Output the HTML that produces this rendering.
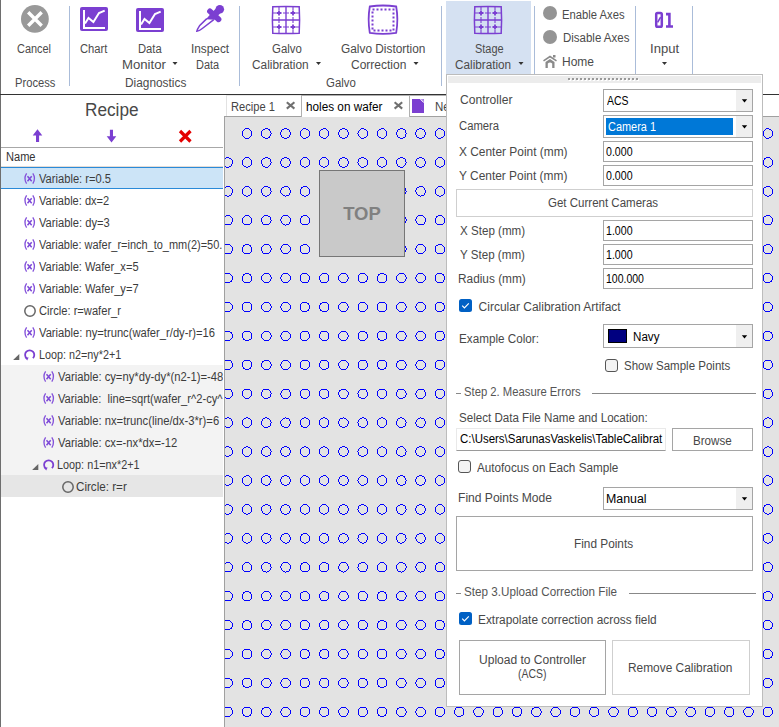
<!DOCTYPE html><html><head><meta charset="utf-8"><style>
html,body{margin:0;padding:0;width:779px;height:727px;overflow:hidden;background:#fff}
body{position:relative;font-family:"Liberation Sans",sans-serif}
.a{position:absolute}
.t{position:absolute;white-space:pre;line-height:1;transform-origin:0 0;font-family:"Liberation Sans",sans-serif}
</style></head><body>
<div class="a" style="left:0;top:95px;width:224px;height:632px;background:#fff"></div><div class="a" style="left:1px;top:147px;width:222px;height:1px;background:#a8a8a8"></div><div class="a" style="left:1px;top:166px;width:222px;height:1px;background:#e4dcd6"></div><div class="a" style="left:1px;top:167px;width:222px;height:20px;border-top:1px solid #2a8ad8;border-bottom:1px solid #2a8ad8;background:#cce4f7"></div><div class="a" style="left:1px;top:365px;width:222px;height:110px;background:#f3f3f3"></div><div class="a" style="left:1px;top:475px;width:222px;height:22px;background:#e6e6e6"></div><svg class="a" style="left:23.9px;top:167px;overflow:visible" width="14" height="22"><path d="M2.6 6.4 Q-0.8 11.5 2.6 16.6 M8.8 6.4 Q12.2 11.5 8.8 16.6" stroke="#8350da" stroke-width="1.3" fill="none"/><path d="M3.5 9.2 L7.7 14.3 M7.7 9.2 L3.5 14.3" stroke="#7d48d8" stroke-width="1.5"/></svg><svg class="a" style="left:23.9px;top:189px;overflow:visible" width="14" height="22"><path d="M2.6 6.4 Q-0.8 11.5 2.6 16.6 M8.8 6.4 Q12.2 11.5 8.8 16.6" stroke="#8350da" stroke-width="1.3" fill="none"/><path d="M3.5 9.2 L7.7 14.3 M7.7 9.2 L3.5 14.3" stroke="#7d48d8" stroke-width="1.5"/></svg><svg class="a" style="left:23.9px;top:211px;overflow:visible" width="14" height="22"><path d="M2.6 6.4 Q-0.8 11.5 2.6 16.6 M8.8 6.4 Q12.2 11.5 8.8 16.6" stroke="#8350da" stroke-width="1.3" fill="none"/><path d="M3.5 9.2 L7.7 14.3 M7.7 9.2 L3.5 14.3" stroke="#7d48d8" stroke-width="1.5"/></svg><svg class="a" style="left:23.9px;top:233px;overflow:visible" width="14" height="22"><path d="M2.6 6.4 Q-0.8 11.5 2.6 16.6 M8.8 6.4 Q12.2 11.5 8.8 16.6" stroke="#8350da" stroke-width="1.3" fill="none"/><path d="M3.5 9.2 L7.7 14.3 M7.7 9.2 L3.5 14.3" stroke="#7d48d8" stroke-width="1.5"/></svg><svg class="a" style="left:23.9px;top:255px;overflow:visible" width="14" height="22"><path d="M2.6 6.4 Q-0.8 11.5 2.6 16.6 M8.8 6.4 Q12.2 11.5 8.8 16.6" stroke="#8350da" stroke-width="1.3" fill="none"/><path d="M3.5 9.2 L7.7 14.3 M7.7 9.2 L3.5 14.3" stroke="#7d48d8" stroke-width="1.5"/></svg><svg class="a" style="left:23.9px;top:277px;overflow:visible" width="14" height="22"><path d="M2.6 6.4 Q-0.8 11.5 2.6 16.6 M8.8 6.4 Q12.2 11.5 8.8 16.6" stroke="#8350da" stroke-width="1.3" fill="none"/><path d="M3.5 9.2 L7.7 14.3 M7.7 9.2 L3.5 14.3" stroke="#7d48d8" stroke-width="1.5"/></svg><svg class="a" style="left:22.9px;top:303.7px" width="14" height="14"><circle cx="7" cy="7" r="5.2" stroke="#666" stroke-width="1.5" fill="none"/></svg><svg class="a" style="left:23.9px;top:321px;overflow:visible" width="14" height="22"><path d="M2.6 6.4 Q-0.8 11.5 2.6 16.6 M8.8 6.4 Q12.2 11.5 8.8 16.6" stroke="#8350da" stroke-width="1.3" fill="none"/><path d="M3.5 9.2 L7.7 14.3 M7.7 9.2 L3.5 14.3" stroke="#7d48d8" stroke-width="1.5"/></svg><svg class="a" style="left:11.9px;top:347px" width="26" height="14"><path d="M1.1 13 L7.3 7 V13 Z" fill="#666"/><path d="M20.9 11.2 A4.6 4.6 0 1 0 14.6 11.3" stroke="#7b3fd1" stroke-width="1.8" fill="none"/><path d="M12.6 10.2 L16.6 10.4 L15.2 13.6 Z" fill="#7b3fd1"/></svg><svg class="a" style="left:42.7px;top:365px;overflow:visible" width="14" height="22"><path d="M2.6 6.4 Q-0.8 11.5 2.6 16.6 M8.8 6.4 Q12.2 11.5 8.8 16.6" stroke="#8350da" stroke-width="1.3" fill="none"/><path d="M3.5 9.2 L7.7 14.3 M7.7 9.2 L3.5 14.3" stroke="#7d48d8" stroke-width="1.5"/></svg><svg class="a" style="left:42.7px;top:387px;overflow:visible" width="14" height="22"><path d="M2.6 6.4 Q-0.8 11.5 2.6 16.6 M8.8 6.4 Q12.2 11.5 8.8 16.6" stroke="#8350da" stroke-width="1.3" fill="none"/><path d="M3.5 9.2 L7.7 14.3 M7.7 9.2 L3.5 14.3" stroke="#7d48d8" stroke-width="1.5"/></svg><svg class="a" style="left:42.7px;top:409px;overflow:visible" width="14" height="22"><path d="M2.6 6.4 Q-0.8 11.5 2.6 16.6 M8.8 6.4 Q12.2 11.5 8.8 16.6" stroke="#8350da" stroke-width="1.3" fill="none"/><path d="M3.5 9.2 L7.7 14.3 M7.7 9.2 L3.5 14.3" stroke="#7d48d8" stroke-width="1.5"/></svg><svg class="a" style="left:42.7px;top:431px;overflow:visible" width="14" height="22"><path d="M2.6 6.4 Q-0.8 11.5 2.6 16.6 M8.8 6.4 Q12.2 11.5 8.8 16.6" stroke="#8350da" stroke-width="1.3" fill="none"/><path d="M3.5 9.2 L7.7 14.3 M7.7 9.2 L3.5 14.3" stroke="#7d48d8" stroke-width="1.5"/></svg><svg class="a" style="left:30.7px;top:457px" width="26" height="14"><path d="M1.1 13 L7.3 7 V13 Z" fill="#666"/><path d="M20.9 11.2 A4.6 4.6 0 1 0 14.6 11.3" stroke="#7b3fd1" stroke-width="1.8" fill="none"/><path d="M12.6 10.2 L16.6 10.4 L15.2 13.6 Z" fill="#7b3fd1"/></svg><svg class="a" style="left:60.5px;top:479.7px" width="14" height="14"><circle cx="7" cy="7" r="5.2" stroke="#666" stroke-width="1.5" fill="none"/></svg><div class="a" style="left:0;top:0;width:223px;height:727px;overflow:hidden"><div class="t" style="left:39.40px;top:172.94px;font-size:12px;color:#3c3c3c;transform:scaleX(0.9299);">Variable: r=0.5</div><div class="t" style="left:39.40px;top:194.94px;font-size:12px;color:#3c3c3c;transform:scaleX(0.9211);">Variable: dx=2</div><div class="t" style="left:39.40px;top:216.94px;font-size:12px;color:#3c3c3c;transform:scaleX(0.9276);">Variable: dy=3</div><div class="t" style="left:39.40px;top:238.94px;font-size:12px;color:#3c3c3c;transform:scaleX(0.9140);">Variable: wafer_r=inch_to_mm(2)=50.</div><div class="t" style="left:39.40px;top:260.94px;font-size:12px;color:#3c3c3c;transform:scaleX(0.9241);">Variable: Wafer_x=5</div><div class="t" style="left:39.40px;top:282.94px;font-size:12px;color:#3c3c3c;transform:scaleX(0.9241);">Variable: Wafer_y=7</div><div class="t" style="left:39.40px;top:304.94px;font-size:12px;color:#3c3c3c;transform:scaleX(0.9281);">Circle: r=wafer_r</div><div class="t" style="left:39.40px;top:326.94px;font-size:12px;color:#3c3c3c;transform:scaleX(0.9330);">Variable: ny=trunc(wafer_r/dy-r)=16</div><div class="t" style="left:38.50px;top:348.94px;font-size:12px;color:#3c3c3c;transform:scaleX(0.8989);">Loop: n2=ny*2+1</div><div class="t" style="left:57.90px;top:370.94px;font-size:12px;color:#3c3c3c;transform:scaleX(0.9364);">Variable: cy=ny*dy-dy*(n2-1)=-48</div><div class="t" style="left:57.90px;top:392.94px;font-size:12px;color:#3c3c3c;transform:scaleX(0.9311);">Variable:  line=sqrt(wafer_r^2-cy^</div><div class="t" style="left:57.90px;top:414.94px;font-size:12px;color:#3c3c3c;transform:scaleX(0.9378);">Variable: nx=trunc(line/dx-3*r)=6</div><div class="t" style="left:57.90px;top:436.94px;font-size:12px;color:#3c3c3c;transform:scaleX(0.9378);">Variable: cx=-nx*dx=-12</div><div class="t" style="left:57.00px;top:458.94px;font-size:12px;color:#3c3c3c;transform:scaleX(0.9033);">Loop: n1=nx*2+1</div><div class="t" style="left:76.40px;top:480.94px;font-size:12px;color:#3c3c3c;transform:scaleX(0.9698);">Circle: r=r</div></div><svg class="a" style="left:0;top:0" width="224" height="160"><path d="M37.5 129.2 L42.3 135.6 H39.1 V142 H36 V135.6 H32.7 Z" fill="#7b3fd1"/><path d="M111.5 142.6 L106.7 136.2 H109.9 V129.8 H113 V136.2 H116.3 Z" fill="#7b3fd1"/><path d="M180 131 L190.5 141.5 M190.5 131 L180 141.5" stroke="#e40000" stroke-width="3.2"/></svg><div class="a" style="left:0;top:0;width:1px;height:727px;background:#6e6e6e"></div><div class="a" style="left:224px;top:116px;width:555px;height:611px;background:#e3e3e3;border-left:1px solid #a0a0a0;border-top:1px solid #a0a0a0;box-sizing:border-box"></div><svg class="a" style="left:225px;top:117px" width="554" height="610" viewBox="225 117 554 610"><path fill="#0000ff" shape-rendering="crispEdges" d="M766 128h3v1h-3zM765 129h1v1h-1zM769 129h2v1h-2zM764 130h1v1h-1zM771 130h1v1h-1zM763 131h1v5h-1zM772 131h1v5h-1zM764 136h1v1h-1zM771 136h1v1h-1zM765 137h1v1h-1zM769 137h2v1h-2zM766 138h3v1h-3zM747 128h3v1h-3zM745 129h2v1h-2zM750 129h2v1h-2zM744 130h1v2h-1zM752 130h1v2h-1zM743 132h1v3h-1zM753 132h1v3h-1zM744 135h1v2h-1zM752 135h1v2h-1zM745 137h2v1h-2zM750 137h2v1h-2zM747 138h3v1h-3zM728 128h3v1h-3zM726 129h2v1h-2zM731 129h1v1h-1zM725 130h1v1h-1zM732 130h1v1h-1zM724 131h1v5h-1zM733 131h1v5h-1zM725 136h1v1h-1zM732 136h1v1h-1zM726 137h2v1h-2zM731 137h1v1h-1zM728 138h3v1h-3zM708 128h3v1h-3zM707 129h1v1h-1zM711 129h2v1h-2zM706 130h1v1h-1zM713 130h1v1h-1zM705 131h1v5h-1zM714 131h1v5h-1zM706 136h1v1h-1zM713 136h1v1h-1zM707 137h1v1h-1zM711 137h2v1h-2zM708 138h3v1h-3zM689 128h3v1h-3zM687 129h2v1h-2zM692 129h2v1h-2zM686 130h1v2h-1zM694 130h1v2h-1zM685 132h1v3h-1zM695 132h1v3h-1zM686 135h1v2h-1zM694 135h1v2h-1zM687 137h2v1h-2zM692 137h2v1h-2zM689 138h3v1h-3zM670 128h3v1h-3zM668 129h2v1h-2zM673 129h2v1h-2zM667 130h1v2h-1zM675 130h1v3h-1zM666 132h1v3h-1zM676 133h1v1h-1zM675 134h1v3h-1zM667 135h1v2h-1zM668 137h2v1h-2zM673 137h2v1h-2zM670 138h3v1h-3zM651 128h3v1h-3zM649 129h2v1h-2zM654 129h1v1h-1zM648 130h1v1h-1zM655 130h1v1h-1zM647 131h1v5h-1zM656 131h1v5h-1zM648 136h1v1h-1zM655 136h1v1h-1zM649 137h2v1h-2zM654 137h1v1h-1zM651 138h3v1h-3zM631 128h3v1h-3zM630 129h1v1h-1zM634 129h2v1h-2zM629 130h1v1h-1zM636 130h1v1h-1zM628 131h1v5h-1zM637 131h1v5h-1zM629 136h1v1h-1zM636 136h1v1h-1zM630 137h1v1h-1zM634 137h2v1h-2zM631 138h3v1h-3zM612 128h3v1h-3zM610 129h2v1h-2zM615 129h2v1h-2zM609 130h1v2h-1zM617 130h1v2h-1zM608 132h1v3h-1zM618 132h1v3h-1zM609 135h1v2h-1zM617 135h1v2h-1zM610 137h2v1h-2zM615 137h2v1h-2zM612 138h3v1h-3zM593 128h3v1h-3zM591 129h2v1h-2zM596 129h1v1h-1zM590 130h1v1h-1zM597 130h1v1h-1zM589 131h1v5h-1zM598 131h1v5h-1zM590 136h1v1h-1zM597 136h1v1h-1zM591 137h2v1h-2zM596 137h1v1h-1zM593 138h3v1h-3zM573 128h3v1h-3zM572 129h1v1h-1zM576 129h2v1h-2zM571 130h1v1h-1zM578 130h1v1h-1zM570 131h1v5h-1zM579 131h1v5h-1zM571 136h1v1h-1zM578 136h1v1h-1zM572 137h1v1h-1zM576 137h2v1h-2zM573 138h3v1h-3zM554 128h3v1h-3zM552 129h2v1h-2zM557 129h2v1h-2zM551 130h1v2h-1zM559 130h1v2h-1zM550 132h1v3h-1zM560 132h1v3h-1zM551 135h1v2h-1zM559 135h1v2h-1zM552 137h2v1h-2zM557 137h2v1h-2zM554 138h3v1h-3zM535 128h3v1h-3zM533 129h2v1h-2zM538 129h2v1h-2zM532 130h1v2h-1zM540 130h1v3h-1zM531 132h1v3h-1zM541 133h1v1h-1zM540 134h1v3h-1zM532 135h1v2h-1zM533 137h2v1h-2zM538 137h2v1h-2zM535 138h3v1h-3zM516 128h3v1h-3zM514 129h2v1h-2zM519 129h1v1h-1zM513 130h1v1h-1zM520 130h1v1h-1zM512 131h1v5h-1zM521 131h1v5h-1zM513 136h1v1h-1zM520 136h1v1h-1zM514 137h2v1h-2zM519 137h1v1h-1zM516 138h3v1h-3zM496 128h3v1h-3zM495 129h1v1h-1zM499 129h2v1h-2zM494 130h1v1h-1zM501 130h1v1h-1zM493 131h1v5h-1zM502 131h1v5h-1zM494 136h1v1h-1zM501 136h1v1h-1zM495 137h1v1h-1zM499 137h2v1h-2zM496 138h3v1h-3zM477 128h3v1h-3zM475 129h2v1h-2zM480 129h2v1h-2zM474 130h1v2h-1zM482 130h1v2h-1zM473 132h1v3h-1zM483 132h1v3h-1zM474 135h1v2h-1zM482 135h1v2h-1zM475 137h2v1h-2zM480 137h2v1h-2zM477 138h3v1h-3zM458 128h3v1h-3zM456 129h2v1h-2zM461 129h1v1h-1zM455 130h1v1h-1zM462 130h1v1h-1zM454 131h1v5h-1zM463 131h1v5h-1zM455 136h1v1h-1zM462 136h1v1h-1zM456 137h2v1h-2zM461 137h1v1h-1zM458 138h3v1h-3zM438 128h3v1h-3zM437 129h1v1h-1zM441 129h2v1h-2zM436 130h1v1h-1zM443 130h1v1h-1zM435 131h1v5h-1zM444 131h1v5h-1zM436 136h1v1h-1zM443 136h1v1h-1zM437 137h1v1h-1zM441 137h2v1h-2zM438 138h3v1h-3zM419 128h3v1h-3zM417 129h2v1h-2zM422 129h2v1h-2zM416 130h1v2h-1zM424 130h1v2h-1zM415 132h1v3h-1zM425 132h1v3h-1zM416 135h1v2h-1zM424 135h1v2h-1zM417 137h2v1h-2zM422 137h2v1h-2zM419 138h3v1h-3zM400 128h3v1h-3zM398 129h2v1h-2zM403 129h2v1h-2zM397 130h1v2h-1zM405 130h1v3h-1zM396 132h1v3h-1zM406 133h1v1h-1zM405 134h1v3h-1zM397 135h1v2h-1zM398 137h2v1h-2zM403 137h2v1h-2zM400 138h3v1h-3zM381 128h3v1h-3zM379 129h2v1h-2zM384 129h1v1h-1zM378 130h1v1h-1zM385 130h1v1h-1zM377 131h1v5h-1zM386 131h1v5h-1zM378 136h1v1h-1zM385 136h1v1h-1zM379 137h2v1h-2zM384 137h1v1h-1zM381 138h3v1h-3zM361 128h3v1h-3zM360 129h1v1h-1zM364 129h2v1h-2zM359 130h1v1h-1zM366 130h1v1h-1zM358 131h1v2h-1zM367 131h1v5h-1zM357 133h1v1h-1zM358 134h1v2h-1zM359 136h1v1h-1zM366 136h1v1h-1zM360 137h1v1h-1zM364 137h2v1h-2zM361 138h3v1h-3zM342 128h3v1h-3zM340 129h2v1h-2zM345 129h2v1h-2zM339 130h1v2h-1zM347 130h1v2h-1zM338 132h1v3h-1zM348 132h1v3h-1zM339 135h1v2h-1zM347 135h1v2h-1zM340 137h2v1h-2zM345 137h2v1h-2zM342 138h3v1h-3zM323 128h3v1h-3zM321 129h2v1h-2zM326 129h1v1h-1zM320 130h1v1h-1zM327 130h1v1h-1zM319 131h1v5h-1zM328 131h1v5h-1zM320 136h1v1h-1zM327 136h1v1h-1zM321 137h2v1h-2zM326 137h1v1h-1zM323 138h3v1h-3zM303 128h3v1h-3zM302 129h1v1h-1zM306 129h2v1h-2zM301 130h1v1h-1zM308 130h1v1h-1zM300 131h1v5h-1zM309 131h1v5h-1zM301 136h1v1h-1zM308 136h1v1h-1zM302 137h1v1h-1zM306 137h2v1h-2zM303 138h3v1h-3zM284 128h3v1h-3zM282 129h2v1h-2zM287 129h2v1h-2zM281 130h1v2h-1zM289 130h1v2h-1zM280 132h1v3h-1zM290 132h1v3h-1zM281 135h1v2h-1zM289 135h1v2h-1zM282 137h2v1h-2zM287 137h2v1h-2zM284 138h3v1h-3zM265 128h3v1h-3zM263 129h2v1h-2zM268 129h2v1h-2zM262 130h1v1h-1zM269 130h1v1h-1zM261 131h1v5h-1zM270 131h1v2h-1zM271 133h1v1h-1zM270 134h1v2h-1zM262 136h1v1h-1zM269 136h1v1h-1zM263 137h2v1h-2zM268 137h2v1h-2zM265 138h3v1h-3zM245 128h4v1h-4zM244 129h1v1h-1zM249 129h1v1h-1zM243 130h1v1h-1zM250 130h1v1h-1zM242 131h1v5h-1zM251 131h1v5h-1zM243 136h1v1h-1zM250 136h1v1h-1zM244 137h1v1h-1zM249 137h1v1h-1zM245 138h4v1h-4zM766 157h4v1h-4zM764 158h2v1h-2zM770 158h1v1h-1zM764 159h1v1h-1zM771 159h1v1h-1zM763 160h1v5h-1zM772 160h1v5h-1zM764 165h1v1h-1zM771 165h1v1h-1zM765 166h2v1h-2zM769 166h2v1h-2zM767 167h2v1h-2zM747 157h3v1h-3zM745 158h2v1h-2zM750 158h2v1h-2zM744 159h1v2h-1zM752 159h1v2h-1zM743 161h1v3h-1zM753 161h1v3h-1zM744 164h1v2h-1zM752 164h1v2h-1zM745 166h2v1h-2zM750 166h2v1h-2zM747 167h3v1h-3zM727 157h4v1h-4zM726 158h1v1h-1zM731 158h2v1h-2zM725 159h1v1h-1zM732 159h1v1h-1zM724 160h1v5h-1zM733 160h1v5h-1zM725 165h1v1h-1zM732 165h1v1h-1zM726 166h2v1h-2zM730 166h2v1h-2zM728 167h2v1h-2zM708 157h4v1h-4zM707 158h1v1h-1zM712 158h1v1h-1zM706 159h1v1h-1zM713 159h1v1h-1zM705 160h1v5h-1zM714 160h1v5h-1zM706 165h1v1h-1zM713 165h1v1h-1zM707 166h2v1h-2zM711 166h2v1h-2zM709 167h2v1h-2zM689 157h3v1h-3zM687 158h2v1h-2zM692 158h2v1h-2zM686 159h1v2h-1zM694 159h1v2h-1zM685 161h1v2h-1zM695 161h1v3h-1zM686 163h1v2h-1zM694 164h1v2h-1zM687 165h1v1h-1zM688 166h1v1h-1zM692 166h2v1h-2zM689 167h3v1h-3zM670 157h3v1h-3zM668 158h2v1h-2zM673 158h2v1h-2zM667 159h1v2h-1zM675 159h1v2h-1zM666 161h1v3h-1zM676 161h1v2h-1zM675 163h1v2h-1zM667 164h1v2h-1zM674 165h1v1h-1zM668 166h2v1h-2zM673 166h1v1h-1zM670 167h3v1h-3zM650 157h4v1h-4zM649 158h1v1h-1zM654 158h1v1h-1zM648 159h1v1h-1zM655 159h1v1h-1zM647 160h1v5h-1zM656 160h1v5h-1zM648 165h1v1h-1zM655 165h1v1h-1zM649 166h2v1h-2zM653 166h2v1h-2zM651 167h2v1h-2zM631 157h4v1h-4zM629 158h2v1h-2zM635 158h1v1h-1zM629 159h1v1h-1zM636 159h1v1h-1zM628 160h1v5h-1zM637 160h1v5h-1zM629 165h1v1h-1zM636 165h1v1h-1zM630 166h2v1h-2zM634 166h2v1h-2zM632 167h2v1h-2zM612 157h3v1h-3zM610 158h2v1h-2zM615 158h2v1h-2zM609 159h1v2h-1zM617 159h1v2h-1zM608 161h1v3h-1zM618 161h1v3h-1zM609 164h1v2h-1zM617 164h1v2h-1zM610 166h2v1h-2zM615 166h2v1h-2zM612 167h3v1h-3zM592 157h4v1h-4zM591 158h1v1h-1zM596 158h1v1h-1zM590 159h1v1h-1zM597 159h1v1h-1zM589 160h1v5h-1zM598 160h1v5h-1zM590 165h1v1h-1zM597 165h1v1h-1zM591 166h2v1h-2zM595 166h2v1h-2zM593 167h2v1h-2zM573 157h4v1h-4zM572 158h1v1h-1zM577 158h1v1h-1zM571 159h1v1h-1zM578 159h1v1h-1zM570 160h1v5h-1zM579 160h1v5h-1zM571 165h1v1h-1zM578 165h1v1h-1zM572 166h2v1h-2zM576 166h2v1h-2zM574 167h2v1h-2zM554 157h3v1h-3zM552 158h2v1h-2zM557 158h2v1h-2zM551 159h1v2h-1zM559 159h1v2h-1zM550 161h1v3h-1zM560 161h1v3h-1zM551 164h1v1h-1zM559 164h1v2h-1zM552 165h1v1h-1zM553 166h1v1h-1zM557 166h2v1h-2zM554 167h3v1h-3zM535 157h3v1h-3zM533 158h2v1h-2zM538 158h2v1h-2zM532 159h1v1h-1zM540 159h1v3h-1zM531 160h1v4h-1zM541 162h1v1h-1zM540 163h1v2h-1zM532 164h1v2h-1zM539 165h1v1h-1zM533 166h2v1h-2zM538 166h1v1h-1zM535 167h3v1h-3zM515 157h4v1h-4zM514 158h1v1h-1zM519 158h1v1h-1zM513 159h1v1h-1zM520 159h1v1h-1zM512 160h1v5h-1zM521 160h1v5h-1zM513 165h1v1h-1zM520 165h1v1h-1zM514 166h2v1h-2zM518 166h2v1h-2zM516 167h2v1h-2zM496 157h4v1h-4zM494 158h2v1h-2zM500 158h1v1h-1zM494 159h1v1h-1zM501 159h1v1h-1zM493 160h1v5h-1zM502 160h1v5h-1zM494 165h1v1h-1zM501 165h1v1h-1zM495 166h2v1h-2zM499 166h2v1h-2zM497 167h2v1h-2zM477 157h3v1h-3zM475 158h2v1h-2zM480 158h2v1h-2zM474 159h1v2h-1zM482 159h1v2h-1zM473 161h1v3h-1zM483 161h1v3h-1zM474 164h1v2h-1zM482 164h1v2h-1zM475 166h2v1h-2zM480 166h2v1h-2zM477 167h3v1h-3zM457 157h4v1h-4zM456 158h1v1h-1zM461 158h1v1h-1zM455 159h1v1h-1zM462 159h1v1h-1zM454 160h1v5h-1zM463 160h1v5h-1zM455 165h1v1h-1zM462 165h1v1h-1zM456 166h2v1h-2zM460 166h2v1h-2zM458 167h2v1h-2zM438 157h4v1h-4zM437 158h1v1h-1zM442 158h1v1h-1zM436 159h1v1h-1zM443 159h1v1h-1zM435 160h1v5h-1zM444 160h1v5h-1zM436 165h1v1h-1zM443 165h1v1h-1zM437 166h2v1h-2zM441 166h2v1h-2zM439 167h2v1h-2zM419 157h3v1h-3zM417 158h2v1h-2zM422 158h2v1h-2zM416 159h1v2h-1zM424 159h1v2h-1zM415 161h1v3h-1zM425 161h1v3h-1zM416 164h1v2h-1zM424 164h1v2h-1zM417 166h2v1h-2zM422 166h2v1h-2zM419 167h3v1h-3zM400 157h3v1h-3zM398 158h2v1h-2zM403 158h2v1h-2zM397 159h1v1h-1zM405 159h1v3h-1zM396 160h1v4h-1zM406 162h1v1h-1zM405 163h1v2h-1zM397 164h1v2h-1zM404 165h1v1h-1zM398 166h2v1h-2zM403 166h1v1h-1zM400 167h3v1h-3zM380 157h4v1h-4zM379 158h1v1h-1zM384 158h1v1h-1zM378 159h1v1h-1zM385 159h1v1h-1zM377 160h1v5h-1zM386 160h1v5h-1zM378 165h1v1h-1zM385 165h1v1h-1zM379 166h2v1h-2zM383 166h2v1h-2zM381 167h2v1h-2zM361 157h3v1h-3zM359 158h2v1h-2zM364 158h2v1h-2zM358 159h1v3h-1zM366 159h1v1h-1zM367 160h1v5h-1zM357 162h1v1h-1zM358 163h1v2h-1zM359 165h1v1h-1zM366 165h1v1h-1zM360 166h1v1h-1zM364 166h2v1h-2zM361 167h3v1h-3zM342 157h3v1h-3zM340 158h2v1h-2zM345 158h2v1h-2zM339 159h1v2h-1zM347 159h1v2h-1zM338 161h1v3h-1zM348 161h1v3h-1zM339 164h1v2h-1zM347 164h1v2h-1zM340 166h2v1h-2zM345 166h2v1h-2zM342 167h3v1h-3zM322 157h4v1h-4zM321 158h1v1h-1zM326 158h1v1h-1zM320 159h1v1h-1zM327 159h1v1h-1zM319 160h1v5h-1zM328 160h1v5h-1zM320 165h1v1h-1zM327 165h1v1h-1zM321 166h2v1h-2zM325 166h2v1h-2zM323 167h2v1h-2zM303 157h4v1h-4zM302 158h1v1h-1zM307 158h1v1h-1zM301 159h1v1h-1zM308 159h1v1h-1zM300 160h1v5h-1zM309 160h1v5h-1zM301 165h1v1h-1zM308 165h1v1h-1zM302 166h2v1h-2zM306 166h2v1h-2zM304 167h2v1h-2zM284 157h3v1h-3zM282 158h2v1h-2zM287 158h2v1h-2zM281 159h1v2h-1zM289 159h1v2h-1zM280 161h1v3h-1zM290 161h1v3h-1zM281 164h1v2h-1zM289 164h1v2h-1zM282 166h2v1h-2zM287 166h2v1h-2zM284 167h3v1h-3zM265 157h3v1h-3zM263 158h2v1h-2zM268 158h2v1h-2zM262 159h1v1h-1zM270 159h1v3h-1zM261 160h1v4h-1zM271 162h1v1h-1zM270 163h1v2h-1zM262 164h1v2h-1zM269 165h1v1h-1zM263 166h2v1h-2zM268 166h1v1h-1zM265 167h3v1h-3zM245 157h4v1h-4zM244 158h1v1h-1zM249 158h1v1h-1zM243 159h1v1h-1zM250 159h1v1h-1zM242 160h1v5h-1zM251 160h1v5h-1zM243 165h1v1h-1zM250 165h1v1h-1zM244 166h2v1h-2zM248 166h2v1h-2zM246 167h2v1h-2zM226 157h3v1h-3zM224 158h2v1h-2zM229 158h2v1h-2zM231 159h1v1h-1zM232 160h1v4h-1zM231 164h1v2h-1zM225 166h1v1h-1zM229 166h2v1h-2zM226 167h3v1h-3zM766 186h4v1h-4zM764 187h2v1h-2zM770 187h1v1h-1zM763 188h1v6h-1zM771 188h1v1h-1zM772 189h1v5h-1zM764 194h1v1h-1zM771 194h1v1h-1zM765 195h2v1h-2zM769 195h2v1h-2zM767 196h2v1h-2zM747 186h3v1h-3zM745 187h2v1h-2zM750 187h2v1h-2zM744 188h1v2h-1zM752 188h1v2h-1zM743 190h1v3h-1zM753 190h1v3h-1zM744 193h1v2h-1zM752 193h1v2h-1zM745 195h3v1h-3zM749 195h3v1h-3zM748 196h1v1h-1zM727 186h4v1h-4zM726 187h1v1h-1zM731 187h2v1h-2zM725 188h1v1h-1zM733 188h1v6h-1zM724 189h1v5h-1zM725 194h1v1h-1zM732 194h1v1h-1zM726 195h2v1h-2zM730 195h2v1h-2zM728 196h2v1h-2zM708 186h4v1h-4zM707 187h1v1h-1zM712 187h1v1h-1zM706 188h1v1h-1zM713 188h1v1h-1zM705 189h1v5h-1zM714 189h1v5h-1zM706 194h1v1h-1zM713 194h1v1h-1zM707 195h2v1h-2zM711 195h2v1h-2zM709 196h2v1h-2zM689 186h4v1h-4zM687 187h2v1h-2zM693 187h1v1h-1zM686 188h1v2h-1zM694 188h1v1h-1zM695 189h1v4h-1zM685 190h1v2h-1zM686 192h1v2h-1zM694 193h1v2h-1zM687 194h1v1h-1zM688 195h2v1h-2zM692 195h2v1h-2zM690 196h2v1h-2zM669 186h4v1h-4zM668 187h1v1h-1zM673 187h2v1h-2zM667 188h1v1h-1zM675 188h1v2h-1zM666 189h1v4h-1zM676 190h1v2h-1zM675 192h1v2h-1zM667 193h1v2h-1zM674 194h1v1h-1zM668 195h2v1h-2zM672 195h2v1h-2zM670 196h2v1h-2zM650 186h4v1h-4zM649 187h1v1h-1zM654 187h1v1h-1zM648 188h1v1h-1zM655 188h1v1h-1zM647 189h1v5h-1zM656 189h1v5h-1zM648 194h1v1h-1zM655 194h1v1h-1zM649 195h2v1h-2zM653 195h2v1h-2zM651 196h2v1h-2zM631 186h4v1h-4zM629 187h2v1h-2zM635 187h1v1h-1zM628 188h1v6h-1zM636 188h1v1h-1zM637 189h1v5h-1zM629 194h1v1h-1zM636 194h1v1h-1zM630 195h2v1h-2zM634 195h2v1h-2zM632 196h2v1h-2zM612 186h3v1h-3zM610 187h2v1h-2zM615 187h2v1h-2zM609 188h1v2h-1zM617 188h1v2h-1zM608 190h1v3h-1zM618 190h1v3h-1zM609 193h1v2h-1zM617 193h1v2h-1zM610 195h3v1h-3zM614 195h3v1h-3zM613 196h1v1h-1zM592 186h4v1h-4zM591 187h1v1h-1zM596 187h2v1h-2zM590 188h1v1h-1zM598 188h1v6h-1zM589 189h1v5h-1zM590 194h1v1h-1zM597 194h1v1h-1zM591 195h2v1h-2zM595 195h2v1h-2zM593 196h2v1h-2zM573 186h4v1h-4zM572 187h1v1h-1zM577 187h1v1h-1zM571 188h1v1h-1zM578 188h1v1h-1zM570 189h1v5h-1zM579 189h1v5h-1zM571 194h1v1h-1zM578 194h1v1h-1zM572 195h2v1h-2zM576 195h2v1h-2zM574 196h2v1h-2zM554 186h4v1h-4zM552 187h2v1h-2zM558 187h1v1h-1zM551 188h1v2h-1zM559 188h1v1h-1zM560 189h1v4h-1zM550 190h1v2h-1zM551 192h1v2h-1zM559 193h1v2h-1zM552 194h1v1h-1zM553 195h2v1h-2zM557 195h2v1h-2zM555 196h2v1h-2zM534 186h4v1h-4zM533 187h1v1h-1zM538 187h2v1h-2zM532 188h1v1h-1zM540 188h1v2h-1zM531 189h1v4h-1zM541 190h1v2h-1zM540 192h1v2h-1zM532 193h1v2h-1zM539 194h1v1h-1zM533 195h2v1h-2zM537 195h2v1h-2zM535 196h2v1h-2zM515 186h4v1h-4zM514 187h1v1h-1zM519 187h1v1h-1zM513 188h1v1h-1zM520 188h1v1h-1zM512 189h1v5h-1zM521 189h1v5h-1zM513 194h1v1h-1zM520 194h1v1h-1zM514 195h2v1h-2zM518 195h2v1h-2zM516 196h2v1h-2zM496 186h4v1h-4zM494 187h2v1h-2zM500 187h1v1h-1zM493 188h1v6h-1zM501 188h1v1h-1zM502 189h1v4h-1zM501 193h1v2h-1zM494 194h1v1h-1zM495 195h2v1h-2zM499 195h2v1h-2zM497 196h2v1h-2zM477 186h3v1h-3zM475 187h2v1h-2zM480 187h2v1h-2zM474 188h1v2h-1zM482 188h1v2h-1zM473 190h1v3h-1zM483 190h1v3h-1zM474 193h1v2h-1zM482 193h1v1h-1zM481 194h2v1h-2zM475 195h3v1h-3zM479 195h2v1h-2zM478 196h1v1h-1zM457 186h4v1h-4zM456 187h1v1h-1zM461 187h2v1h-2zM455 188h1v1h-1zM462 188h1v1h-1zM454 189h1v5h-1zM463 189h1v5h-1zM455 194h1v1h-1zM462 194h1v1h-1zM456 195h2v1h-2zM460 195h2v1h-2zM458 196h2v1h-2zM438 186h4v1h-4zM437 187h1v1h-1zM442 187h1v1h-1zM436 188h1v1h-1zM443 188h1v1h-1zM435 189h1v5h-1zM444 189h1v5h-1zM436 194h1v1h-1zM443 194h1v1h-1zM437 195h2v1h-2zM441 195h2v1h-2zM439 196h2v1h-2zM419 186h4v1h-4zM417 187h2v1h-2zM423 187h1v1h-1zM416 188h1v2h-1zM424 188h1v2h-1zM415 190h1v2h-1zM425 190h1v3h-1zM416 192h1v2h-1zM424 193h1v2h-1zM417 194h1v1h-1zM418 195h2v1h-2zM421 195h3v1h-3zM420 196h1v1h-1zM399 186h4v1h-4zM398 187h1v1h-1zM403 187h2v1h-2zM397 188h1v1h-1zM405 188h1v3h-1zM396 189h1v4h-1zM406 191h1v1h-1zM405 192h1v2h-1zM397 193h1v2h-1zM404 194h1v1h-1zM398 195h2v1h-2zM402 195h2v1h-2zM400 196h2v1h-2zM380 186h4v1h-4zM379 187h1v1h-1zM384 187h1v1h-1zM378 188h1v1h-1zM385 188h1v1h-1zM377 189h1v5h-1zM386 189h1v5h-1zM378 194h1v1h-1zM385 194h1v1h-1zM379 195h2v1h-2zM383 195h2v1h-2zM381 196h2v1h-2zM361 186h4v1h-4zM359 187h2v1h-2zM365 187h1v1h-1zM358 188h1v3h-1zM366 188h1v1h-1zM367 189h1v4h-1zM357 191h1v1h-1zM358 192h1v2h-1zM366 193h1v2h-1zM359 194h1v1h-1zM360 195h2v1h-2zM364 195h2v1h-2zM362 196h2v1h-2zM342 186h3v1h-3zM340 187h2v1h-2zM345 187h2v1h-2zM339 188h1v2h-1zM347 188h1v2h-1zM338 190h1v3h-1zM348 190h1v3h-1zM339 193h1v2h-1zM347 193h1v1h-1zM346 194h1v1h-1zM340 195h3v1h-3zM344 195h2v1h-2zM343 196h1v1h-1zM322 186h4v1h-4zM321 187h1v1h-1zM326 187h2v1h-2zM320 188h1v1h-1zM327 188h1v1h-1zM319 189h1v5h-1zM328 189h1v5h-1zM320 194h1v1h-1zM327 194h1v1h-1zM321 195h2v1h-2zM325 195h2v1h-2zM323 196h2v1h-2zM303 186h4v1h-4zM301 187h2v1h-2zM307 187h1v1h-1zM301 188h1v1h-1zM308 188h1v1h-1zM300 189h1v5h-1zM309 189h1v5h-1zM301 194h1v1h-1zM308 194h1v1h-1zM302 195h2v1h-2zM306 195h2v1h-2zM304 196h2v1h-2zM284 186h4v1h-4zM282 187h2v1h-2zM288 187h1v1h-1zM281 188h1v2h-1zM289 188h1v2h-1zM280 190h1v3h-1zM290 190h1v3h-1zM281 193h1v1h-1zM289 193h1v2h-1zM282 194h1v1h-1zM283 195h2v1h-2zM286 195h3v1h-3zM285 196h1v1h-1zM264 186h4v1h-4zM263 187h1v1h-1zM268 187h2v1h-2zM262 188h1v1h-1zM270 188h1v3h-1zM261 189h1v4h-1zM271 191h1v1h-1zM270 192h1v2h-1zM262 193h1v2h-1zM269 194h1v1h-1zM263 195h2v1h-2zM267 195h2v1h-2zM265 196h2v1h-2zM245 186h4v1h-4zM244 187h1v1h-1zM249 187h1v1h-1zM243 188h1v1h-1zM250 188h1v1h-1zM242 189h1v5h-1zM251 189h1v5h-1zM243 194h1v1h-1zM250 194h1v1h-1zM244 195h2v1h-2zM248 195h2v1h-2zM246 196h2v1h-2zM226 186h4v1h-4zM224 187h2v1h-2zM230 187h1v1h-1zM231 188h1v1h-1zM232 189h1v4h-1zM231 193h1v2h-1zM225 195h2v1h-2zM229 195h2v1h-2zM227 196h2v1h-2zM766 215h4v1h-4zM764 216h2v1h-2zM770 216h1v1h-1zM763 217h1v6h-1zM771 217h1v1h-1zM772 218h1v4h-1zM771 222h1v2h-1zM764 223h1v1h-1zM765 224h6v1h-6zM746 215h5v1h-5zM745 216h1v1h-1zM751 216h1v1h-1zM744 217h1v2h-1zM752 217h1v2h-1zM743 219h1v3h-1zM753 219h1v3h-1zM744 222h1v1h-1zM752 222h1v1h-1zM745 223h1v1h-1zM751 223h1v1h-1zM746 224h2v1h-2zM749 224h2v1h-2zM748 225h1v1h-1zM727 215h4v1h-4zM726 216h1v1h-1zM731 216h2v1h-2zM725 217h1v1h-1zM733 217h1v6h-1zM724 218h1v4h-1zM725 222h1v2h-1zM732 223h1v1h-1zM726 224h6v1h-6zM708 215h4v1h-4zM706 216h2v1h-2zM712 216h1v1h-1zM706 217h1v1h-1zM713 217h1v1h-1zM705 218h1v5h-1zM714 218h1v5h-1zM706 223h1v1h-1zM713 223h1v1h-1zM707 224h6v1h-6zM689 215h4v1h-4zM687 216h2v1h-2zM693 216h1v1h-1zM686 217h1v2h-1zM694 217h1v1h-1zM695 218h1v4h-1zM685 219h1v2h-1zM686 221h1v2h-1zM694 222h1v2h-1zM687 223h1v1h-1zM688 224h6v1h-6zM669 215h4v1h-4zM668 216h1v1h-1zM673 216h2v1h-2zM667 217h1v1h-1zM675 217h1v2h-1zM666 218h1v4h-1zM676 219h1v2h-1zM675 221h1v2h-1zM667 222h1v2h-1zM674 223h1v1h-1zM668 224h6v1h-6zM650 215h4v1h-4zM649 216h1v1h-1zM654 216h2v1h-2zM648 217h1v1h-1zM655 217h1v1h-1zM647 218h1v5h-1zM656 218h1v5h-1zM648 223h1v1h-1zM655 223h1v1h-1zM649 224h6v1h-6zM631 215h4v1h-4zM629 216h2v1h-2zM635 216h1v1h-1zM628 217h1v6h-1zM636 217h1v1h-1zM637 218h1v4h-1zM636 222h1v2h-1zM629 223h1v1h-1zM630 224h6v1h-6zM611 215h5v1h-5zM610 216h1v1h-1zM616 216h1v1h-1zM609 217h1v2h-1zM617 217h1v2h-1zM608 219h1v3h-1zM618 219h1v3h-1zM609 222h1v1h-1zM617 222h1v1h-1zM610 223h1v1h-1zM616 223h1v1h-1zM611 224h2v1h-2zM614 224h2v1h-2zM613 225h1v1h-1zM592 215h4v1h-4zM591 216h1v1h-1zM596 216h2v1h-2zM590 217h1v1h-1zM598 217h1v6h-1zM589 218h1v4h-1zM590 222h1v2h-1zM597 223h1v1h-1zM591 224h6v1h-6zM573 215h4v1h-4zM571 216h2v1h-2zM577 216h1v1h-1zM571 217h1v1h-1zM578 217h1v1h-1zM570 218h1v5h-1zM579 218h1v5h-1zM571 223h1v1h-1zM578 223h1v1h-1zM572 224h6v1h-6zM554 215h4v1h-4zM552 216h2v1h-2zM558 216h1v1h-1zM551 217h1v2h-1zM559 217h1v1h-1zM560 218h1v4h-1zM550 219h1v2h-1zM551 221h1v2h-1zM559 222h1v2h-1zM552 223h1v1h-1zM553 224h6v1h-6zM534 215h4v1h-4zM533 216h1v1h-1zM538 216h2v1h-2zM532 217h1v1h-1zM540 217h1v2h-1zM531 218h1v4h-1zM541 219h1v2h-1zM540 221h1v2h-1zM532 222h1v2h-1zM539 223h1v1h-1zM533 224h6v1h-6zM515 215h4v1h-4zM514 216h1v1h-1zM519 216h2v1h-2zM513 217h1v1h-1zM520 217h1v1h-1zM512 218h1v5h-1zM521 218h1v5h-1zM513 223h1v1h-1zM520 223h1v1h-1zM514 224h6v1h-6zM496 215h4v1h-4zM494 216h2v1h-2zM500 216h1v1h-1zM493 217h1v6h-1zM501 217h1v1h-1zM502 218h1v4h-1zM501 222h1v2h-1zM494 223h1v1h-1zM495 224h6v1h-6zM476 215h5v1h-5zM475 216h1v1h-1zM481 216h1v1h-1zM474 217h1v2h-1zM482 217h1v2h-1zM473 219h1v3h-1zM483 219h1v3h-1zM474 222h1v1h-1zM482 222h1v1h-1zM475 223h1v1h-1zM481 223h1v1h-1zM476 224h2v1h-2zM479 224h2v1h-2zM478 225h1v1h-1zM457 215h4v1h-4zM456 216h1v1h-1zM461 216h2v1h-2zM455 217h1v1h-1zM463 217h1v6h-1zM454 218h1v5h-1zM455 223h1v1h-1zM462 223h1v1h-1zM456 224h6v1h-6zM438 215h4v1h-4zM436 216h2v1h-2zM442 216h1v1h-1zM436 217h1v1h-1zM443 217h1v1h-1zM435 218h1v5h-1zM444 218h1v5h-1zM436 223h1v1h-1zM443 223h1v1h-1zM437 224h6v1h-6zM418 215h5v1h-5zM417 216h1v1h-1zM423 216h1v1h-1zM416 217h1v2h-1zM424 217h1v1h-1zM425 218h1v4h-1zM415 219h1v2h-1zM416 221h1v2h-1zM424 222h1v2h-1zM417 223h1v1h-1zM418 224h6v1h-6zM399 215h4v1h-4zM398 216h1v1h-1zM403 216h2v1h-2zM397 217h1v1h-1zM405 217h1v2h-1zM396 218h1v4h-1zM406 219h1v2h-1zM405 221h1v2h-1zM397 222h1v2h-1zM404 223h1v1h-1zM398 224h6v1h-6zM380 215h4v1h-4zM379 216h1v1h-1zM384 216h1v1h-1zM378 217h1v1h-1zM385 217h1v1h-1zM377 218h1v5h-1zM386 218h1v5h-1zM378 223h1v1h-1zM385 223h1v1h-1zM379 224h6v1h-6zM361 215h4v1h-4zM359 216h2v1h-2zM365 216h1v1h-1zM358 217h1v3h-1zM366 217h1v1h-1zM367 218h1v4h-1zM357 220h1v1h-1zM358 221h1v2h-1zM366 222h1v2h-1zM359 223h1v1h-1zM360 224h6v1h-6zM341 215h5v1h-5zM340 216h1v1h-1zM346 216h1v1h-1zM339 217h1v2h-1zM347 217h1v2h-1zM338 219h1v3h-1zM348 219h1v3h-1zM339 222h1v1h-1zM347 222h1v1h-1zM339 223h2v1h-2zM346 223h1v1h-1zM341 224h2v1h-2zM344 224h2v1h-2zM343 225h1v1h-1zM322 215h4v1h-4zM321 216h1v1h-1zM326 216h2v1h-2zM320 217h1v1h-1zM328 217h1v6h-1zM319 218h1v5h-1zM320 223h1v1h-1zM327 223h1v1h-1zM321 224h6v1h-6zM303 215h4v1h-4zM301 216h2v1h-2zM307 216h1v1h-1zM301 217h1v1h-1zM308 217h1v1h-1zM300 218h1v5h-1zM309 218h1v5h-1zM301 223h1v1h-1zM308 223h1v1h-1zM302 224h6v1h-6zM283 215h5v1h-5zM282 216h1v1h-1zM288 216h1v1h-1zM281 217h1v2h-1zM289 217h1v1h-1zM290 218h1v4h-1zM280 219h1v2h-1zM281 221h1v2h-1zM289 222h1v2h-1zM282 223h1v1h-1zM283 224h2v1h-2zM286 224h3v1h-3zM285 225h1v1h-1zM264 215h4v1h-4zM263 216h1v1h-1zM268 216h2v1h-2zM262 217h1v1h-1zM270 217h1v3h-1zM261 218h1v4h-1zM271 220h1v1h-1zM270 221h1v2h-1zM262 222h1v2h-1zM269 223h1v1h-1zM263 224h6v1h-6zM245 215h4v1h-4zM244 216h1v1h-1zM249 216h1v1h-1zM243 217h1v1h-1zM250 217h1v1h-1zM242 218h1v5h-1zM251 218h1v5h-1zM243 223h1v1h-1zM250 223h1v1h-1zM244 224h6v1h-6zM226 215h4v1h-4zM224 216h2v1h-2zM230 216h1v1h-1zM231 217h1v1h-1zM232 218h1v4h-1zM231 222h1v2h-1zM225 224h6v1h-6zM766 244h4v1h-4zM764 245h2v1h-2zM770 245h1v1h-1zM763 246h1v6h-1zM771 246h1v1h-1zM772 247h1v4h-1zM771 251h1v2h-1zM764 252h1v1h-1zM765 253h6v1h-6zM746 244h5v1h-5zM745 245h1v1h-1zM751 245h1v1h-1zM744 246h1v2h-1zM752 246h1v2h-1zM743 248h1v3h-1zM753 248h1v3h-1zM744 251h1v1h-1zM752 251h1v1h-1zM745 252h1v1h-1zM751 252h1v1h-1zM746 253h5v1h-5zM727 244h4v1h-4zM726 245h1v1h-1zM731 245h2v1h-2zM725 246h1v1h-1zM733 246h1v6h-1zM724 247h1v4h-1zM725 251h1v2h-1zM732 252h1v1h-1zM726 253h6v1h-6zM708 244h4v1h-4zM706 245h2v1h-2zM712 245h1v1h-1zM705 246h1v6h-1zM713 246h1v1h-1zM714 247h1v5h-1zM706 252h1v1h-1zM713 252h1v1h-1zM707 253h6v1h-6zM688 244h5v1h-5zM687 245h1v1h-1zM693 245h1v1h-1zM686 246h1v2h-1zM694 246h1v1h-1zM695 247h1v4h-1zM685 248h1v2h-1zM686 250h1v2h-1zM694 251h1v1h-1zM687 252h1v1h-1zM693 252h2v1h-2zM688 253h5v1h-5zM669 244h5v1h-5zM668 245h1v1h-1zM674 245h1v1h-1zM667 246h1v1h-1zM675 246h1v2h-1zM666 247h1v4h-1zM676 248h1v2h-1zM675 250h1v2h-1zM667 251h1v1h-1zM667 252h2v1h-2zM674 252h1v1h-1zM669 253h5v1h-5zM650 244h4v1h-4zM649 245h1v1h-1zM654 245h2v1h-2zM648 246h1v1h-1zM655 246h1v1h-1zM647 247h1v5h-1zM656 247h1v5h-1zM648 252h1v1h-1zM655 252h1v1h-1zM649 253h6v1h-6zM630 244h5v1h-5zM629 245h1v1h-1zM635 245h1v1h-1zM628 246h1v6h-1zM636 246h1v1h-1zM637 247h1v4h-1zM636 251h1v2h-1zM629 252h1v1h-1zM630 253h6v1h-6zM611 244h5v1h-5zM610 245h1v1h-1zM616 245h1v1h-1zM609 246h1v2h-1zM617 246h1v2h-1zM608 248h1v3h-1zM618 248h1v3h-1zM609 251h1v1h-1zM617 251h1v1h-1zM610 252h1v1h-1zM616 252h1v1h-1zM611 253h5v1h-5zM592 244h4v1h-4zM591 245h1v1h-1zM596 245h2v1h-2zM590 246h1v1h-1zM598 246h1v6h-1zM589 247h1v4h-1zM590 251h1v2h-1zM597 252h1v1h-1zM591 253h6v1h-6zM573 244h4v1h-4zM571 245h2v1h-2zM577 245h1v1h-1zM570 246h1v6h-1zM578 246h1v1h-1zM579 247h1v5h-1zM571 252h1v1h-1zM578 252h1v1h-1zM572 253h6v1h-6zM553 244h5v1h-5zM552 245h1v1h-1zM558 245h1v1h-1zM551 246h1v2h-1zM559 246h1v1h-1zM560 247h1v4h-1zM550 248h1v2h-1zM551 250h1v2h-1zM559 251h1v1h-1zM552 252h1v1h-1zM558 252h2v1h-2zM553 253h5v1h-5zM534 244h5v1h-5zM533 245h1v1h-1zM539 245h1v1h-1zM532 246h1v1h-1zM540 246h1v2h-1zM531 247h1v4h-1zM541 248h1v2h-1zM540 250h1v2h-1zM532 251h1v1h-1zM532 252h2v1h-2zM539 252h1v1h-1zM534 253h5v1h-5zM515 244h4v1h-4zM514 245h1v1h-1zM519 245h2v1h-2zM513 246h1v1h-1zM520 246h1v1h-1zM512 247h1v5h-1zM521 247h1v5h-1zM513 252h1v1h-1zM520 252h1v1h-1zM514 253h6v1h-6zM495 244h5v1h-5zM494 245h1v1h-1zM500 245h1v1h-1zM493 246h1v6h-1zM501 246h1v1h-1zM502 247h1v4h-1zM501 251h1v2h-1zM494 252h1v1h-1zM495 253h6v1h-6zM476 244h5v1h-5zM475 245h1v1h-1zM481 245h1v1h-1zM474 246h1v2h-1zM482 246h1v2h-1zM473 248h1v3h-1zM483 248h1v3h-1zM474 251h1v1h-1zM482 251h1v1h-1zM475 252h1v1h-1zM481 252h1v1h-1zM476 253h5v1h-5zM457 244h4v1h-4zM456 245h1v1h-1zM461 245h2v1h-2zM455 246h1v1h-1zM463 246h1v6h-1zM454 247h1v4h-1zM455 251h1v2h-1zM462 252h1v1h-1zM456 253h6v1h-6zM438 244h4v1h-4zM436 245h2v1h-2zM442 245h1v1h-1zM435 246h1v6h-1zM443 246h1v1h-1zM444 247h1v5h-1zM436 252h1v1h-1zM443 252h1v1h-1zM437 253h6v1h-6zM418 244h5v1h-5zM417 245h1v1h-1zM423 245h1v1h-1zM416 246h1v2h-1zM424 246h1v1h-1zM425 247h1v4h-1zM415 248h1v2h-1zM416 250h1v2h-1zM424 251h1v1h-1zM417 252h1v1h-1zM423 252h1v1h-1zM418 253h5v1h-5zM399 244h5v1h-5zM398 245h1v1h-1zM404 245h1v1h-1zM397 246h1v1h-1zM405 246h1v2h-1zM396 247h1v4h-1zM406 248h1v2h-1zM405 250h1v2h-1zM397 251h1v1h-1zM397 252h2v1h-2zM404 252h1v1h-1zM399 253h5v1h-5zM380 244h4v1h-4zM378 245h2v1h-2zM384 245h2v1h-2zM378 246h1v1h-1zM385 246h1v1h-1zM377 247h1v5h-1zM386 247h1v5h-1zM378 252h1v1h-1zM385 252h1v1h-1zM379 253h6v1h-6zM360 244h5v1h-5zM359 245h1v1h-1zM365 245h1v1h-1zM358 246h1v6h-1zM366 246h1v1h-1zM367 247h1v4h-1zM366 251h1v2h-1zM359 252h1v1h-1zM360 253h6v1h-6zM341 244h5v1h-5zM340 245h1v1h-1zM346 245h1v1h-1zM339 246h1v2h-1zM347 246h1v2h-1zM338 248h1v3h-1zM348 248h1v3h-1zM339 251h1v1h-1zM347 251h1v1h-1zM340 252h1v1h-1zM346 252h1v1h-1zM341 253h5v1h-5zM322 244h4v1h-4zM321 245h1v1h-1zM326 245h2v1h-2zM320 246h1v1h-1zM328 246h1v6h-1zM319 247h1v4h-1zM320 251h1v2h-1zM327 252h1v1h-1zM321 253h6v1h-6zM303 244h4v1h-4zM301 245h2v1h-2zM307 245h1v1h-1zM300 246h1v6h-1zM308 246h1v1h-1zM309 247h1v5h-1zM301 252h1v1h-1zM308 252h1v1h-1zM302 253h6v1h-6zM283 244h5v1h-5zM282 245h1v1h-1zM288 245h1v1h-1zM281 246h1v2h-1zM289 246h1v1h-1zM290 247h1v4h-1zM280 248h1v2h-1zM281 250h1v2h-1zM289 251h1v1h-1zM282 252h1v1h-1zM288 252h1v1h-1zM283 253h5v1h-5zM264 244h5v1h-5zM263 245h1v1h-1zM269 245h1v1h-1zM262 246h1v1h-1zM270 246h1v2h-1zM261 247h1v4h-1zM271 248h1v2h-1zM270 250h1v2h-1zM262 251h1v2h-1zM269 252h1v1h-1zM263 253h6v1h-6zM245 244h4v1h-4zM243 245h2v1h-2zM249 245h2v1h-2zM243 246h1v1h-1zM250 246h1v1h-1zM242 247h1v5h-1zM251 247h1v5h-1zM243 252h1v1h-1zM250 252h1v1h-1zM244 253h6v1h-6zM225 244h5v1h-5zM230 245h1v1h-1zM231 246h1v1h-1zM232 247h1v4h-1zM231 251h1v2h-1zM225 253h6v1h-6zM765 273h5v1h-5zM764 274h1v1h-1zM770 274h1v1h-1zM763 275h1v6h-1zM771 275h1v1h-1zM772 276h1v4h-1zM771 280h1v1h-1zM764 281h1v1h-1zM770 281h2v1h-2zM765 282h5v1h-5zM746 273h5v1h-5zM745 274h1v1h-1zM751 274h1v1h-1zM744 275h1v2h-1zM752 275h1v2h-1zM743 277h1v3h-1zM753 277h1v3h-1zM744 280h1v1h-1zM752 280h1v1h-1zM745 281h1v1h-1zM751 281h1v1h-1zM746 282h5v1h-5zM727 273h5v1h-5zM726 274h1v1h-1zM732 274h1v1h-1zM725 275h1v1h-1zM733 275h1v6h-1zM724 276h1v4h-1zM725 280h1v1h-1zM725 281h2v1h-2zM732 281h1v1h-1zM727 282h5v1h-5zM708 273h4v1h-4zM706 274h2v1h-2zM712 274h2v1h-2zM705 275h1v6h-1zM713 275h1v1h-1zM714 276h1v5h-1zM706 281h1v1h-1zM713 281h1v1h-1zM707 282h6v1h-6zM688 273h5v1h-5zM687 274h1v1h-1zM693 274h1v1h-1zM686 275h1v2h-1zM694 275h1v1h-1zM695 276h1v4h-1zM685 277h1v2h-1zM686 279h1v2h-1zM694 280h1v1h-1zM687 281h1v1h-1zM693 281h1v1h-1zM688 282h5v1h-5zM669 273h5v1h-5zM668 274h1v1h-1zM674 274h1v1h-1zM667 275h1v1h-1zM675 275h1v2h-1zM666 276h1v4h-1zM676 277h1v2h-1zM675 279h1v2h-1zM667 280h1v1h-1zM668 281h1v1h-1zM674 281h1v1h-1zM669 282h5v1h-5zM650 273h4v1h-4zM648 274h2v1h-2zM654 274h2v1h-2zM648 275h1v1h-1zM656 275h1v6h-1zM647 276h1v5h-1zM648 281h1v1h-1zM655 281h1v1h-1zM649 282h6v1h-6zM630 273h5v1h-5zM629 274h1v1h-1zM635 274h1v1h-1zM628 275h1v6h-1zM636 275h1v1h-1zM637 276h1v4h-1zM636 280h1v1h-1zM629 281h1v1h-1zM635 281h2v1h-2zM630 282h5v1h-5zM611 273h5v1h-5zM610 274h1v1h-1zM616 274h1v1h-1zM609 275h1v2h-1zM617 275h1v2h-1zM608 277h1v3h-1zM618 277h1v3h-1zM609 280h1v1h-1zM617 280h1v1h-1zM610 281h1v1h-1zM616 281h1v1h-1zM611 282h5v1h-5zM592 273h5v1h-5zM591 274h1v1h-1zM597 274h1v1h-1zM590 275h1v1h-1zM598 275h1v6h-1zM589 276h1v4h-1zM590 280h1v1h-1zM590 281h2v1h-2zM597 281h1v1h-1zM592 282h5v1h-5zM572 273h5v1h-5zM571 274h1v1h-1zM577 274h2v1h-2zM570 275h1v6h-1zM578 275h1v1h-1zM579 276h1v5h-1zM571 281h1v1h-1zM578 281h1v1h-1zM572 282h6v1h-6zM553 273h5v1h-5zM552 274h1v1h-1zM558 274h1v1h-1zM551 275h1v2h-1zM559 275h1v1h-1zM560 276h1v4h-1zM550 277h1v2h-1zM551 279h1v2h-1zM559 280h1v1h-1zM552 281h1v1h-1zM558 281h1v1h-1zM553 282h5v1h-5zM534 273h5v1h-5zM533 274h1v1h-1zM539 274h1v1h-1zM532 275h1v1h-1zM540 275h1v2h-1zM531 276h1v4h-1zM541 277h1v2h-1zM540 279h1v2h-1zM532 280h1v1h-1zM533 281h1v1h-1zM539 281h1v1h-1zM534 282h5v1h-5zM515 273h4v1h-4zM513 274h2v1h-2zM519 274h2v1h-2zM513 275h1v1h-1zM521 275h1v6h-1zM512 276h1v5h-1zM513 281h1v1h-1zM520 281h1v1h-1zM514 282h6v1h-6zM495 273h5v1h-5zM494 274h1v1h-1zM500 274h1v1h-1zM493 275h1v6h-1zM501 275h1v1h-1zM502 276h1v4h-1zM501 280h1v1h-1zM494 281h1v1h-1zM500 281h2v1h-2zM495 282h5v1h-5zM476 273h5v1h-5zM475 274h1v1h-1zM481 274h1v1h-1zM474 275h1v1h-1zM482 275h1v2h-1zM473 276h1v4h-1zM483 277h1v3h-1zM474 280h1v1h-1zM482 280h1v1h-1zM475 281h1v1h-1zM481 281h1v1h-1zM476 282h5v1h-5zM457 273h5v1h-5zM456 274h1v1h-1zM462 274h1v1h-1zM455 275h1v1h-1zM463 275h1v6h-1zM454 276h1v4h-1zM455 280h1v2h-1zM462 281h1v1h-1zM456 282h6v1h-6zM437 273h5v1h-5zM436 274h1v1h-1zM442 274h2v1h-2zM435 275h1v6h-1zM443 275h1v1h-1zM444 276h1v4h-1zM443 280h1v2h-1zM436 281h1v1h-1zM437 282h6v1h-6zM418 273h5v1h-5zM417 274h1v1h-1zM423 274h1v1h-1zM416 275h1v2h-1zM424 275h1v1h-1zM425 276h1v4h-1zM415 277h1v2h-1zM416 279h1v2h-1zM424 280h1v1h-1zM417 281h1v1h-1zM423 281h1v1h-1zM418 282h5v1h-5zM399 273h5v1h-5zM398 274h1v1h-1zM404 274h1v1h-1zM397 275h1v1h-1zM405 275h1v2h-1zM396 276h1v4h-1zM406 277h1v2h-1zM405 279h1v2h-1zM397 280h1v1h-1zM398 281h1v1h-1zM404 281h1v1h-1zM399 282h5v1h-5zM380 273h4v1h-4zM378 274h2v1h-2zM384 274h2v1h-2zM378 275h1v1h-1zM386 275h1v6h-1zM377 276h1v5h-1zM378 281h1v1h-1zM385 281h1v1h-1zM379 282h6v1h-6zM360 273h5v1h-5zM359 274h1v1h-1zM365 274h1v1h-1zM358 275h1v6h-1zM366 275h1v1h-1zM367 276h1v4h-1zM366 280h1v1h-1zM359 281h1v1h-1zM365 281h2v1h-2zM360 282h5v1h-5zM341 273h5v1h-5zM340 274h1v1h-1zM346 274h1v1h-1zM339 275h1v1h-1zM347 275h1v2h-1zM338 276h1v4h-1zM348 277h1v2h-1zM347 279h1v2h-1zM339 280h1v1h-1zM340 281h1v1h-1zM346 281h1v1h-1zM341 282h5v1h-5zM322 273h5v1h-5zM321 274h1v1h-1zM327 274h1v1h-1zM320 275h1v1h-1zM328 275h1v6h-1zM319 276h1v4h-1zM320 280h1v2h-1zM327 281h1v1h-1zM321 282h6v1h-6zM302 273h5v1h-5zM301 274h1v1h-1zM307 274h1v1h-1zM300 275h1v6h-1zM308 275h1v1h-1zM309 276h1v4h-1zM308 280h1v2h-1zM301 281h1v1h-1zM302 282h6v1h-6zM283 273h5v1h-5zM282 274h1v1h-1zM288 274h1v1h-1zM281 275h1v2h-1zM289 275h1v1h-1zM290 276h1v4h-1zM280 277h1v2h-1zM281 279h1v2h-1zM289 280h1v1h-1zM282 281h1v1h-1zM288 281h1v1h-1zM283 282h5v1h-5zM264 273h5v1h-5zM263 274h1v1h-1zM269 274h1v1h-1zM262 275h1v1h-1zM270 275h1v2h-1zM261 276h1v4h-1zM271 277h1v2h-1zM270 279h1v2h-1zM262 280h1v1h-1zM263 281h1v1h-1zM269 281h1v1h-1zM264 282h5v1h-5zM245 273h4v1h-4zM243 274h2v1h-2zM249 274h2v1h-2zM243 275h1v1h-1zM250 275h1v1h-1zM242 276h1v5h-1zM251 276h1v5h-1zM243 281h1v1h-1zM250 281h1v1h-1zM244 282h6v1h-6zM225 273h5v1h-5zM230 274h1v1h-1zM231 275h1v1h-1zM232 276h1v4h-1zM231 280h1v1h-1zM230 281h2v1h-2zM225 282h5v1h-5zM765 302h5v1h-5zM764 303h1v1h-1zM770 303h1v1h-1zM763 304h1v6h-1zM771 304h1v1h-1zM772 305h1v4h-1zM771 309h1v1h-1zM764 310h1v1h-1zM770 310h2v1h-2zM765 311h5v1h-5zM746 302h5v1h-5zM745 303h1v1h-1zM751 303h1v1h-1zM744 304h1v1h-1zM752 304h1v1h-1zM743 305h1v4h-1zM753 305h1v4h-1zM744 309h1v1h-1zM752 309h1v1h-1zM745 310h1v1h-1zM751 310h1v1h-1zM746 311h5v1h-5zM727 302h5v1h-5zM726 303h1v1h-1zM732 303h1v1h-1zM725 304h1v1h-1zM733 304h1v6h-1zM724 305h1v4h-1zM725 309h1v1h-1zM726 310h1v1h-1zM732 310h1v1h-1zM727 311h5v1h-5zM707 302h5v1h-5zM706 303h1v1h-1zM712 303h2v1h-2zM705 304h1v6h-1zM713 304h1v1h-1zM714 305h1v4h-1zM713 309h1v1h-1zM706 310h1v1h-1zM712 310h2v1h-2zM707 311h5v1h-5zM688 302h5v1h-5zM687 303h1v1h-1zM693 303h1v1h-1zM686 304h1v2h-1zM694 304h1v1h-1zM695 305h1v4h-1zM685 306h1v2h-1zM686 308h1v2h-1zM694 309h1v1h-1zM687 310h1v1h-1zM693 310h1v1h-1zM688 311h5v1h-5zM669 302h5v1h-5zM668 303h1v1h-1zM674 303h1v1h-1zM667 304h1v1h-1zM675 304h1v2h-1zM666 305h1v4h-1zM676 306h1v2h-1zM675 308h1v2h-1zM667 309h1v1h-1zM668 310h1v1h-1zM674 310h1v1h-1zM669 311h5v1h-5zM650 302h5v1h-5zM648 303h2v1h-2zM655 303h1v1h-1zM648 304h1v1h-1zM656 304h1v6h-1zM647 305h1v4h-1zM648 309h1v2h-1zM655 310h1v1h-1zM649 311h6v1h-6zM630 302h5v1h-5zM629 303h1v1h-1zM635 303h1v1h-1zM628 304h1v6h-1zM636 304h1v1h-1zM637 305h1v4h-1zM636 309h1v1h-1zM629 310h1v1h-1zM635 310h1v1h-1zM630 311h5v1h-5zM611 302h5v1h-5zM610 303h1v1h-1zM616 303h1v1h-1zM609 304h1v1h-1zM617 304h1v2h-1zM608 305h1v4h-1zM618 306h1v2h-1zM617 308h1v2h-1zM609 309h1v1h-1zM610 310h1v1h-1zM616 310h1v1h-1zM611 311h5v1h-5zM592 302h5v1h-5zM590 303h2v1h-2zM597 303h1v1h-1zM590 304h1v1h-1zM598 304h1v6h-1zM589 305h1v4h-1zM590 309h1v1h-1zM590 310h2v1h-2zM597 310h1v1h-1zM592 311h5v1h-5zM572 302h5v1h-5zM571 303h1v1h-1zM577 303h2v1h-2zM570 304h1v6h-1zM578 304h1v1h-1zM579 305h1v4h-1zM578 309h1v1h-1zM571 310h1v1h-1zM577 310h2v1h-2zM572 311h5v1h-5zM553 302h5v1h-5zM552 303h1v1h-1zM558 303h1v1h-1zM551 304h1v2h-1zM559 304h1v1h-1zM560 305h1v4h-1zM550 306h1v2h-1zM551 308h1v2h-1zM559 309h1v1h-1zM552 310h1v1h-1zM558 310h1v1h-1zM553 311h5v1h-5zM534 302h5v1h-5zM533 303h1v1h-1zM539 303h1v1h-1zM532 304h1v1h-1zM540 304h1v2h-1zM531 305h1v4h-1zM541 306h1v2h-1zM540 308h1v2h-1zM532 309h1v1h-1zM533 310h1v1h-1zM539 310h1v1h-1zM534 311h5v1h-5zM514 302h6v1h-6zM513 303h1v2h-1zM520 303h1v1h-1zM521 304h1v6h-1zM512 305h1v4h-1zM513 309h1v2h-1zM520 310h1v1h-1zM514 311h6v1h-6zM495 302h5v1h-5zM494 303h1v1h-1zM500 303h1v1h-1zM493 304h1v6h-1zM501 304h1v1h-1zM502 305h1v4h-1zM501 309h1v1h-1zM494 310h1v1h-1zM500 310h1v1h-1zM495 311h5v1h-5zM476 302h5v1h-5zM475 303h1v1h-1zM481 303h1v1h-1zM474 304h1v1h-1zM482 304h1v2h-1zM473 305h1v4h-1zM483 306h1v2h-1zM482 308h1v2h-1zM474 309h1v1h-1zM475 310h1v1h-1zM481 310h1v1h-1zM476 311h5v1h-5zM457 302h5v1h-5zM455 303h2v1h-2zM462 303h1v1h-1zM455 304h1v1h-1zM463 304h1v6h-1zM454 305h1v4h-1zM455 309h1v1h-1zM455 310h2v1h-2zM462 310h1v1h-1zM457 311h5v1h-5zM437 302h5v1h-5zM436 303h1v1h-1zM442 303h2v1h-2zM435 304h1v6h-1zM443 304h1v1h-1zM444 305h1v4h-1zM443 309h1v1h-1zM436 310h1v1h-1zM442 310h2v1h-2zM437 311h5v1h-5zM418 302h5v1h-5zM417 303h1v1h-1zM423 303h1v1h-1zM416 304h1v2h-1zM424 304h1v1h-1zM425 305h1v4h-1zM415 306h1v2h-1zM416 308h1v2h-1zM424 309h1v1h-1zM417 310h1v1h-1zM423 310h1v1h-1zM418 311h5v1h-5zM399 302h5v1h-5zM398 303h1v1h-1zM404 303h1v1h-1zM397 304h1v1h-1zM405 304h1v2h-1zM396 305h1v4h-1zM406 306h1v2h-1zM405 308h1v2h-1zM397 309h1v1h-1zM398 310h1v1h-1zM404 310h1v1h-1zM399 311h5v1h-5zM379 302h6v1h-6zM378 303h1v1h-1zM385 303h1v1h-1zM377 304h1v6h-1zM386 304h1v6h-1zM378 310h1v1h-1zM385 310h1v1h-1zM379 311h6v1h-6zM360 302h5v1h-5zM359 303h1v1h-1zM365 303h1v1h-1zM358 304h1v6h-1zM366 304h1v1h-1zM367 305h1v4h-1zM366 309h1v1h-1zM359 310h1v1h-1zM365 310h1v1h-1zM360 311h5v1h-5zM341 302h5v1h-5zM340 303h1v1h-1zM346 303h1v1h-1zM339 304h1v1h-1zM347 304h1v2h-1zM338 305h1v4h-1zM348 306h1v2h-1zM347 308h1v2h-1zM339 309h1v1h-1zM340 310h1v1h-1zM346 310h1v1h-1zM341 311h5v1h-5zM322 302h5v1h-5zM320 303h2v1h-2zM327 303h1v1h-1zM320 304h1v1h-1zM328 304h1v6h-1zM319 305h1v4h-1zM320 309h1v1h-1zM320 310h2v1h-2zM327 310h1v1h-1zM322 311h5v1h-5zM302 302h5v1h-5zM301 303h1v1h-1zM307 303h2v1h-2zM300 304h1v6h-1zM308 304h1v1h-1zM309 305h1v4h-1zM308 309h1v1h-1zM301 310h1v1h-1zM307 310h2v1h-2zM302 311h5v1h-5zM283 302h5v1h-5zM282 303h1v1h-1zM288 303h1v1h-1zM281 304h1v2h-1zM289 304h1v1h-1zM290 305h1v4h-1zM280 306h1v2h-1zM281 308h1v2h-1zM289 309h1v1h-1zM282 310h1v1h-1zM288 310h1v1h-1zM283 311h5v1h-5zM264 302h5v1h-5zM263 303h1v1h-1zM269 303h1v1h-1zM262 304h1v1h-1zM270 304h1v2h-1zM261 305h1v4h-1zM271 306h1v2h-1zM270 308h1v2h-1zM262 309h1v1h-1zM263 310h1v1h-1zM269 310h1v1h-1zM264 311h5v1h-5zM244 302h6v1h-6zM243 303h1v1h-1zM250 303h1v1h-1zM242 304h1v6h-1zM251 304h1v6h-1zM243 310h1v1h-1zM250 310h1v1h-1zM244 311h6v1h-6zM225 302h5v1h-5zM230 303h1v1h-1zM231 304h1v1h-1zM232 305h1v4h-1zM231 309h1v1h-1zM230 310h1v1h-1zM225 311h5v1h-5zM765 331h5v1h-5zM764 332h1v1h-1zM770 332h2v1h-2zM763 333h1v6h-1zM771 333h1v1h-1zM772 334h1v4h-1zM771 338h1v1h-1zM764 339h1v1h-1zM770 339h1v1h-1zM765 340h5v1h-5zM746 331h5v1h-5zM745 332h1v1h-1zM751 332h1v1h-1zM744 333h1v1h-1zM752 333h1v1h-1zM743 334h1v3h-1zM753 334h1v3h-1zM744 337h1v2h-1zM752 337h1v2h-1zM745 339h1v1h-1zM751 339h1v1h-1zM746 340h5v1h-5zM727 331h5v1h-5zM725 332h2v1h-2zM732 332h1v1h-1zM725 333h1v1h-1zM733 333h1v6h-1zM724 334h1v4h-1zM725 338h1v1h-1zM726 339h1v1h-1zM732 339h1v1h-1zM727 340h5v1h-5zM707 331h6v1h-6zM706 332h1v1h-1zM713 332h1v1h-1zM705 333h1v6h-1zM714 333h1v5h-1zM713 338h1v1h-1zM706 339h1v1h-1zM712 339h2v1h-2zM707 340h5v1h-5zM688 331h5v1h-5zM687 332h1v1h-1zM693 332h1v1h-1zM686 333h1v2h-1zM694 333h1v1h-1zM695 334h1v4h-1zM685 335h1v2h-1zM686 337h1v2h-1zM694 338h1v1h-1zM687 339h1v1h-1zM693 339h1v1h-1zM688 340h5v1h-5zM669 331h5v1h-5zM668 332h1v1h-1zM674 332h1v1h-1zM667 333h1v1h-1zM675 333h1v2h-1zM666 334h1v4h-1zM676 335h1v2h-1zM675 337h1v2h-1zM667 338h1v1h-1zM668 339h1v1h-1zM674 339h1v1h-1zM669 340h5v1h-5zM649 331h6v1h-6zM648 332h1v1h-1zM655 332h1v1h-1zM647 333h1v5h-1zM656 333h1v6h-1zM648 338h1v1h-1zM648 339h2v1h-2zM654 339h2v1h-2zM650 340h4v1h-4zM630 331h5v1h-5zM629 332h1v1h-1zM635 332h2v1h-2zM628 333h1v6h-1zM636 333h1v1h-1zM637 334h1v4h-1zM636 338h1v1h-1zM629 339h1v1h-1zM635 339h1v1h-1zM630 340h5v1h-5zM611 331h5v1h-5zM610 332h1v1h-1zM616 332h1v1h-1zM609 333h1v1h-1zM617 333h1v1h-1zM608 334h1v3h-1zM618 334h1v3h-1zM609 337h1v2h-1zM617 337h1v2h-1zM610 339h1v1h-1zM616 339h1v1h-1zM611 340h5v1h-5zM592 331h5v1h-5zM590 332h2v1h-2zM597 332h1v1h-1zM590 333h1v1h-1zM598 333h1v6h-1zM589 334h1v4h-1zM590 338h1v1h-1zM591 339h1v1h-1zM597 339h1v1h-1zM592 340h5v1h-5zM572 331h6v1h-6zM571 332h1v1h-1zM578 332h1v2h-1zM570 333h1v6h-1zM579 334h1v4h-1zM578 338h1v1h-1zM571 339h1v1h-1zM577 339h2v1h-2zM572 340h5v1h-5zM553 331h5v1h-5zM552 332h1v1h-1zM558 332h1v1h-1zM551 333h1v2h-1zM559 333h1v1h-1zM560 334h1v4h-1zM550 335h1v2h-1zM551 337h1v2h-1zM559 338h1v1h-1zM552 339h1v1h-1zM558 339h1v1h-1zM553 340h5v1h-5zM534 331h5v1h-5zM533 332h1v1h-1zM539 332h1v1h-1zM532 333h1v1h-1zM540 333h1v2h-1zM531 334h1v4h-1zM541 335h1v2h-1zM540 337h1v2h-1zM532 338h1v1h-1zM533 339h1v1h-1zM539 339h1v1h-1zM534 340h5v1h-5zM514 331h6v1h-6zM513 332h1v1h-1zM520 332h1v1h-1zM512 333h1v5h-1zM521 333h1v6h-1zM513 338h1v1h-1zM513 339h2v1h-2zM519 339h2v1h-2zM515 340h4v1h-4zM495 331h5v1h-5zM494 332h1v1h-1zM500 332h2v1h-2zM493 333h1v6h-1zM501 333h1v1h-1zM502 334h1v4h-1zM501 338h1v1h-1zM494 339h1v1h-1zM500 339h1v1h-1zM495 340h5v1h-5zM476 331h5v1h-5zM475 332h1v1h-1zM481 332h1v1h-1zM474 333h1v1h-1zM482 333h1v1h-1zM473 334h1v4h-1zM483 334h1v3h-1zM482 337h1v2h-1zM474 338h1v1h-1zM475 339h1v1h-1zM481 339h1v1h-1zM476 340h5v1h-5zM456 331h6v1h-6zM455 332h1v2h-1zM462 332h1v1h-1zM463 333h1v6h-1zM454 334h1v4h-1zM455 338h1v1h-1zM456 339h1v1h-1zM462 339h1v1h-1zM457 340h5v1h-5zM437 331h6v1h-6zM436 332h1v1h-1zM443 332h1v2h-1zM435 333h1v6h-1zM444 334h1v4h-1zM443 338h1v1h-1zM436 339h1v1h-1zM442 339h2v1h-2zM437 340h5v1h-5zM418 331h5v1h-5zM417 332h1v1h-1zM423 332h1v1h-1zM416 333h1v2h-1zM424 333h1v1h-1zM425 334h1v4h-1zM415 335h1v2h-1zM416 337h1v2h-1zM424 338h1v1h-1zM417 339h1v1h-1zM423 339h1v1h-1zM418 340h5v1h-5zM399 331h5v1h-5zM398 332h1v1h-1zM404 332h1v1h-1zM397 333h1v1h-1zM405 333h1v2h-1zM396 334h1v4h-1zM406 335h1v2h-1zM405 337h1v2h-1zM397 338h1v1h-1zM398 339h1v1h-1zM404 339h1v1h-1zM399 340h5v1h-5zM379 331h6v1h-6zM378 332h1v1h-1zM385 332h1v1h-1zM377 333h1v5h-1zM386 333h1v6h-1zM378 338h1v1h-1zM378 339h2v1h-2zM384 339h2v1h-2zM380 340h4v1h-4zM360 331h5v1h-5zM359 332h1v1h-1zM365 332h2v1h-2zM358 333h1v6h-1zM366 333h1v1h-1zM367 334h1v4h-1zM366 338h1v1h-1zM359 339h1v1h-1zM365 339h1v1h-1zM360 340h5v1h-5zM341 331h5v1h-5zM340 332h1v1h-1zM346 332h1v1h-1zM339 333h1v1h-1zM347 333h1v2h-1zM338 334h1v4h-1zM348 335h1v2h-1zM347 337h1v2h-1zM339 338h1v1h-1zM340 339h1v1h-1zM346 339h1v1h-1zM341 340h5v1h-5zM321 331h6v1h-6zM320 332h1v2h-1zM327 332h1v1h-1zM328 333h1v6h-1zM319 334h1v4h-1zM320 338h1v1h-1zM321 339h1v1h-1zM327 339h1v1h-1zM322 340h5v1h-5zM302 331h6v1h-6zM301 332h1v1h-1zM308 332h1v2h-1zM300 333h1v6h-1zM309 334h1v4h-1zM308 338h1v1h-1zM301 339h1v1h-1zM307 339h1v1h-1zM302 340h5v1h-5zM283 331h5v1h-5zM282 332h1v1h-1zM288 332h1v1h-1zM281 333h1v2h-1zM289 333h1v1h-1zM290 334h1v4h-1zM280 335h1v2h-1zM281 337h1v2h-1zM289 338h1v1h-1zM282 339h1v1h-1zM288 339h1v1h-1zM283 340h5v1h-5zM264 331h5v1h-5zM263 332h1v1h-1zM269 332h1v1h-1zM262 333h1v1h-1zM270 333h1v2h-1zM261 334h1v4h-1zM271 335h1v2h-1zM270 337h1v2h-1zM262 338h1v1h-1zM263 339h1v1h-1zM269 339h1v1h-1zM264 340h5v1h-5zM244 331h6v1h-6zM243 332h1v1h-1zM250 332h1v1h-1zM242 333h1v5h-1zM251 333h1v6h-1zM243 338h1v1h-1zM243 339h2v1h-2zM249 339h2v1h-2zM245 340h4v1h-4zM225 331h5v1h-5zM230 332h2v1h-2zM231 333h1v1h-1zM232 334h1v4h-1zM231 338h1v1h-1zM230 339h1v1h-1zM225 340h5v1h-5zM765 360h6v1h-6zM764 361h1v1h-1zM771 361h1v2h-1zM763 362h1v6h-1zM772 363h1v4h-1zM771 367h1v1h-1zM764 368h2v1h-2zM770 368h1v1h-1zM766 369h4v1h-4zM746 360h5v1h-5zM745 361h1v1h-1zM751 361h1v1h-1zM744 362h1v1h-1zM752 362h1v1h-1zM743 363h1v3h-1zM753 363h1v3h-1zM744 366h1v2h-1zM752 366h1v2h-1zM745 368h1v1h-1zM751 368h1v1h-1zM746 369h5v1h-5zM726 360h6v1h-6zM725 361h1v2h-1zM732 361h1v1h-1zM733 362h1v6h-1zM724 363h1v4h-1zM725 367h1v1h-1zM726 368h1v1h-1zM731 368h2v1h-2zM727 369h4v1h-4zM707 360h6v1h-6zM706 361h1v1h-1zM713 361h1v1h-1zM705 362h1v6h-1zM714 362h1v5h-1zM713 367h1v1h-1zM706 368h2v1h-2zM712 368h1v1h-1zM708 369h4v1h-4zM688 360h5v1h-5zM687 361h1v1h-1zM693 361h2v1h-2zM686 362h1v2h-1zM694 362h1v1h-1zM695 363h1v4h-1zM685 364h1v2h-1zM686 366h1v2h-1zM694 367h1v1h-1zM687 368h1v1h-1zM693 368h1v1h-1zM688 369h5v1h-5zM669 360h5v1h-5zM667 361h2v1h-2zM674 361h1v1h-1zM667 362h1v1h-1zM675 362h1v2h-1zM666 363h1v4h-1zM676 364h1v2h-1zM675 366h1v2h-1zM667 367h1v1h-1zM668 368h1v1h-1zM674 368h1v1h-1zM669 369h5v1h-5zM649 360h6v1h-6zM648 361h1v1h-1zM655 361h1v1h-1zM647 362h1v5h-1zM656 362h1v5h-1zM648 367h1v1h-1zM655 367h1v1h-1zM649 368h1v1h-1zM654 368h2v1h-2zM650 369h4v1h-4zM630 360h6v1h-6zM629 361h1v1h-1zM636 361h1v2h-1zM628 362h1v6h-1zM637 363h1v4h-1zM636 367h1v1h-1zM629 368h1v1h-1zM635 368h1v1h-1zM630 369h5v1h-5zM611 360h5v1h-5zM610 361h1v1h-1zM616 361h1v1h-1zM609 362h1v1h-1zM617 362h1v1h-1zM608 363h1v3h-1zM618 363h1v3h-1zM609 366h1v2h-1zM617 366h1v2h-1zM610 368h1v1h-1zM616 368h1v1h-1zM611 369h5v1h-5zM591 360h6v1h-6zM590 361h1v2h-1zM597 361h1v1h-1zM598 362h1v6h-1zM589 363h1v4h-1zM590 367h1v1h-1zM591 368h1v1h-1zM596 368h2v1h-2zM592 369h4v1h-4zM572 360h6v1h-6zM571 361h1v1h-1zM578 361h1v1h-1zM570 362h1v6h-1zM579 362h1v5h-1zM578 367h1v1h-1zM571 368h2v1h-2zM577 368h1v1h-1zM573 369h4v1h-4zM553 360h5v1h-5zM552 361h1v1h-1zM558 361h2v1h-2zM551 362h1v2h-1zM559 362h1v1h-1zM560 363h1v4h-1zM550 364h1v2h-1zM551 366h1v2h-1zM559 367h1v1h-1zM552 368h1v1h-1zM558 368h1v1h-1zM553 369h5v1h-5zM534 360h5v1h-5zM532 361h2v1h-2zM539 361h1v1h-1zM532 362h1v1h-1zM540 362h1v2h-1zM531 363h1v4h-1zM541 364h1v2h-1zM540 366h1v2h-1zM532 367h1v1h-1zM533 368h1v1h-1zM539 368h1v1h-1zM534 369h5v1h-5zM514 360h6v1h-6zM513 361h1v1h-1zM520 361h1v1h-1zM512 362h1v5h-1zM521 362h1v5h-1zM513 367h1v1h-1zM520 367h1v1h-1zM514 368h1v1h-1zM519 368h2v1h-2zM515 369h4v1h-4zM495 360h6v1h-6zM494 361h1v1h-1zM501 361h1v2h-1zM493 362h1v6h-1zM502 363h1v4h-1zM501 367h1v1h-1zM494 368h1v1h-1zM500 368h1v1h-1zM495 369h5v1h-5zM476 360h5v1h-5zM475 361h1v1h-1zM481 361h1v1h-1zM474 362h1v1h-1zM482 362h1v1h-1zM473 363h1v3h-1zM483 363h1v3h-1zM474 366h1v2h-1zM482 366h1v2h-1zM475 368h1v1h-1zM481 368h1v1h-1zM476 369h5v1h-5zM456 360h6v1h-6zM455 361h1v2h-1zM462 361h1v1h-1zM463 362h1v6h-1zM454 363h1v4h-1zM455 367h1v1h-1zM456 368h1v1h-1zM461 368h2v1h-2zM457 369h4v1h-4zM437 360h6v1h-6zM436 361h1v1h-1zM443 361h1v1h-1zM435 362h1v6h-1zM444 362h1v5h-1zM443 367h1v1h-1zM436 368h2v1h-2zM442 368h1v1h-1zM438 369h4v1h-4zM418 360h5v1h-5zM417 361h1v1h-1zM423 361h1v1h-1zM416 362h1v2h-1zM424 362h1v1h-1zM425 363h1v4h-1zM415 364h1v2h-1zM416 366h1v2h-1zM424 367h1v1h-1zM417 368h1v1h-1zM423 368h1v1h-1zM418 369h5v1h-5zM399 360h5v1h-5zM397 361h2v1h-2zM404 361h1v1h-1zM397 362h1v1h-1zM405 362h1v2h-1zM396 363h1v4h-1zM406 364h1v2h-1zM405 366h1v2h-1zM397 367h1v1h-1zM398 368h1v1h-1zM404 368h1v1h-1zM399 369h5v1h-5zM379 360h6v1h-6zM378 361h1v1h-1zM385 361h1v1h-1zM377 362h1v5h-1zM386 362h1v5h-1zM378 367h1v1h-1zM385 367h1v1h-1zM378 368h2v1h-2zM384 368h2v1h-2zM380 369h4v1h-4zM360 360h6v1h-6zM359 361h1v1h-1zM366 361h1v2h-1zM358 362h1v6h-1zM367 363h1v4h-1zM366 367h1v1h-1zM359 368h1v1h-1zM365 368h1v1h-1zM360 369h5v1h-5zM341 360h5v1h-5zM340 361h1v1h-1zM346 361h1v1h-1zM339 362h1v1h-1zM347 362h1v1h-1zM338 363h1v3h-1zM348 363h1v3h-1zM339 366h1v2h-1zM347 366h1v2h-1zM340 368h1v1h-1zM346 368h1v1h-1zM341 369h5v1h-5zM321 360h6v1h-6zM320 361h1v2h-1zM327 361h1v1h-1zM328 362h1v6h-1zM319 363h1v4h-1zM320 367h1v1h-1zM321 368h1v1h-1zM326 368h2v1h-2zM322 369h4v1h-4zM302 360h6v1h-6zM301 361h1v1h-1zM308 361h1v1h-1zM300 362h1v6h-1zM309 362h1v5h-1zM308 367h1v1h-1zM301 368h2v1h-2zM307 368h1v1h-1zM303 369h4v1h-4zM283 360h5v1h-5zM282 361h1v1h-1zM288 361h1v1h-1zM281 362h1v2h-1zM289 362h1v1h-1zM290 363h1v4h-1zM280 364h1v2h-1zM281 366h1v2h-1zM289 367h1v1h-1zM282 368h1v1h-1zM288 368h1v1h-1zM283 369h5v1h-5zM264 360h5v1h-5zM262 361h2v1h-2zM269 361h1v1h-1zM262 362h1v1h-1zM270 362h1v2h-1zM261 363h1v4h-1zM271 364h1v2h-1zM270 366h1v2h-1zM262 367h1v1h-1zM263 368h1v1h-1zM269 368h1v1h-1zM264 369h5v1h-5zM244 360h6v1h-6zM243 361h1v1h-1zM250 361h1v1h-1zM242 362h1v5h-1zM251 362h1v5h-1zM243 367h1v1h-1zM250 367h1v1h-1zM243 368h2v1h-2zM249 368h2v1h-2zM245 369h4v1h-4zM225 360h6v1h-6zM231 361h1v2h-1zM232 363h1v4h-1zM231 367h1v1h-1zM230 368h1v1h-1zM225 369h5v1h-5zM765 389h6v1h-6zM764 390h1v1h-1zM771 390h1v2h-1zM763 391h1v6h-1zM772 392h1v4h-1zM771 396h1v1h-1zM764 397h2v1h-2zM770 397h1v1h-1zM766 398h4v1h-4zM746 389h5v1h-5zM745 390h1v1h-1zM751 390h1v1h-1zM744 391h1v1h-1zM752 391h1v1h-1zM743 392h1v3h-1zM753 392h1v3h-1zM744 395h1v2h-1zM752 395h1v2h-1zM745 397h1v1h-1zM751 397h1v1h-1zM746 398h5v1h-5zM726 389h6v1h-6zM725 390h1v2h-1zM732 390h1v1h-1zM733 391h1v6h-1zM724 392h1v4h-1zM725 396h1v1h-1zM726 397h1v1h-1zM731 397h2v1h-2zM727 398h4v1h-4zM707 389h6v1h-6zM706 390h1v1h-1zM713 390h1v1h-1zM705 391h1v5h-1zM714 391h1v5h-1zM706 396h1v1h-1zM713 396h1v1h-1zM706 397h2v1h-2zM712 397h1v1h-1zM708 398h4v1h-4zM688 389h6v1h-6zM687 390h1v1h-1zM694 390h1v2h-1zM686 391h1v2h-1zM695 392h1v4h-1zM685 393h1v2h-1zM686 395h1v2h-1zM694 396h1v1h-1zM687 397h2v1h-2zM693 397h1v1h-1zM689 398h4v1h-4zM668 389h6v1h-6zM667 390h1v2h-1zM674 390h1v1h-1zM675 391h1v2h-1zM666 392h1v4h-1zM676 393h1v2h-1zM675 395h1v2h-1zM667 396h1v1h-1zM668 397h1v1h-1zM673 397h2v1h-2zM669 398h4v1h-4zM649 389h6v1h-6zM648 390h1v1h-1zM655 390h1v1h-1zM647 391h1v5h-1zM656 391h1v5h-1zM648 396h1v1h-1zM655 396h1v1h-1zM649 397h1v1h-1zM654 397h2v1h-2zM650 398h4v1h-4zM630 389h6v1h-6zM629 390h1v1h-1zM636 390h1v2h-1zM628 391h1v6h-1zM637 392h1v4h-1zM636 396h1v1h-1zM629 397h2v1h-2zM635 397h1v1h-1zM631 398h4v1h-4zM611 389h5v1h-5zM610 390h1v1h-1zM616 390h1v1h-1zM609 391h1v1h-1zM617 391h1v1h-1zM608 392h1v3h-1zM618 392h1v3h-1zM609 395h1v2h-1zM617 395h1v2h-1zM610 397h1v1h-1zM616 397h1v1h-1zM611 398h5v1h-5zM591 389h6v1h-6zM590 390h1v2h-1zM597 390h1v1h-1zM598 391h1v6h-1zM589 392h1v4h-1zM590 396h1v1h-1zM591 397h1v1h-1zM596 397h2v1h-2zM592 398h4v1h-4zM572 389h6v1h-6zM571 390h1v1h-1zM578 390h1v1h-1zM570 391h1v5h-1zM579 391h1v5h-1zM571 396h1v1h-1zM578 396h1v1h-1zM571 397h2v1h-2zM577 397h1v1h-1zM573 398h4v1h-4zM553 389h6v1h-6zM552 390h1v1h-1zM559 390h1v2h-1zM551 391h1v2h-1zM560 392h1v4h-1zM550 393h1v2h-1zM551 395h1v2h-1zM559 396h1v1h-1zM552 397h1v1h-1zM558 397h1v1h-1zM553 398h5v1h-5zM533 389h6v1h-6zM532 390h1v2h-1zM539 390h1v1h-1zM540 391h1v2h-1zM531 392h1v4h-1zM541 393h1v2h-1zM540 395h1v2h-1zM532 396h1v1h-1zM533 397h1v1h-1zM538 397h2v1h-2zM534 398h4v1h-4zM514 389h6v1h-6zM513 390h1v1h-1zM520 390h1v1h-1zM512 391h1v5h-1zM521 391h1v5h-1zM513 396h1v1h-1zM520 396h1v1h-1zM514 397h1v1h-1zM519 397h2v1h-2zM515 398h4v1h-4zM495 389h6v1h-6zM494 390h1v1h-1zM501 390h1v2h-1zM493 391h1v6h-1zM502 392h1v4h-1zM501 396h1v1h-1zM494 397h2v1h-2zM500 397h1v1h-1zM496 398h4v1h-4zM476 389h5v1h-5zM475 390h1v1h-1zM481 390h1v1h-1zM474 391h1v1h-1zM482 391h1v1h-1zM473 392h1v3h-1zM483 392h1v3h-1zM474 395h1v2h-1zM482 395h1v2h-1zM475 397h1v1h-1zM481 397h1v1h-1zM476 398h5v1h-5zM456 389h6v1h-6zM455 390h1v2h-1zM462 390h1v1h-1zM463 391h1v6h-1zM454 392h1v4h-1zM455 396h1v1h-1zM456 397h1v1h-1zM461 397h2v1h-2zM457 398h4v1h-4zM437 389h6v1h-6zM436 390h1v1h-1zM443 390h1v1h-1zM435 391h1v5h-1zM444 391h1v5h-1zM436 396h1v1h-1zM443 396h1v1h-1zM436 397h2v1h-2zM442 397h1v1h-1zM438 398h4v1h-4zM418 389h6v1h-6zM417 390h1v1h-1zM424 390h1v2h-1zM416 391h1v2h-1zM425 392h1v4h-1zM415 393h1v2h-1zM416 395h1v2h-1zM424 396h1v1h-1zM417 397h1v1h-1zM423 397h1v1h-1zM418 398h5v1h-5zM398 389h6v1h-6zM397 390h1v2h-1zM404 390h1v1h-1zM405 391h1v2h-1zM396 392h1v4h-1zM406 393h1v2h-1zM405 395h1v2h-1zM397 396h1v1h-1zM398 397h1v1h-1zM403 397h2v1h-2zM399 398h4v1h-4zM379 389h6v1h-6zM378 390h1v1h-1zM385 390h1v1h-1zM377 391h1v5h-1zM386 391h1v5h-1zM378 396h1v1h-1zM385 396h1v1h-1zM379 397h1v1h-1zM384 397h1v1h-1zM380 398h4v1h-4zM360 389h6v1h-6zM359 390h1v1h-1zM366 390h1v2h-1zM358 391h1v2h-1zM367 392h1v4h-1zM357 393h1v1h-1zM358 394h1v3h-1zM366 396h1v1h-1zM359 397h2v1h-2zM365 397h1v1h-1zM361 398h4v1h-4zM341 389h5v1h-5zM339 390h2v1h-2zM346 390h1v1h-1zM339 391h1v1h-1zM347 391h1v1h-1zM338 392h1v3h-1zM348 392h1v3h-1zM339 395h1v2h-1zM347 395h1v2h-1zM340 397h1v1h-1zM346 397h1v1h-1zM341 398h5v1h-5zM321 389h6v1h-6zM320 390h1v1h-1zM327 390h1v1h-1zM319 391h1v5h-1zM328 391h1v6h-1zM320 396h1v1h-1zM321 397h1v1h-1zM326 397h2v1h-2zM322 398h4v1h-4zM302 389h6v1h-6zM301 390h1v1h-1zM308 390h1v1h-1zM300 391h1v5h-1zM309 391h1v5h-1zM301 396h1v1h-1zM308 396h1v1h-1zM301 397h2v1h-2zM307 397h1v1h-1zM303 398h4v1h-4zM283 389h6v1h-6zM282 390h1v1h-1zM289 390h1v2h-1zM281 391h1v2h-1zM290 392h1v4h-1zM280 393h1v2h-1zM281 395h1v2h-1zM289 396h1v1h-1zM282 397h1v1h-1zM288 397h1v1h-1zM283 398h5v1h-5zM263 389h6v1h-6zM262 390h1v2h-1zM269 390h1v1h-1zM270 391h1v2h-1zM261 392h1v4h-1zM271 393h1v1h-1zM270 394h1v3h-1zM262 396h1v1h-1zM263 397h1v1h-1zM268 397h2v1h-2zM264 398h4v1h-4zM244 389h6v1h-6zM243 390h1v1h-1zM250 390h1v1h-1zM242 391h1v5h-1zM251 391h1v5h-1zM243 396h1v1h-1zM250 396h1v1h-1zM244 397h1v1h-1zM249 397h1v1h-1zM245 398h4v1h-4zM225 389h6v1h-6zM231 390h1v2h-1zM232 392h1v4h-1zM231 396h1v1h-1zM224 397h2v1h-2zM230 397h1v1h-1zM226 398h4v1h-4zM767 417h2v1h-2zM765 418h2v1h-2zM769 418h2v1h-2zM764 419h1v1h-1zM771 419h1v1h-1zM763 420h1v6h-1zM772 420h1v5h-1zM771 425h1v1h-1zM764 426h2v1h-2zM770 426h1v1h-1zM766 427h4v1h-4zM748 417h1v1h-1zM745 418h3v1h-3zM749 418h3v1h-3zM744 419h1v2h-1zM752 419h1v2h-1zM743 421h1v3h-1zM753 421h1v3h-1zM744 424h1v2h-1zM752 424h1v2h-1zM745 426h2v1h-2zM750 426h2v1h-2zM747 427h3v1h-3zM728 417h2v1h-2zM726 418h2v1h-2zM730 418h2v1h-2zM725 419h1v1h-1zM732 419h1v1h-1zM724 420h1v5h-1zM733 420h1v6h-1zM725 425h1v1h-1zM726 426h1v1h-1zM731 426h2v1h-2zM727 427h4v1h-4zM709 417h2v1h-2zM707 418h2v1h-2zM711 418h2v1h-2zM706 419h1v1h-1zM713 419h1v1h-1zM705 420h1v5h-1zM714 420h1v5h-1zM706 425h1v1h-1zM713 425h1v1h-1zM707 426h1v1h-1zM712 426h1v1h-1zM708 427h4v1h-4zM690 417h2v1h-2zM688 418h2v1h-2zM692 418h2v1h-2zM687 419h1v1h-1zM694 419h1v2h-1zM686 420h1v2h-1zM695 421h1v4h-1zM685 422h1v2h-1zM686 424h1v2h-1zM694 425h1v1h-1zM687 426h2v1h-2zM693 426h1v1h-1zM689 427h4v1h-4zM670 417h2v1h-2zM668 418h2v1h-2zM672 418h2v1h-2zM667 419h1v2h-1zM674 419h1v1h-1zM675 420h1v2h-1zM666 421h1v4h-1zM676 422h1v2h-1zM675 424h1v2h-1zM667 425h1v1h-1zM668 426h1v1h-1zM673 426h2v1h-2zM669 427h4v1h-4zM651 417h2v1h-2zM649 418h2v1h-2zM653 418h2v1h-2zM648 419h1v1h-1zM655 419h1v1h-1zM647 420h1v5h-1zM656 420h1v5h-1zM648 425h1v1h-1zM655 425h1v1h-1zM649 426h1v1h-1zM654 426h1v1h-1zM650 427h4v1h-4zM632 417h2v1h-2zM630 418h2v1h-2zM634 418h2v1h-2zM629 419h1v1h-1zM636 419h1v2h-1zM628 420h1v6h-1zM637 421h1v4h-1zM636 425h1v1h-1zM629 426h2v1h-2zM635 426h1v1h-1zM631 427h4v1h-4zM613 417h1v1h-1zM610 418h3v1h-3zM614 418h3v1h-3zM609 419h1v2h-1zM617 419h1v2h-1zM608 421h1v3h-1zM618 421h1v3h-1zM609 424h1v2h-1zM617 424h1v2h-1zM610 426h2v1h-2zM615 426h2v1h-2zM612 427h3v1h-3zM593 417h2v1h-2zM591 418h2v1h-2zM595 418h2v1h-2zM590 419h1v1h-1zM597 419h1v1h-1zM589 420h1v5h-1zM598 420h1v6h-1zM590 425h1v1h-1zM591 426h1v1h-1zM596 426h2v1h-2zM592 427h4v1h-4zM574 417h2v1h-2zM572 418h2v1h-2zM576 418h2v1h-2zM571 419h1v1h-1zM578 419h1v1h-1zM570 420h1v5h-1zM579 420h1v5h-1zM571 425h1v1h-1zM578 425h1v1h-1zM572 426h1v1h-1zM577 426h1v1h-1zM573 427h4v1h-4zM555 417h1v1h-1zM553 418h2v1h-2zM556 418h3v1h-3zM552 419h1v1h-1zM559 419h1v2h-1zM551 420h1v2h-1zM560 421h1v4h-1zM550 422h1v2h-1zM551 424h1v2h-1zM559 425h1v1h-1zM552 426h2v1h-2zM558 426h1v1h-1zM554 427h4v1h-4zM535 417h2v1h-2zM533 418h2v1h-2zM537 418h2v1h-2zM532 419h1v2h-1zM539 419h1v1h-1zM540 420h1v2h-1zM531 421h1v4h-1zM541 422h1v2h-1zM540 424h1v2h-1zM532 425h1v1h-1zM533 426h1v1h-1zM538 426h2v1h-2zM534 427h4v1h-4zM516 417h2v1h-2zM514 418h2v1h-2zM518 418h2v1h-2zM513 419h1v1h-1zM520 419h1v1h-1zM512 420h1v5h-1zM521 420h1v5h-1zM513 425h1v1h-1zM520 425h1v1h-1zM514 426h1v1h-1zM519 426h1v1h-1zM515 427h4v1h-4zM497 417h2v1h-2zM495 418h2v1h-2zM499 418h2v1h-2zM494 419h1v1h-1zM501 419h1v2h-1zM493 420h1v6h-1zM502 421h1v4h-1zM501 425h1v1h-1zM494 426h2v1h-2zM500 426h1v1h-1zM496 427h4v1h-4zM478 417h1v1h-1zM475 418h3v1h-3zM479 418h2v1h-2zM474 419h1v2h-1zM481 419h2v1h-2zM482 420h1v1h-1zM473 421h1v3h-1zM483 421h1v3h-1zM474 424h1v2h-1zM482 424h1v2h-1zM475 426h2v1h-2zM480 426h2v1h-2zM477 427h3v1h-3zM458 417h2v1h-2zM456 418h2v1h-2zM460 418h2v1h-2zM455 419h1v1h-1zM462 419h1v1h-1zM454 420h1v5h-1zM463 420h1v5h-1zM455 425h1v1h-1zM462 425h1v1h-1zM456 426h1v1h-1zM461 426h2v1h-2zM457 427h4v1h-4zM439 417h2v1h-2zM437 418h2v1h-2zM441 418h2v1h-2zM436 419h1v1h-1zM443 419h1v1h-1zM435 420h1v5h-1zM444 420h1v5h-1zM436 425h1v1h-1zM443 425h1v1h-1zM437 426h1v1h-1zM442 426h1v1h-1zM438 427h4v1h-4zM420 417h1v1h-1zM418 418h2v1h-2zM421 418h3v1h-3zM417 419h1v1h-1zM424 419h1v2h-1zM416 420h1v2h-1zM425 421h1v3h-1zM415 422h1v2h-1zM416 424h1v2h-1zM424 424h1v2h-1zM417 426h2v1h-2zM423 426h1v1h-1zM419 427h4v1h-4zM400 417h2v1h-2zM398 418h2v1h-2zM402 418h2v1h-2zM397 419h1v2h-1zM404 419h1v1h-1zM405 420h1v2h-1zM396 421h1v4h-1zM406 422h1v1h-1zM405 423h1v3h-1zM397 425h1v1h-1zM398 426h1v1h-1zM403 426h2v1h-2zM399 427h4v1h-4zM381 417h2v1h-2zM379 418h2v1h-2zM383 418h2v1h-2zM378 419h1v1h-1zM385 419h1v1h-1zM377 420h1v5h-1zM386 420h1v5h-1zM378 425h1v1h-1zM385 425h1v1h-1zM379 426h1v1h-1zM384 426h1v1h-1zM380 427h4v1h-4zM362 417h2v1h-2zM360 418h2v1h-2zM364 418h2v1h-2zM359 419h1v1h-1zM366 419h1v2h-1zM358 420h1v2h-1zM367 421h1v4h-1zM357 422h1v1h-1zM358 423h1v3h-1zM366 425h1v1h-1zM359 426h2v1h-2zM365 426h1v1h-1zM361 427h4v1h-4zM343 417h1v1h-1zM340 418h3v1h-3zM344 418h2v1h-2zM339 419h1v2h-1zM346 419h1v1h-1zM347 420h1v1h-1zM338 421h1v3h-1zM348 421h1v3h-1zM339 424h1v2h-1zM347 424h1v2h-1zM340 426h2v1h-2zM345 426h2v1h-2zM342 427h3v1h-3zM323 417h2v1h-2zM321 418h2v1h-2zM325 418h2v1h-2zM320 419h1v1h-1zM327 419h1v1h-1zM319 420h1v5h-1zM328 420h1v5h-1zM320 425h1v1h-1zM327 425h1v1h-1zM321 426h1v1h-1zM326 426h2v1h-2zM322 427h4v1h-4zM304 417h2v1h-2zM302 418h2v1h-2zM306 418h2v1h-2zM301 419h1v1h-1zM308 419h1v1h-1zM300 420h1v5h-1zM309 420h1v5h-1zM301 425h1v1h-1zM308 425h1v1h-1zM301 426h2v1h-2zM307 426h1v1h-1zM303 427h4v1h-4zM285 417h1v1h-1zM283 418h2v1h-2zM286 418h3v1h-3zM282 419h1v1h-1zM289 419h1v2h-1zM281 420h1v1h-1zM280 421h1v3h-1zM290 421h1v3h-1zM281 424h1v2h-1zM289 424h1v2h-1zM282 426h2v1h-2zM288 426h1v1h-1zM284 427h4v1h-4zM265 417h2v1h-2zM263 418h2v1h-2zM267 418h2v1h-2zM262 419h1v2h-1zM269 419h1v1h-1zM270 420h1v2h-1zM261 421h1v4h-1zM271 422h1v1h-1zM270 423h1v3h-1zM262 425h1v1h-1zM263 426h1v1h-1zM268 426h2v1h-2zM264 427h4v1h-4zM246 417h2v1h-2zM244 418h2v1h-2zM248 418h2v1h-2zM243 419h1v1h-1zM250 419h1v1h-1zM242 420h1v5h-1zM251 420h1v5h-1zM243 425h1v1h-1zM250 425h1v1h-1zM244 426h1v1h-1zM249 426h1v1h-1zM245 427h4v1h-4zM227 417h2v1h-2zM225 418h2v1h-2zM229 418h2v1h-2zM231 419h1v2h-1zM232 421h1v4h-1zM231 425h1v1h-1zM224 426h2v1h-2zM230 426h1v1h-1zM226 427h4v1h-4zM767 446h2v1h-2zM765 447h2v1h-2zM769 447h2v1h-2zM764 448h1v1h-1zM771 448h1v1h-1zM763 449h1v5h-1zM772 449h1v5h-1zM764 454h1v1h-1zM771 454h1v1h-1zM764 455h2v1h-2zM770 455h1v1h-1zM766 456h4v1h-4zM747 446h3v1h-3zM745 447h2v1h-2zM750 447h2v1h-2zM744 448h1v2h-1zM752 448h1v2h-1zM743 450h1v3h-1zM753 450h1v3h-1zM744 453h1v2h-1zM752 453h1v2h-1zM745 455h2v1h-2zM750 455h2v1h-2zM747 456h3v1h-3zM728 446h2v1h-2zM726 447h2v1h-2zM730 447h2v1h-2zM725 448h1v1h-1zM732 448h1v1h-1zM724 449h1v5h-1zM733 449h1v5h-1zM725 454h1v1h-1zM732 454h1v1h-1zM726 455h1v1h-1zM731 455h2v1h-2zM727 456h4v1h-4zM709 446h2v1h-2zM707 447h2v1h-2zM711 447h2v1h-2zM706 448h1v1h-1zM713 448h1v1h-1zM705 449h1v5h-1zM714 449h1v5h-1zM706 454h1v1h-1zM713 454h1v1h-1zM707 455h1v1h-1zM712 455h1v1h-1zM708 456h4v1h-4zM689 446h3v1h-3zM688 447h1v1h-1zM692 447h2v1h-2zM687 448h1v1h-1zM694 448h1v2h-1zM686 449h1v2h-1zM695 450h1v3h-1zM685 451h1v2h-1zM686 453h1v2h-1zM694 453h1v2h-1zM687 455h2v1h-2zM692 455h2v1h-2zM689 456h3v1h-3zM670 446h3v1h-3zM668 447h2v1h-2zM673 447h1v1h-1zM667 448h1v2h-1zM674 448h1v1h-1zM675 449h1v2h-1zM666 450h1v3h-1zM676 451h1v2h-1zM667 453h1v2h-1zM675 453h1v2h-1zM668 455h2v1h-2zM673 455h2v1h-2zM670 456h3v1h-3zM651 446h2v1h-2zM649 447h2v1h-2zM653 447h2v1h-2zM648 448h1v1h-1zM655 448h1v1h-1zM647 449h1v5h-1zM656 449h1v5h-1zM648 454h1v1h-1zM655 454h1v1h-1zM649 455h1v1h-1zM654 455h1v1h-1zM650 456h4v1h-4zM632 446h2v1h-2zM630 447h2v1h-2zM634 447h2v1h-2zM629 448h1v1h-1zM636 448h1v1h-1zM628 449h1v5h-1zM637 449h1v5h-1zM629 454h1v1h-1zM636 454h1v1h-1zM629 455h2v1h-2zM635 455h1v1h-1zM631 456h4v1h-4zM612 446h3v1h-3zM610 447h2v1h-2zM615 447h2v1h-2zM609 448h1v2h-1zM617 448h1v2h-1zM608 450h1v3h-1zM618 450h1v3h-1zM609 453h1v2h-1zM617 453h1v2h-1zM610 455h2v1h-2zM615 455h2v1h-2zM612 456h3v1h-3zM593 446h2v1h-2zM591 447h2v1h-2zM595 447h2v1h-2zM590 448h1v1h-1zM597 448h1v1h-1zM589 449h1v5h-1zM598 449h1v5h-1zM590 454h1v1h-1zM597 454h1v1h-1zM591 455h1v1h-1zM596 455h2v1h-2zM592 456h4v1h-4zM574 446h2v1h-2zM572 447h2v1h-2zM576 447h2v1h-2zM571 448h1v1h-1zM578 448h1v1h-1zM570 449h1v5h-1zM579 449h1v5h-1zM571 454h1v1h-1zM578 454h1v1h-1zM572 455h1v1h-1zM577 455h1v1h-1zM573 456h4v1h-4zM554 446h3v1h-3zM553 447h1v1h-1zM557 447h2v1h-2zM552 448h1v1h-1zM559 448h1v2h-1zM551 449h1v1h-1zM550 450h1v3h-1zM560 450h1v3h-1zM551 453h1v2h-1zM559 453h1v2h-1zM552 455h2v1h-2zM557 455h2v1h-2zM554 456h3v1h-3zM535 446h3v1h-3zM533 447h2v1h-2zM538 447h1v1h-1zM532 448h1v2h-1zM539 448h1v1h-1zM540 449h1v2h-1zM531 450h1v4h-1zM541 451h1v1h-1zM540 452h1v3h-1zM532 454h1v1h-1zM533 455h2v1h-2zM538 455h2v1h-2zM535 456h3v1h-3zM516 446h2v1h-2zM514 447h2v1h-2zM518 447h2v1h-2zM513 448h1v1h-1zM520 448h1v1h-1zM512 449h1v5h-1zM521 449h1v5h-1zM513 454h1v1h-1zM520 454h1v1h-1zM514 455h1v1h-1zM519 455h1v1h-1zM515 456h4v1h-4zM497 446h2v1h-2zM495 447h2v1h-2zM499 447h2v1h-2zM494 448h1v1h-1zM501 448h1v1h-1zM493 449h1v5h-1zM502 449h1v5h-1zM494 454h1v1h-1zM501 454h1v1h-1zM494 455h2v1h-2zM500 455h1v1h-1zM496 456h4v1h-4zM477 446h3v1h-3zM475 447h2v1h-2zM480 447h2v1h-2zM474 448h1v2h-1zM482 448h1v2h-1zM473 450h1v3h-1zM483 450h1v3h-1zM474 453h1v2h-1zM482 453h1v2h-1zM475 455h2v1h-2zM480 455h2v1h-2zM477 456h3v1h-3zM458 446h2v1h-2zM456 447h2v1h-2zM460 447h2v1h-2zM455 448h1v1h-1zM462 448h1v1h-1zM454 449h1v5h-1zM463 449h1v5h-1zM455 454h1v1h-1zM462 454h1v1h-1zM456 455h1v1h-1zM461 455h1v1h-1zM457 456h4v1h-4zM439 446h2v1h-2zM437 447h2v1h-2zM441 447h2v1h-2zM436 448h1v1h-1zM443 448h1v1h-1zM435 449h1v5h-1zM444 449h1v5h-1zM436 454h1v1h-1zM443 454h1v1h-1zM437 455h1v1h-1zM442 455h1v1h-1zM438 456h4v1h-4zM419 446h3v1h-3zM417 447h2v1h-2zM422 447h2v1h-2zM416 448h1v2h-1zM424 448h1v2h-1zM415 450h1v3h-1zM425 450h1v3h-1zM416 453h1v2h-1zM424 453h1v2h-1zM417 455h2v1h-2zM422 455h2v1h-2zM419 456h3v1h-3zM400 446h3v1h-3zM398 447h2v1h-2zM403 447h1v1h-1zM397 448h1v2h-1zM404 448h1v1h-1zM405 449h1v2h-1zM396 450h1v4h-1zM406 451h1v1h-1zM405 452h1v3h-1zM397 454h1v1h-1zM398 455h2v1h-2zM403 455h2v1h-2zM400 456h3v1h-3zM381 446h2v1h-2zM379 447h2v1h-2zM383 447h2v1h-2zM378 448h1v1h-1zM385 448h1v1h-1zM377 449h1v5h-1zM386 449h1v5h-1zM378 454h1v1h-1zM385 454h1v1h-1zM379 455h1v1h-1zM384 455h1v1h-1zM380 456h4v1h-4zM362 446h2v1h-2zM360 447h2v1h-2zM364 447h2v1h-2zM359 448h1v1h-1zM366 448h1v1h-1zM358 449h1v2h-1zM367 449h1v5h-1zM357 451h1v1h-1zM358 452h1v3h-1zM366 454h1v1h-1zM359 455h2v1h-2zM364 455h2v1h-2zM361 456h3v1h-3zM342 446h3v1h-3zM340 447h2v1h-2zM345 447h2v1h-2zM339 448h1v2h-1zM347 448h1v2h-1zM338 450h1v3h-1zM348 450h1v3h-1zM339 453h1v2h-1zM347 453h1v2h-1zM340 455h2v1h-2zM345 455h2v1h-2zM342 456h3v1h-3zM323 446h2v1h-2zM321 447h2v1h-2zM325 447h2v1h-2zM320 448h1v1h-1zM327 448h1v1h-1zM319 449h1v5h-1zM328 449h1v5h-1zM320 454h1v1h-1zM327 454h1v1h-1zM321 455h1v1h-1zM326 455h1v1h-1zM322 456h4v1h-4zM304 446h2v1h-2zM302 447h2v1h-2zM306 447h2v1h-2zM301 448h1v1h-1zM308 448h1v1h-1zM300 449h1v5h-1zM309 449h1v5h-1zM301 454h1v1h-1zM308 454h1v1h-1zM302 455h1v1h-1zM307 455h1v1h-1zM303 456h4v1h-4zM284 446h3v1h-3zM282 447h2v1h-2zM287 447h2v1h-2zM281 448h1v2h-1zM289 448h1v2h-1zM280 450h1v3h-1zM290 450h1v3h-1zM281 453h1v2h-1zM289 453h1v2h-1zM282 455h2v1h-2zM287 455h2v1h-2zM284 456h3v1h-3zM265 446h3v1h-3zM263 447h2v1h-2zM268 447h1v1h-1zM262 448h1v2h-1zM269 448h1v1h-1zM270 449h1v2h-1zM261 450h1v4h-1zM271 451h1v1h-1zM270 452h1v3h-1zM262 454h1v1h-1zM263 455h2v1h-2zM268 455h2v1h-2zM265 456h3v1h-3zM246 446h2v1h-2zM244 447h2v1h-2zM248 447h2v1h-2zM243 448h1v1h-1zM250 448h1v1h-1zM242 449h1v5h-1zM251 449h1v5h-1zM243 454h1v1h-1zM250 454h1v1h-1zM244 455h1v1h-1zM249 455h1v1h-1zM245 456h4v1h-4zM226 446h3v1h-3zM225 447h1v1h-1zM229 447h2v1h-2zM231 448h1v2h-1zM232 450h1v4h-1zM231 454h1v1h-1zM224 455h2v1h-2zM229 455h2v1h-2zM226 456h3v1h-3zM766 475h3v1h-3zM765 476h1v1h-1zM769 476h2v1h-2zM764 477h1v1h-1zM771 477h1v1h-1zM763 478h1v5h-1zM772 478h1v5h-1zM764 483h1v1h-1zM771 483h1v1h-1zM765 484h1v1h-1zM769 484h2v1h-2zM766 485h3v1h-3zM747 475h3v1h-3zM745 476h2v1h-2zM750 476h2v1h-2zM744 477h1v2h-1zM752 477h1v2h-1zM743 479h1v3h-1zM753 479h1v3h-1zM744 482h1v2h-1zM752 482h1v2h-1zM745 484h2v1h-2zM750 484h2v1h-2zM747 485h3v1h-3zM728 475h3v1h-3zM726 476h2v1h-2zM731 476h1v1h-1zM725 477h1v1h-1zM732 477h1v1h-1zM724 478h1v5h-1zM733 478h1v5h-1zM725 483h1v1h-1zM732 483h1v1h-1zM726 484h2v1h-2zM731 484h1v1h-1zM728 485h3v1h-3zM708 475h3v1h-3zM707 476h1v1h-1zM711 476h2v1h-2zM706 477h1v1h-1zM713 477h1v1h-1zM705 478h1v5h-1zM714 478h1v5h-1zM706 483h1v1h-1zM713 483h1v1h-1zM707 484h1v1h-1zM711 484h2v1h-2zM708 485h3v1h-3zM689 475h3v1h-3zM687 476h2v1h-2zM692 476h2v1h-2zM686 477h1v2h-1zM694 477h1v2h-1zM685 479h1v3h-1zM695 479h1v3h-1zM686 482h1v2h-1zM694 482h1v2h-1zM687 484h2v1h-2zM692 484h2v1h-2zM689 485h3v1h-3zM670 475h3v1h-3zM668 476h2v1h-2zM673 476h2v1h-2zM667 477h1v2h-1zM675 477h1v3h-1zM666 479h1v3h-1zM676 480h1v1h-1zM675 481h1v3h-1zM667 482h1v2h-1zM668 484h2v1h-2zM673 484h2v1h-2zM670 485h3v1h-3zM651 475h3v1h-3zM649 476h2v1h-2zM654 476h1v1h-1zM648 477h1v1h-1zM655 477h1v1h-1zM647 478h1v5h-1zM656 478h1v5h-1zM648 483h1v1h-1zM655 483h1v1h-1zM649 484h2v1h-2zM654 484h1v1h-1zM651 485h3v1h-3zM631 475h3v1h-3zM630 476h1v1h-1zM634 476h2v1h-2zM629 477h1v1h-1zM636 477h1v1h-1zM628 478h1v5h-1zM637 478h1v5h-1zM629 483h1v1h-1zM636 483h1v1h-1zM630 484h1v1h-1zM634 484h2v1h-2zM631 485h3v1h-3zM612 475h3v1h-3zM610 476h2v1h-2zM615 476h2v1h-2zM609 477h1v2h-1zM617 477h1v2h-1zM608 479h1v3h-1zM618 479h1v3h-1zM609 482h1v2h-1zM617 482h1v2h-1zM610 484h2v1h-2zM615 484h2v1h-2zM612 485h3v1h-3zM593 475h3v1h-3zM591 476h2v1h-2zM596 476h1v1h-1zM590 477h1v1h-1zM597 477h1v1h-1zM589 478h1v5h-1zM598 478h1v5h-1zM590 483h1v1h-1zM597 483h1v1h-1zM591 484h2v1h-2zM596 484h1v1h-1zM593 485h3v1h-3zM573 475h3v1h-3zM572 476h1v1h-1zM576 476h2v1h-2zM571 477h1v1h-1zM578 477h1v1h-1zM570 478h1v5h-1zM579 478h1v5h-1zM571 483h1v1h-1zM578 483h1v1h-1zM572 484h1v1h-1zM576 484h2v1h-2zM573 485h3v1h-3zM554 475h3v1h-3zM552 476h2v1h-2zM557 476h2v1h-2zM551 477h1v2h-1zM559 477h1v2h-1zM550 479h1v3h-1zM560 479h1v3h-1zM551 482h1v2h-1zM559 482h1v2h-1zM552 484h2v1h-2zM557 484h2v1h-2zM554 485h3v1h-3zM535 475h3v1h-3zM533 476h2v1h-2zM538 476h2v1h-2zM532 477h1v2h-1zM540 477h1v3h-1zM531 479h1v3h-1zM541 480h1v1h-1zM540 481h1v3h-1zM532 482h1v2h-1zM533 484h2v1h-2zM538 484h2v1h-2zM535 485h3v1h-3zM516 475h3v1h-3zM514 476h2v1h-2zM519 476h1v1h-1zM513 477h1v1h-1zM520 477h1v1h-1zM512 478h1v5h-1zM521 478h1v5h-1zM513 483h1v1h-1zM520 483h1v1h-1zM514 484h2v1h-2zM519 484h1v1h-1zM516 485h3v1h-3zM496 475h3v1h-3zM495 476h1v1h-1zM499 476h2v1h-2zM494 477h1v1h-1zM501 477h1v1h-1zM493 478h1v5h-1zM502 478h1v5h-1zM494 483h1v1h-1zM501 483h1v1h-1zM495 484h1v1h-1zM499 484h2v1h-2zM496 485h3v1h-3zM477 475h3v1h-3zM475 476h2v1h-2zM480 476h2v1h-2zM474 477h1v2h-1zM482 477h1v2h-1zM473 479h1v3h-1zM483 479h1v3h-1zM474 482h1v2h-1zM482 482h1v2h-1zM475 484h2v1h-2zM480 484h2v1h-2zM477 485h3v1h-3zM458 475h3v1h-3zM456 476h2v1h-2zM461 476h1v1h-1zM455 477h1v1h-1zM462 477h1v1h-1zM454 478h1v5h-1zM463 478h1v5h-1zM455 483h1v1h-1zM462 483h1v1h-1zM456 484h2v1h-2zM461 484h1v1h-1zM458 485h3v1h-3zM438 475h3v1h-3zM437 476h1v1h-1zM441 476h2v1h-2zM436 477h1v1h-1zM443 477h1v1h-1zM435 478h1v5h-1zM444 478h1v5h-1zM436 483h1v1h-1zM443 483h1v1h-1zM437 484h1v1h-1zM441 484h2v1h-2zM438 485h3v1h-3zM419 475h3v1h-3zM417 476h2v1h-2zM422 476h2v1h-2zM416 477h1v2h-1zM424 477h1v2h-1zM415 479h1v3h-1zM425 479h1v3h-1zM416 482h1v2h-1zM424 482h1v2h-1zM417 484h2v1h-2zM422 484h2v1h-2zM419 485h3v1h-3zM400 475h3v1h-3zM398 476h2v1h-2zM403 476h2v1h-2zM397 477h1v2h-1zM404 477h1v1h-1zM405 478h1v2h-1zM396 479h1v3h-1zM406 480h1v1h-1zM405 481h1v3h-1zM397 482h1v2h-1zM398 484h2v1h-2zM403 484h2v1h-2zM400 485h3v1h-3zM381 475h3v1h-3zM379 476h2v1h-2zM384 476h1v1h-1zM378 477h1v1h-1zM385 477h1v1h-1zM377 478h1v5h-1zM386 478h1v5h-1zM378 483h1v1h-1zM385 483h1v1h-1zM379 484h1v1h-1zM384 484h1v1h-1zM380 485h4v1h-4zM361 475h3v1h-3zM360 476h1v1h-1zM364 476h2v1h-2zM359 477h1v1h-1zM366 477h1v1h-1zM358 478h1v2h-1zM367 478h1v5h-1zM357 480h1v1h-1zM358 481h1v2h-1zM359 483h1v1h-1zM366 483h1v1h-1zM360 484h1v1h-1zM364 484h2v1h-2zM361 485h3v1h-3zM342 475h3v1h-3zM340 476h2v1h-2zM345 476h2v1h-2zM339 477h1v2h-1zM347 477h1v2h-1zM338 479h1v3h-1zM348 479h1v3h-1zM339 482h1v2h-1zM347 482h1v2h-1zM340 484h2v1h-2zM345 484h2v1h-2zM342 485h3v1h-3zM323 475h3v1h-3zM321 476h2v1h-2zM326 476h1v1h-1zM320 477h1v1h-1zM327 477h1v1h-1zM319 478h1v5h-1zM328 478h1v5h-1zM320 483h1v1h-1zM327 483h1v1h-1zM321 484h2v1h-2zM326 484h1v1h-1zM323 485h3v1h-3zM303 475h3v1h-3zM302 476h1v1h-1zM306 476h2v1h-2zM301 477h1v1h-1zM308 477h1v1h-1zM300 478h1v5h-1zM309 478h1v5h-1zM301 483h1v1h-1zM308 483h1v1h-1zM302 484h1v1h-1zM306 484h2v1h-2zM303 485h3v1h-3zM284 475h3v1h-3zM282 476h2v1h-2zM287 476h2v1h-2zM281 477h1v2h-1zM289 477h1v2h-1zM280 479h1v3h-1zM290 479h1v3h-1zM281 482h1v2h-1zM289 482h1v2h-1zM282 484h2v1h-2zM287 484h2v1h-2zM284 485h3v1h-3zM265 475h3v1h-3zM263 476h2v1h-2zM268 476h2v1h-2zM262 477h1v1h-1zM269 477h1v1h-1zM261 478h1v5h-1zM270 478h1v2h-1zM271 480h1v1h-1zM270 481h1v2h-1zM262 483h1v1h-1zM269 483h1v1h-1zM263 484h2v1h-2zM268 484h2v1h-2zM265 485h3v1h-3zM246 475h3v1h-3zM244 476h2v1h-2zM249 476h1v1h-1zM243 477h1v1h-1zM250 477h1v1h-1zM242 478h1v5h-1zM251 478h1v5h-1zM243 483h1v1h-1zM250 483h1v1h-1zM244 484h1v1h-1zM249 484h1v1h-1zM245 485h4v1h-4zM226 475h3v1h-3zM225 476h1v1h-1zM229 476h2v1h-2zM231 477h1v1h-1zM232 478h1v5h-1zM231 483h1v1h-1zM225 484h1v1h-1zM229 484h2v1h-2zM226 485h3v1h-3zM766 504h4v1h-4zM764 505h2v1h-2zM770 505h1v1h-1zM764 506h1v1h-1zM771 506h1v1h-1zM763 507h1v5h-1zM772 507h1v5h-1zM764 512h1v1h-1zM771 512h1v1h-1zM765 513h2v1h-2zM769 513h2v1h-2zM767 514h2v1h-2zM747 504h3v1h-3zM745 505h2v1h-2zM750 505h2v1h-2zM744 506h1v2h-1zM752 506h1v2h-1zM743 508h1v3h-1zM753 508h1v3h-1zM744 511h1v2h-1zM752 511h1v2h-1zM745 513h2v1h-2zM750 513h2v1h-2zM747 514h3v1h-3zM727 504h4v1h-4zM726 505h1v1h-1zM731 505h2v1h-2zM725 506h1v1h-1zM732 506h1v1h-1zM724 507h1v5h-1zM733 507h1v5h-1zM725 512h1v1h-1zM732 512h1v1h-1zM726 513h2v1h-2zM730 513h2v1h-2zM728 514h2v1h-2zM708 504h4v1h-4zM707 505h1v1h-1zM712 505h1v1h-1zM706 506h1v1h-1zM713 506h1v1h-1zM705 507h1v5h-1zM714 507h1v5h-1zM706 512h1v1h-1zM713 512h1v1h-1zM707 513h2v1h-2zM711 513h2v1h-2zM709 514h2v1h-2zM689 504h3v1h-3zM687 505h2v1h-2zM692 505h2v1h-2zM686 506h1v2h-1zM694 506h1v2h-1zM685 508h1v2h-1zM695 508h1v3h-1zM686 510h1v2h-1zM694 511h1v2h-1zM687 512h1v1h-1zM688 513h1v1h-1zM692 513h2v1h-2zM689 514h3v1h-3zM670 504h3v1h-3zM668 505h2v1h-2zM673 505h2v1h-2zM667 506h1v2h-1zM675 506h1v2h-1zM666 508h1v3h-1zM676 508h1v2h-1zM675 510h1v2h-1zM667 511h1v2h-1zM674 512h1v1h-1zM668 513h2v1h-2zM673 513h1v1h-1zM670 514h3v1h-3zM650 504h4v1h-4zM649 505h1v1h-1zM654 505h1v1h-1zM648 506h1v1h-1zM655 506h1v1h-1zM647 507h1v5h-1zM656 507h1v5h-1zM648 512h1v1h-1zM655 512h1v1h-1zM649 513h2v1h-2zM653 513h2v1h-2zM651 514h2v1h-2zM631 504h4v1h-4zM629 505h2v1h-2zM635 505h1v1h-1zM629 506h1v1h-1zM636 506h1v1h-1zM628 507h1v5h-1zM637 507h1v5h-1zM629 512h1v1h-1zM636 512h1v1h-1zM630 513h2v1h-2zM634 513h2v1h-2zM632 514h2v1h-2zM612 504h3v1h-3zM610 505h2v1h-2zM615 505h2v1h-2zM609 506h1v2h-1zM617 506h1v2h-1zM608 508h1v3h-1zM618 508h1v3h-1zM609 511h1v2h-1zM617 511h1v2h-1zM610 513h2v1h-2zM615 513h2v1h-2zM612 514h3v1h-3zM592 504h4v1h-4zM591 505h1v1h-1zM596 505h1v1h-1zM590 506h1v1h-1zM597 506h1v1h-1zM589 507h1v5h-1zM598 507h1v5h-1zM590 512h1v1h-1zM597 512h1v1h-1zM591 513h2v1h-2zM595 513h2v1h-2zM593 514h2v1h-2zM573 504h4v1h-4zM572 505h1v1h-1zM577 505h1v1h-1zM571 506h1v1h-1zM578 506h1v1h-1zM570 507h1v5h-1zM579 507h1v5h-1zM571 512h1v1h-1zM578 512h1v1h-1zM572 513h2v1h-2zM576 513h2v1h-2zM574 514h2v1h-2zM554 504h3v1h-3zM552 505h2v1h-2zM557 505h2v1h-2zM551 506h1v2h-1zM559 506h1v2h-1zM550 508h1v3h-1zM560 508h1v3h-1zM551 511h1v1h-1zM559 511h1v2h-1zM552 512h1v1h-1zM552 513h2v1h-2zM557 513h2v1h-2zM554 514h3v1h-3zM535 504h3v1h-3zM533 505h2v1h-2zM538 505h2v1h-2zM532 506h1v1h-1zM540 506h1v3h-1zM531 507h1v4h-1zM541 509h1v1h-1zM540 510h1v2h-1zM532 511h1v2h-1zM539 512h1v1h-1zM533 513h2v1h-2zM538 513h1v1h-1zM535 514h3v1h-3zM515 504h4v1h-4zM514 505h1v1h-1zM519 505h1v1h-1zM513 506h1v1h-1zM520 506h1v1h-1zM512 507h1v5h-1zM521 507h1v5h-1zM513 512h1v1h-1zM520 512h1v1h-1zM514 513h2v1h-2zM518 513h2v1h-2zM516 514h2v1h-2zM496 504h3v1h-3zM494 505h2v1h-2zM499 505h2v1h-2zM494 506h1v1h-1zM501 506h1v1h-1zM493 507h1v5h-1zM502 507h1v5h-1zM494 512h1v1h-1zM501 512h1v1h-1zM495 513h1v1h-1zM499 513h2v1h-2zM496 514h3v1h-3zM477 504h3v1h-3zM475 505h2v1h-2zM480 505h2v1h-2zM474 506h1v2h-1zM482 506h1v2h-1zM473 508h1v3h-1zM483 508h1v3h-1zM474 511h1v2h-1zM482 511h1v2h-1zM475 513h2v1h-2zM480 513h2v1h-2zM477 514h3v1h-3zM457 504h4v1h-4zM456 505h1v1h-1zM461 505h1v1h-1zM455 506h1v1h-1zM462 506h1v1h-1zM454 507h1v5h-1zM463 507h1v5h-1zM455 512h1v1h-1zM462 512h1v1h-1zM456 513h2v1h-2zM460 513h2v1h-2zM458 514h2v1h-2zM438 504h4v1h-4zM437 505h1v1h-1zM442 505h1v1h-1zM436 506h1v1h-1zM443 506h1v1h-1zM435 507h1v5h-1zM444 507h1v5h-1zM436 512h1v1h-1zM443 512h1v1h-1zM437 513h2v1h-2zM441 513h2v1h-2zM439 514h2v1h-2zM419 504h3v1h-3zM417 505h2v1h-2zM422 505h2v1h-2zM416 506h1v2h-1zM424 506h1v2h-1zM415 508h1v3h-1zM425 508h1v3h-1zM416 511h1v2h-1zM424 511h1v2h-1zM417 513h2v1h-2zM422 513h2v1h-2zM419 514h3v1h-3zM400 504h3v1h-3zM398 505h2v1h-2zM403 505h2v1h-2zM397 506h1v1h-1zM405 506h1v3h-1zM396 507h1v4h-1zM406 509h1v1h-1zM405 510h1v2h-1zM397 511h1v2h-1zM404 512h1v1h-1zM398 513h2v1h-2zM403 513h1v1h-1zM400 514h3v1h-3zM380 504h4v1h-4zM379 505h1v1h-1zM384 505h1v1h-1zM378 506h1v1h-1zM385 506h1v1h-1zM377 507h1v5h-1zM386 507h1v5h-1zM378 512h1v1h-1zM385 512h1v1h-1zM379 513h2v1h-2zM383 513h2v1h-2zM381 514h2v1h-2zM361 504h3v1h-3zM359 505h2v1h-2zM364 505h2v1h-2zM358 506h1v3h-1zM366 506h1v1h-1zM367 507h1v5h-1zM357 509h1v1h-1zM358 510h1v2h-1zM359 512h1v1h-1zM366 512h1v1h-1zM360 513h1v1h-1zM364 513h2v1h-2zM361 514h3v1h-3zM342 504h3v1h-3zM340 505h2v1h-2zM345 505h2v1h-2zM339 506h1v2h-1zM347 506h1v2h-1zM338 508h1v3h-1zM348 508h1v3h-1zM339 511h1v2h-1zM347 511h1v2h-1zM340 513h2v1h-2zM345 513h2v1h-2zM342 514h3v1h-3zM322 504h4v1h-4zM321 505h1v1h-1zM326 505h1v1h-1zM320 506h1v1h-1zM327 506h1v1h-1zM319 507h1v5h-1zM328 507h1v5h-1zM320 512h1v1h-1zM327 512h1v1h-1zM321 513h2v1h-2zM325 513h2v1h-2zM323 514h2v1h-2zM303 504h4v1h-4zM302 505h1v1h-1zM307 505h1v1h-1zM301 506h1v1h-1zM308 506h1v1h-1zM300 507h1v5h-1zM309 507h1v5h-1zM301 512h1v1h-1zM308 512h1v1h-1zM302 513h2v1h-2zM306 513h2v1h-2zM304 514h2v1h-2zM284 504h3v1h-3zM282 505h2v1h-2zM287 505h2v1h-2zM281 506h1v2h-1zM289 506h1v2h-1zM280 508h1v3h-1zM290 508h1v3h-1zM281 511h1v2h-1zM289 511h1v2h-1zM282 513h2v1h-2zM287 513h2v1h-2zM284 514h3v1h-3zM265 504h3v1h-3zM263 505h2v1h-2zM268 505h2v1h-2zM262 506h1v1h-1zM270 506h1v3h-1zM261 507h1v4h-1zM271 509h1v1h-1zM270 510h1v2h-1zM262 511h1v2h-1zM269 512h1v1h-1zM263 513h2v1h-2zM268 513h1v1h-1zM265 514h3v1h-3zM245 504h4v1h-4zM244 505h1v1h-1zM249 505h1v1h-1zM243 506h1v1h-1zM250 506h1v1h-1zM242 507h1v5h-1zM251 507h1v5h-1zM243 512h1v1h-1zM250 512h1v1h-1zM244 513h2v1h-2zM248 513h2v1h-2zM246 514h2v1h-2zM226 504h3v1h-3zM224 505h2v1h-2zM229 505h2v1h-2zM231 506h1v1h-1zM232 507h1v4h-1zM231 511h1v2h-1zM225 513h1v1h-1zM229 513h2v1h-2zM226 514h3v1h-3zM766 533h4v1h-4zM764 534h2v1h-2zM770 534h1v1h-1zM763 535h1v6h-1zM771 535h1v1h-1zM772 536h1v5h-1zM764 541h1v1h-1zM771 541h1v1h-1zM765 542h2v1h-2zM769 542h2v1h-2zM767 543h2v1h-2zM747 533h3v1h-3zM745 534h2v1h-2zM750 534h2v1h-2zM744 535h1v2h-1zM752 535h1v2h-1zM743 537h1v3h-1zM753 537h1v3h-1zM744 540h1v2h-1zM752 540h1v2h-1zM745 542h3v1h-3zM749 542h3v1h-3zM748 543h1v1h-1zM727 533h4v1h-4zM726 534h1v1h-1zM731 534h2v1h-2zM725 535h1v1h-1zM733 535h1v6h-1zM724 536h1v5h-1zM725 541h1v1h-1zM732 541h1v1h-1zM726 542h2v1h-2zM730 542h2v1h-2zM728 543h2v1h-2zM708 533h4v1h-4zM707 534h1v1h-1zM712 534h1v1h-1zM706 535h1v1h-1zM713 535h1v1h-1zM705 536h1v5h-1zM714 536h1v5h-1zM706 541h1v1h-1zM713 541h1v1h-1zM707 542h2v1h-2zM711 542h2v1h-2zM709 543h2v1h-2zM689 533h4v1h-4zM687 534h2v1h-2zM693 534h1v1h-1zM686 535h1v2h-1zM694 535h1v1h-1zM695 536h1v4h-1zM685 537h1v2h-1zM686 539h1v2h-1zM694 540h1v2h-1zM687 541h1v1h-1zM688 542h2v1h-2zM692 542h2v1h-2zM690 543h2v1h-2zM669 533h4v1h-4zM668 534h1v1h-1zM673 534h2v1h-2zM667 535h1v1h-1zM675 535h1v2h-1zM666 536h1v4h-1zM676 537h1v2h-1zM675 539h1v2h-1zM667 540h1v2h-1zM674 541h1v1h-1zM668 542h2v1h-2zM672 542h2v1h-2zM670 543h2v1h-2zM650 533h4v1h-4zM649 534h1v1h-1zM654 534h1v1h-1zM648 535h1v1h-1zM655 535h1v1h-1zM647 536h1v5h-1zM656 536h1v5h-1zM648 541h1v1h-1zM655 541h1v1h-1zM649 542h2v1h-2zM653 542h2v1h-2zM651 543h2v1h-2zM631 533h4v1h-4zM629 534h2v1h-2zM635 534h1v1h-1zM628 535h1v6h-1zM636 535h1v1h-1zM637 536h1v5h-1zM629 541h1v1h-1zM636 541h1v1h-1zM630 542h2v1h-2zM634 542h2v1h-2zM632 543h2v1h-2zM612 533h3v1h-3zM610 534h2v1h-2zM615 534h2v1h-2zM609 535h1v2h-1zM617 535h1v2h-1zM608 537h1v3h-1zM618 537h1v3h-1zM609 540h1v2h-1zM617 540h1v2h-1zM610 542h3v1h-3zM614 542h3v1h-3zM613 543h1v1h-1zM592 533h4v1h-4zM591 534h1v1h-1zM596 534h2v1h-2zM590 535h1v1h-1zM598 535h1v6h-1zM589 536h1v5h-1zM590 541h1v1h-1zM597 541h1v1h-1zM591 542h2v1h-2zM595 542h2v1h-2zM593 543h2v1h-2zM573 533h4v1h-4zM572 534h1v1h-1zM577 534h1v1h-1zM571 535h1v1h-1zM578 535h1v1h-1zM570 536h1v5h-1zM579 536h1v5h-1zM571 541h1v1h-1zM578 541h1v1h-1zM572 542h2v1h-2zM576 542h2v1h-2zM574 543h2v1h-2zM554 533h4v1h-4zM552 534h2v1h-2zM558 534h1v1h-1zM551 535h1v2h-1zM559 535h1v1h-1zM560 536h1v4h-1zM550 537h1v2h-1zM551 539h1v2h-1zM559 540h1v2h-1zM552 541h1v1h-1zM553 542h2v1h-2zM557 542h2v1h-2zM555 543h2v1h-2zM534 533h4v1h-4zM533 534h1v1h-1zM538 534h2v1h-2zM532 535h1v1h-1zM540 535h1v2h-1zM531 536h1v4h-1zM541 537h1v2h-1zM540 539h1v2h-1zM532 540h1v2h-1zM539 541h1v1h-1zM533 542h2v1h-2zM537 542h2v1h-2zM535 543h2v1h-2zM515 533h4v1h-4zM514 534h1v1h-1zM519 534h1v1h-1zM513 535h1v1h-1zM520 535h1v1h-1zM512 536h1v5h-1zM521 536h1v5h-1zM513 541h1v1h-1zM520 541h1v1h-1zM514 542h2v1h-2zM518 542h2v1h-2zM516 543h2v1h-2zM496 533h4v1h-4zM494 534h2v1h-2zM500 534h1v1h-1zM493 535h1v6h-1zM501 535h1v1h-1zM502 536h1v4h-1zM501 540h1v2h-1zM494 541h1v1h-1zM495 542h2v1h-2zM499 542h2v1h-2zM497 543h2v1h-2zM477 533h3v1h-3zM475 534h2v1h-2zM480 534h2v1h-2zM474 535h1v2h-1zM482 535h1v2h-1zM473 537h1v3h-1zM483 537h1v3h-1zM474 540h1v2h-1zM482 540h1v1h-1zM481 541h2v1h-2zM475 542h3v1h-3zM479 542h2v1h-2zM478 543h1v1h-1zM457 533h4v1h-4zM456 534h1v1h-1zM461 534h2v1h-2zM455 535h1v1h-1zM462 535h1v1h-1zM454 536h1v5h-1zM463 536h1v5h-1zM455 541h1v1h-1zM462 541h1v1h-1zM456 542h2v1h-2zM460 542h2v1h-2zM458 543h2v1h-2zM438 533h4v1h-4zM437 534h1v1h-1zM442 534h1v1h-1zM436 535h1v1h-1zM443 535h1v1h-1zM435 536h1v5h-1zM444 536h1v5h-1zM436 541h1v1h-1zM443 541h1v1h-1zM437 542h2v1h-2zM441 542h2v1h-2zM439 543h2v1h-2zM419 533h4v1h-4zM417 534h2v1h-2zM423 534h1v1h-1zM416 535h1v2h-1zM424 535h1v2h-1zM415 537h1v2h-1zM425 537h1v3h-1zM416 539h1v2h-1zM424 540h1v2h-1zM417 541h1v1h-1zM418 542h2v1h-2zM422 542h2v1h-2zM420 543h2v1h-2zM399 533h4v1h-4zM398 534h1v1h-1zM403 534h2v1h-2zM397 535h1v1h-1zM405 535h1v3h-1zM396 536h1v4h-1zM406 538h1v1h-1zM405 539h1v2h-1zM397 540h1v2h-1zM404 541h1v1h-1zM398 542h2v1h-2zM402 542h2v1h-2zM400 543h2v1h-2zM380 533h4v1h-4zM379 534h1v1h-1zM384 534h1v1h-1zM378 535h1v1h-1zM385 535h1v1h-1zM377 536h1v5h-1zM386 536h1v5h-1zM378 541h1v1h-1zM385 541h1v1h-1zM379 542h2v1h-2zM383 542h2v1h-2zM381 543h2v1h-2zM361 533h4v1h-4zM359 534h2v1h-2zM365 534h1v1h-1zM358 535h1v3h-1zM366 535h1v1h-1zM367 536h1v4h-1zM357 538h1v1h-1zM358 539h1v2h-1zM366 540h1v2h-1zM359 541h1v1h-1zM360 542h2v1h-2zM364 542h2v1h-2zM362 543h2v1h-2zM342 533h3v1h-3zM340 534h2v1h-2zM345 534h2v1h-2zM339 535h1v2h-1zM347 535h1v2h-1zM338 537h1v3h-1zM348 537h1v3h-1zM339 540h1v2h-1zM347 540h1v1h-1zM346 541h1v1h-1zM340 542h3v1h-3zM344 542h2v1h-2zM343 543h1v1h-1zM322 533h4v1h-4zM321 534h1v1h-1zM326 534h2v1h-2zM320 535h1v1h-1zM327 535h1v1h-1zM319 536h1v5h-1zM328 536h1v5h-1zM320 541h1v1h-1zM327 541h1v1h-1zM321 542h2v1h-2zM325 542h2v1h-2zM323 543h2v1h-2zM303 533h4v1h-4zM301 534h2v1h-2zM307 534h1v1h-1zM301 535h1v1h-1zM308 535h1v1h-1zM300 536h1v5h-1zM309 536h1v5h-1zM301 541h1v1h-1zM308 541h1v1h-1zM302 542h2v1h-2zM306 542h2v1h-2zM304 543h2v1h-2zM284 533h4v1h-4zM282 534h2v1h-2zM288 534h1v1h-1zM281 535h1v2h-1zM289 535h1v2h-1zM280 537h1v3h-1zM290 537h1v3h-1zM281 540h1v1h-1zM289 540h1v2h-1zM282 541h1v1h-1zM283 542h2v1h-2zM287 542h2v1h-2zM285 543h2v1h-2zM264 533h4v1h-4zM263 534h1v1h-1zM268 534h2v1h-2zM262 535h1v1h-1zM270 535h1v3h-1zM261 536h1v4h-1zM271 538h1v1h-1zM270 539h1v2h-1zM262 540h1v2h-1zM269 541h1v1h-1zM263 542h2v1h-2zM267 542h2v1h-2zM265 543h2v1h-2zM245 533h4v1h-4zM244 534h1v1h-1zM249 534h1v1h-1zM243 535h1v1h-1zM250 535h1v1h-1zM242 536h1v5h-1zM251 536h1v5h-1zM243 541h1v1h-1zM250 541h1v1h-1zM244 542h2v1h-2zM248 542h2v1h-2zM246 543h2v1h-2zM226 533h4v1h-4zM224 534h2v1h-2zM230 534h1v1h-1zM231 535h1v1h-1zM232 536h1v4h-1zM231 540h1v2h-1zM225 542h2v1h-2zM229 542h2v1h-2zM227 543h2v1h-2zM766 562h4v1h-4zM764 563h2v1h-2zM770 563h1v1h-1zM763 564h1v6h-1zM771 564h1v1h-1zM772 565h1v4h-1zM771 569h1v2h-1zM764 570h1v1h-1zM765 571h6v1h-6zM746 562h5v1h-5zM745 563h1v1h-1zM751 563h1v1h-1zM744 564h1v2h-1zM752 564h1v2h-1zM743 566h1v3h-1zM753 566h1v3h-1zM744 569h1v1h-1zM752 569h1v1h-1zM745 570h1v1h-1zM751 570h1v1h-1zM746 571h2v1h-2zM749 571h2v1h-2zM748 572h1v1h-1zM727 562h4v1h-4zM726 563h1v1h-1zM731 563h2v1h-2zM725 564h1v1h-1zM733 564h1v6h-1zM724 565h1v4h-1zM725 569h1v2h-1zM732 570h1v1h-1zM726 571h6v1h-6zM708 562h4v1h-4zM706 563h2v1h-2zM712 563h1v1h-1zM706 564h1v1h-1zM713 564h1v1h-1zM705 565h1v5h-1zM714 565h1v5h-1zM706 570h1v1h-1zM713 570h1v1h-1zM707 571h6v1h-6zM689 562h4v1h-4zM687 563h2v1h-2zM693 563h1v1h-1zM686 564h1v2h-1zM694 564h1v1h-1zM695 565h1v4h-1zM685 566h1v2h-1zM686 568h1v2h-1zM694 569h1v2h-1zM687 570h1v1h-1zM688 571h2v1h-2zM691 571h3v1h-3zM690 572h1v1h-1zM669 562h4v1h-4zM668 563h1v1h-1zM673 563h2v1h-2zM667 564h1v1h-1zM675 564h1v2h-1zM666 565h1v4h-1zM676 566h1v2h-1zM675 568h1v2h-1zM667 569h1v2h-1zM674 570h1v1h-1zM668 571h3v1h-3zM672 571h2v1h-2zM671 572h1v1h-1zM650 562h4v1h-4zM649 563h1v1h-1zM654 563h2v1h-2zM648 564h1v1h-1zM655 564h1v1h-1zM647 565h1v5h-1zM656 565h1v5h-1zM648 570h1v1h-1zM655 570h1v1h-1zM649 571h6v1h-6zM631 562h4v1h-4zM629 563h2v1h-2zM635 563h1v1h-1zM628 564h1v6h-1zM636 564h1v1h-1zM637 565h1v4h-1zM636 569h1v2h-1zM629 570h1v1h-1zM630 571h6v1h-6zM611 562h5v1h-5zM610 563h1v1h-1zM616 563h1v1h-1zM609 564h1v2h-1zM617 564h1v2h-1zM608 566h1v3h-1zM618 566h1v3h-1zM609 569h1v1h-1zM617 569h1v1h-1zM610 570h1v1h-1zM616 570h1v1h-1zM611 571h2v1h-2zM614 571h2v1h-2zM613 572h1v1h-1zM592 562h4v1h-4zM591 563h1v1h-1zM596 563h2v1h-2zM590 564h1v1h-1zM598 564h1v6h-1zM589 565h1v4h-1zM590 569h1v2h-1zM597 570h1v1h-1zM591 571h6v1h-6zM573 562h4v1h-4zM571 563h2v1h-2zM577 563h1v1h-1zM571 564h1v1h-1zM578 564h1v1h-1zM570 565h1v5h-1zM579 565h1v5h-1zM571 570h1v1h-1zM578 570h1v1h-1zM572 571h6v1h-6zM554 562h4v1h-4zM552 563h2v1h-2zM558 563h1v1h-1zM551 564h1v2h-1zM559 564h1v1h-1zM560 565h1v4h-1zM550 566h1v2h-1zM551 568h1v2h-1zM559 569h1v2h-1zM552 570h1v1h-1zM553 571h2v1h-2zM556 571h3v1h-3zM555 572h1v1h-1zM534 562h4v1h-4zM533 563h1v1h-1zM538 563h2v1h-2zM532 564h1v1h-1zM540 564h1v2h-1zM531 565h1v4h-1zM541 566h1v2h-1zM540 568h1v2h-1zM532 569h1v2h-1zM539 570h1v1h-1zM533 571h3v1h-3zM537 571h2v1h-2zM536 572h1v1h-1zM515 562h4v1h-4zM514 563h1v1h-1zM519 563h2v1h-2zM513 564h1v1h-1zM520 564h1v1h-1zM512 565h1v5h-1zM521 565h1v5h-1zM513 570h1v1h-1zM520 570h1v1h-1zM514 571h6v1h-6zM496 562h4v1h-4zM494 563h2v1h-2zM500 563h1v1h-1zM493 564h1v6h-1zM501 564h1v1h-1zM502 565h1v4h-1zM501 569h1v2h-1zM494 570h1v1h-1zM495 571h6v1h-6zM476 562h5v1h-5zM475 563h1v1h-1zM481 563h1v1h-1zM474 564h1v2h-1zM482 564h1v2h-1zM473 566h1v3h-1zM483 566h1v3h-1zM474 569h1v1h-1zM482 569h1v1h-1zM475 570h1v1h-1zM481 570h1v1h-1zM476 571h2v1h-2zM479 571h2v1h-2zM478 572h1v1h-1zM457 562h4v1h-4zM456 563h1v1h-1zM461 563h2v1h-2zM455 564h1v1h-1zM463 564h1v6h-1zM454 565h1v5h-1zM455 570h1v1h-1zM462 570h1v1h-1zM456 571h6v1h-6zM438 562h4v1h-4zM436 563h2v1h-2zM442 563h1v1h-1zM436 564h1v1h-1zM443 564h1v1h-1zM435 565h1v5h-1zM444 565h1v5h-1zM436 570h1v1h-1zM443 570h1v1h-1zM437 571h6v1h-6zM418 562h5v1h-5zM417 563h1v1h-1zM423 563h1v1h-1zM416 564h1v2h-1zM424 564h1v1h-1zM425 565h1v4h-1zM415 566h1v2h-1zM416 568h1v2h-1zM424 569h1v2h-1zM417 570h1v1h-1zM418 571h2v1h-2zM421 571h3v1h-3zM420 572h1v1h-1zM399 562h4v1h-4zM398 563h1v1h-1zM403 563h2v1h-2zM397 564h1v1h-1zM405 564h1v2h-1zM396 565h1v4h-1zM406 566h1v2h-1zM405 568h1v2h-1zM397 569h1v2h-1zM404 570h1v1h-1zM398 571h3v1h-3zM402 571h2v1h-2zM401 572h1v1h-1zM380 562h4v1h-4zM379 563h1v1h-1zM384 563h1v1h-1zM378 564h1v1h-1zM385 564h1v1h-1zM377 565h1v5h-1zM386 565h1v5h-1zM378 570h1v1h-1zM385 570h1v1h-1zM379 571h6v1h-6zM361 562h4v1h-4zM359 563h2v1h-2zM365 563h1v1h-1zM358 564h1v3h-1zM366 564h1v1h-1zM367 565h1v4h-1zM357 567h1v1h-1zM358 568h1v2h-1zM366 569h1v2h-1zM359 570h1v1h-1zM360 571h6v1h-6zM341 562h5v1h-5zM340 563h1v1h-1zM346 563h1v1h-1zM339 564h1v2h-1zM347 564h1v2h-1zM338 566h1v3h-1zM348 566h1v3h-1zM339 569h1v1h-1zM347 569h1v1h-1zM339 570h2v1h-2zM346 570h1v1h-1zM341 571h2v1h-2zM344 571h2v1h-2zM343 572h1v1h-1zM322 562h4v1h-4zM321 563h1v1h-1zM326 563h2v1h-2zM320 564h1v1h-1zM328 564h1v6h-1zM319 565h1v5h-1zM320 570h1v1h-1zM327 570h1v1h-1zM321 571h6v1h-6zM303 562h4v1h-4zM301 563h2v1h-2zM307 563h1v1h-1zM301 564h1v1h-1zM308 564h1v1h-1zM300 565h1v5h-1zM309 565h1v5h-1zM301 570h1v1h-1zM308 570h1v1h-1zM302 571h6v1h-6zM283 562h5v1h-5zM282 563h1v1h-1zM288 563h1v1h-1zM281 564h1v2h-1zM289 564h1v1h-1zM290 565h1v4h-1zM280 566h1v2h-1zM281 568h1v2h-1zM289 569h1v2h-1zM282 570h1v1h-1zM283 571h2v1h-2zM286 571h3v1h-3zM285 572h1v1h-1zM264 562h4v1h-4zM263 563h1v1h-1zM268 563h2v1h-2zM262 564h1v1h-1zM270 564h1v3h-1zM261 565h1v4h-1zM271 567h1v1h-1zM270 568h1v2h-1zM262 569h1v2h-1zM269 570h1v1h-1zM263 571h3v1h-3zM267 571h2v1h-2zM266 572h1v1h-1zM245 562h4v1h-4zM244 563h1v1h-1zM249 563h1v1h-1zM243 564h1v1h-1zM250 564h1v1h-1zM242 565h1v5h-1zM251 565h1v5h-1zM243 570h1v1h-1zM250 570h1v1h-1zM244 571h6v1h-6zM226 562h4v1h-4zM224 563h2v1h-2zM230 563h1v1h-1zM231 564h1v1h-1zM232 565h1v4h-1zM231 569h1v2h-1zM225 571h6v1h-6zM766 591h4v1h-4zM764 592h2v1h-2zM770 592h1v1h-1zM763 593h1v6h-1zM771 593h1v1h-1zM772 594h1v4h-1zM771 598h1v2h-1zM764 599h1v1h-1zM765 600h6v1h-6zM746 591h5v1h-5zM745 592h1v1h-1zM751 592h1v1h-1zM744 593h1v2h-1zM752 593h1v2h-1zM743 595h1v3h-1zM753 595h1v3h-1zM744 598h1v1h-1zM752 598h1v1h-1zM745 599h1v1h-1zM751 599h1v1h-1zM746 600h5v1h-5zM727 591h4v1h-4zM726 592h1v1h-1zM731 592h2v1h-2zM725 593h1v1h-1zM733 593h1v6h-1zM724 594h1v4h-1zM725 598h1v2h-1zM732 599h1v1h-1zM726 600h6v1h-6zM708 591h4v1h-4zM706 592h2v1h-2zM712 592h1v1h-1zM705 593h1v6h-1zM713 593h1v1h-1zM714 594h1v5h-1zM706 599h1v1h-1zM713 599h1v1h-1zM707 600h6v1h-6zM688 591h5v1h-5zM687 592h1v1h-1zM693 592h1v1h-1zM686 593h1v2h-1zM694 593h1v1h-1zM695 594h1v4h-1zM685 595h1v2h-1zM686 597h1v2h-1zM694 598h1v1h-1zM687 599h1v1h-1zM693 599h2v1h-2zM688 600h5v1h-5zM669 591h5v1h-5zM668 592h1v1h-1zM674 592h1v1h-1zM667 593h1v1h-1zM675 593h1v2h-1zM666 594h1v4h-1zM676 595h1v2h-1zM675 597h1v2h-1zM667 598h1v1h-1zM667 599h2v1h-2zM674 599h1v1h-1zM669 600h5v1h-5zM650 591h4v1h-4zM649 592h1v1h-1zM654 592h2v1h-2zM648 593h1v1h-1zM655 593h1v1h-1zM647 594h1v5h-1zM656 594h1v5h-1zM648 599h1v1h-1zM655 599h1v1h-1zM649 600h6v1h-6zM631 591h4v1h-4zM629 592h2v1h-2zM635 592h1v1h-1zM628 593h1v6h-1zM636 593h1v1h-1zM637 594h1v4h-1zM636 598h1v2h-1zM629 599h1v1h-1zM630 600h6v1h-6zM611 591h5v1h-5zM610 592h1v1h-1zM616 592h1v1h-1zM609 593h1v2h-1zM617 593h1v2h-1zM608 595h1v3h-1zM618 595h1v3h-1zM609 598h1v1h-1zM617 598h1v1h-1zM610 599h1v1h-1zM616 599h1v1h-1zM611 600h5v1h-5zM592 591h4v1h-4zM591 592h1v1h-1zM596 592h2v1h-2zM590 593h1v1h-1zM598 593h1v6h-1zM589 594h1v4h-1zM590 598h1v2h-1zM597 599h1v1h-1zM591 600h6v1h-6zM573 591h4v1h-4zM571 592h2v1h-2zM577 592h1v1h-1zM570 593h1v6h-1zM578 593h1v1h-1zM579 594h1v5h-1zM571 599h1v1h-1zM578 599h1v1h-1zM572 600h6v1h-6zM553 591h5v1h-5zM552 592h1v1h-1zM558 592h1v1h-1zM551 593h1v2h-1zM559 593h1v1h-1zM560 594h1v4h-1zM550 595h1v2h-1zM551 597h1v2h-1zM559 598h1v1h-1zM552 599h1v1h-1zM558 599h2v1h-2zM553 600h5v1h-5zM534 591h5v1h-5zM533 592h1v1h-1zM539 592h1v1h-1zM532 593h1v1h-1zM540 593h1v2h-1zM531 594h1v4h-1zM541 595h1v2h-1zM540 597h1v2h-1zM532 598h1v1h-1zM532 599h2v1h-2zM539 599h1v1h-1zM534 600h5v1h-5zM515 591h4v1h-4zM514 592h1v1h-1zM519 592h2v1h-2zM513 593h1v1h-1zM520 593h1v1h-1zM512 594h1v5h-1zM521 594h1v5h-1zM513 599h1v1h-1zM520 599h1v1h-1zM514 600h6v1h-6zM495 591h5v1h-5zM494 592h1v1h-1zM500 592h1v1h-1zM493 593h1v6h-1zM501 593h1v1h-1zM502 594h1v4h-1zM501 598h1v2h-1zM494 599h1v1h-1zM495 600h6v1h-6zM476 591h5v1h-5zM475 592h1v1h-1zM481 592h1v1h-1zM474 593h1v2h-1zM482 593h1v2h-1zM473 595h1v3h-1zM483 595h1v3h-1zM474 598h1v1h-1zM482 598h1v1h-1zM475 599h1v1h-1zM481 599h1v1h-1zM476 600h5v1h-5zM457 591h4v1h-4zM456 592h1v1h-1zM461 592h2v1h-2zM455 593h1v1h-1zM463 593h1v6h-1zM454 594h1v4h-1zM455 598h1v2h-1zM462 599h1v1h-1zM456 600h6v1h-6zM438 591h4v1h-4zM436 592h2v1h-2zM442 592h1v1h-1zM435 593h1v6h-1zM443 593h1v1h-1zM444 594h1v5h-1zM436 599h1v1h-1zM443 599h1v1h-1zM437 600h6v1h-6zM418 591h5v1h-5zM417 592h1v1h-1zM423 592h1v1h-1zM416 593h1v2h-1zM424 593h1v1h-1zM425 594h1v4h-1zM415 595h1v2h-1zM416 597h1v2h-1zM424 598h1v1h-1zM417 599h1v1h-1zM423 599h1v1h-1zM418 600h5v1h-5zM399 591h5v1h-5zM398 592h1v1h-1zM404 592h1v1h-1zM397 593h1v1h-1zM405 593h1v2h-1zM396 594h1v4h-1zM406 595h1v2h-1zM405 597h1v2h-1zM397 598h1v1h-1zM397 599h2v1h-2zM404 599h1v1h-1zM399 600h5v1h-5zM380 591h4v1h-4zM378 592h2v1h-2zM384 592h2v1h-2zM378 593h1v1h-1zM385 593h1v1h-1zM377 594h1v5h-1zM386 594h1v5h-1zM378 599h1v1h-1zM385 599h1v1h-1zM379 600h6v1h-6zM360 591h5v1h-5zM359 592h1v1h-1zM365 592h1v1h-1zM358 593h1v6h-1zM366 593h1v1h-1zM367 594h1v4h-1zM366 598h1v2h-1zM359 599h1v1h-1zM360 600h6v1h-6zM341 591h5v1h-5zM340 592h1v1h-1zM346 592h1v1h-1zM339 593h1v2h-1zM347 593h1v2h-1zM338 595h1v3h-1zM348 595h1v3h-1zM339 598h1v1h-1zM347 598h1v1h-1zM340 599h1v1h-1zM346 599h1v1h-1zM341 600h5v1h-5zM322 591h4v1h-4zM321 592h1v1h-1zM326 592h2v1h-2zM320 593h1v1h-1zM328 593h1v6h-1zM319 594h1v4h-1zM320 598h1v2h-1zM327 599h1v1h-1zM321 600h6v1h-6zM303 591h4v1h-4zM301 592h2v1h-2zM307 592h1v1h-1zM300 593h1v6h-1zM308 593h1v1h-1zM309 594h1v5h-1zM301 599h1v1h-1zM308 599h1v1h-1zM302 600h6v1h-6zM283 591h5v1h-5zM282 592h1v1h-1zM288 592h1v1h-1zM281 593h1v2h-1zM289 593h1v1h-1zM290 594h1v4h-1zM280 595h1v2h-1zM281 597h1v2h-1zM289 598h1v1h-1zM282 599h1v1h-1zM288 599h1v1h-1zM283 600h5v1h-5zM264 591h5v1h-5zM263 592h1v1h-1zM269 592h1v1h-1zM262 593h1v1h-1zM270 593h1v2h-1zM261 594h1v4h-1zM271 595h1v2h-1zM270 597h1v2h-1zM262 598h1v2h-1zM269 599h1v1h-1zM263 600h6v1h-6zM245 591h4v1h-4zM243 592h2v1h-2zM249 592h2v1h-2zM243 593h1v1h-1zM250 593h1v1h-1zM242 594h1v5h-1zM251 594h1v5h-1zM243 599h1v1h-1zM250 599h1v1h-1zM244 600h6v1h-6zM225 591h5v1h-5zM230 592h1v1h-1zM231 593h1v1h-1zM232 594h1v4h-1zM231 598h1v2h-1zM225 600h6v1h-6zM765 620h5v1h-5zM764 621h1v1h-1zM770 621h1v1h-1zM763 622h1v6h-1zM771 622h1v1h-1zM772 623h1v4h-1zM771 627h1v1h-1zM764 628h1v1h-1zM770 628h2v1h-2zM765 629h5v1h-5zM746 620h5v1h-5zM745 621h1v1h-1zM751 621h1v1h-1zM744 622h1v2h-1zM752 622h1v2h-1zM743 624h1v3h-1zM753 624h1v3h-1zM744 627h1v1h-1zM752 627h1v1h-1zM745 628h1v1h-1zM751 628h1v1h-1zM746 629h5v1h-5zM727 620h5v1h-5zM726 621h1v1h-1zM732 621h1v1h-1zM725 622h1v1h-1zM733 622h1v6h-1zM724 623h1v4h-1zM725 627h1v1h-1zM725 628h2v1h-2zM732 628h1v1h-1zM727 629h5v1h-5zM708 620h4v1h-4zM706 621h2v1h-2zM712 621h2v1h-2zM705 622h1v6h-1zM713 622h1v1h-1zM714 623h1v5h-1zM706 628h1v1h-1zM713 628h1v1h-1zM707 629h6v1h-6zM688 620h5v1h-5zM687 621h1v1h-1zM693 621h1v1h-1zM686 622h1v2h-1zM694 622h1v1h-1zM695 623h1v4h-1zM685 624h1v2h-1zM686 626h1v2h-1zM694 627h1v1h-1zM687 628h1v1h-1zM693 628h1v1h-1zM688 629h5v1h-5zM669 620h5v1h-5zM668 621h1v1h-1zM674 621h1v1h-1zM667 622h1v1h-1zM675 622h1v2h-1zM666 623h1v4h-1zM676 624h1v2h-1zM675 626h1v2h-1zM667 627h1v1h-1zM668 628h1v1h-1zM674 628h1v1h-1zM669 629h5v1h-5zM650 620h4v1h-4zM648 621h2v1h-2zM654 621h2v1h-2zM648 622h1v1h-1zM656 622h1v6h-1zM647 623h1v5h-1zM648 628h1v1h-1zM655 628h1v1h-1zM649 629h6v1h-6zM630 620h5v1h-5zM629 621h1v1h-1zM635 621h1v1h-1zM628 622h1v6h-1zM636 622h1v1h-1zM637 623h1v4h-1zM636 627h1v1h-1zM629 628h1v1h-1zM635 628h2v1h-2zM630 629h5v1h-5zM611 620h5v1h-5zM610 621h1v1h-1zM616 621h1v1h-1zM609 622h1v2h-1zM617 622h1v2h-1zM608 624h1v3h-1zM618 624h1v3h-1zM609 627h1v1h-1zM617 627h1v1h-1zM610 628h1v1h-1zM616 628h1v1h-1zM611 629h5v1h-5zM592 620h5v1h-5zM591 621h1v1h-1zM597 621h1v1h-1zM590 622h1v1h-1zM598 622h1v6h-1zM589 623h1v4h-1zM590 627h1v1h-1zM590 628h2v1h-2zM597 628h1v1h-1zM592 629h5v1h-5zM572 620h5v1h-5zM571 621h1v1h-1zM577 621h2v1h-2zM570 622h1v6h-1zM578 622h1v1h-1zM579 623h1v5h-1zM571 628h1v1h-1zM578 628h1v1h-1zM572 629h6v1h-6zM553 620h5v1h-5zM552 621h1v1h-1zM558 621h1v1h-1zM551 622h1v2h-1zM559 622h1v1h-1zM560 623h1v4h-1zM550 624h1v2h-1zM551 626h1v2h-1zM559 627h1v1h-1zM552 628h1v1h-1zM558 628h1v1h-1zM553 629h5v1h-5zM534 620h5v1h-5zM533 621h1v1h-1zM539 621h1v1h-1zM532 622h1v1h-1zM540 622h1v2h-1zM531 623h1v4h-1zM541 624h1v2h-1zM540 626h1v2h-1zM532 627h1v1h-1zM533 628h1v1h-1zM539 628h1v1h-1zM534 629h5v1h-5zM515 620h4v1h-4zM513 621h2v1h-2zM519 621h2v1h-2zM513 622h1v1h-1zM521 622h1v6h-1zM512 623h1v5h-1zM513 628h1v1h-1zM520 628h1v1h-1zM514 629h6v1h-6zM495 620h5v1h-5zM494 621h1v1h-1zM500 621h1v1h-1zM493 622h1v6h-1zM501 622h1v1h-1zM502 623h1v4h-1zM501 627h1v1h-1zM494 628h1v1h-1zM500 628h2v1h-2zM495 629h5v1h-5zM476 620h5v1h-5zM475 621h1v1h-1zM481 621h1v1h-1zM474 622h1v1h-1zM482 622h1v2h-1zM473 623h1v4h-1zM483 624h1v3h-1zM474 627h1v1h-1zM482 627h1v1h-1zM475 628h1v1h-1zM481 628h1v1h-1zM476 629h5v1h-5zM457 620h5v1h-5zM456 621h1v1h-1zM462 621h1v1h-1zM455 622h1v1h-1zM463 622h1v6h-1zM454 623h1v4h-1zM455 627h1v2h-1zM462 628h1v1h-1zM456 629h6v1h-6zM437 620h5v1h-5zM436 621h1v1h-1zM442 621h2v1h-2zM435 622h1v6h-1zM443 622h1v1h-1zM444 623h1v4h-1zM443 627h1v2h-1zM436 628h1v1h-1zM437 629h6v1h-6zM418 620h5v1h-5zM417 621h1v1h-1zM423 621h1v1h-1zM416 622h1v2h-1zM424 622h1v1h-1zM425 623h1v4h-1zM415 624h1v2h-1zM416 626h1v2h-1zM424 627h1v1h-1zM417 628h1v1h-1zM423 628h1v1h-1zM418 629h5v1h-5zM399 620h5v1h-5zM398 621h1v1h-1zM404 621h1v1h-1zM397 622h1v1h-1zM405 622h1v2h-1zM396 623h1v4h-1zM406 624h1v2h-1zM405 626h1v2h-1zM397 627h1v1h-1zM398 628h1v1h-1zM404 628h1v1h-1zM399 629h5v1h-5zM380 620h4v1h-4zM378 621h2v1h-2zM384 621h2v1h-2zM378 622h1v1h-1zM386 622h1v6h-1zM377 623h1v5h-1zM378 628h1v1h-1zM385 628h1v1h-1zM379 629h6v1h-6zM360 620h5v1h-5zM359 621h1v1h-1zM365 621h1v1h-1zM358 622h1v6h-1zM366 622h1v1h-1zM367 623h1v4h-1zM366 627h1v1h-1zM359 628h1v1h-1zM365 628h2v1h-2zM360 629h5v1h-5zM341 620h5v1h-5zM340 621h1v1h-1zM346 621h1v1h-1zM339 622h1v1h-1zM347 622h1v2h-1zM338 623h1v4h-1zM348 624h1v2h-1zM347 626h1v2h-1zM339 627h1v1h-1zM340 628h1v1h-1zM346 628h1v1h-1zM341 629h5v1h-5zM322 620h5v1h-5zM321 621h1v1h-1zM327 621h1v1h-1zM320 622h1v1h-1zM328 622h1v6h-1zM319 623h1v4h-1zM320 627h1v2h-1zM327 628h1v1h-1zM321 629h6v1h-6zM302 620h5v1h-5zM301 621h1v1h-1zM307 621h1v1h-1zM300 622h1v6h-1zM308 622h1v1h-1zM309 623h1v4h-1zM308 627h1v2h-1zM301 628h1v1h-1zM302 629h6v1h-6zM283 620h5v1h-5zM282 621h1v1h-1zM288 621h1v1h-1zM281 622h1v2h-1zM289 622h1v1h-1zM290 623h1v4h-1zM280 624h1v2h-1zM281 626h1v2h-1zM289 627h1v1h-1zM282 628h1v1h-1zM288 628h1v1h-1zM283 629h5v1h-5zM264 620h5v1h-5zM263 621h1v1h-1zM269 621h1v1h-1zM262 622h1v1h-1zM270 622h1v2h-1zM261 623h1v4h-1zM271 624h1v2h-1zM270 626h1v2h-1zM262 627h1v1h-1zM262 628h2v1h-2zM269 628h1v1h-1zM264 629h5v1h-5zM245 620h4v1h-4zM243 621h2v1h-2zM249 621h2v1h-2zM243 622h1v1h-1zM250 622h1v1h-1zM242 623h1v5h-1zM251 623h1v5h-1zM243 628h1v1h-1zM250 628h1v1h-1zM244 629h6v1h-6zM225 620h5v1h-5zM230 621h1v1h-1zM231 622h1v1h-1zM232 623h1v4h-1zM231 627h1v1h-1zM230 628h2v1h-2zM225 629h5v1h-5zM765 649h5v1h-5zM764 650h1v1h-1zM770 650h1v1h-1zM763 651h1v6h-1zM771 651h1v1h-1zM772 652h1v4h-1zM771 656h1v1h-1zM764 657h1v1h-1zM770 657h2v1h-2zM765 658h5v1h-5zM746 649h5v1h-5zM745 650h1v1h-1zM751 650h1v1h-1zM744 651h1v1h-1zM752 651h1v1h-1zM743 652h1v4h-1zM753 652h1v4h-1zM744 656h1v1h-1zM752 656h1v1h-1zM745 657h1v1h-1zM751 657h1v1h-1zM746 658h5v1h-5zM727 649h5v1h-5zM726 650h1v1h-1zM732 650h1v1h-1zM725 651h1v1h-1zM733 651h1v6h-1zM724 652h1v4h-1zM725 656h1v1h-1zM725 657h2v1h-2zM732 657h1v1h-1zM727 658h5v1h-5zM707 649h5v1h-5zM706 650h1v1h-1zM712 650h2v1h-2zM705 651h1v6h-1zM713 651h1v1h-1zM714 652h1v4h-1zM713 656h1v1h-1zM706 657h1v1h-1zM712 657h2v1h-2zM707 658h5v1h-5zM688 649h5v1h-5zM687 650h1v1h-1zM693 650h1v1h-1zM686 651h1v2h-1zM694 651h1v1h-1zM695 652h1v4h-1zM685 653h1v2h-1zM686 655h1v2h-1zM694 656h1v1h-1zM687 657h1v1h-1zM693 657h1v1h-1zM688 658h5v1h-5zM669 649h5v1h-5zM668 650h1v1h-1zM674 650h1v1h-1zM667 651h1v1h-1zM675 651h1v2h-1zM666 652h1v4h-1zM676 653h1v2h-1zM675 655h1v2h-1zM667 656h1v1h-1zM668 657h1v1h-1zM674 657h1v1h-1zM669 658h5v1h-5zM650 649h5v1h-5zM648 650h2v1h-2zM655 650h1v1h-1zM648 651h1v1h-1zM656 651h1v6h-1zM647 652h1v4h-1zM648 656h1v2h-1zM655 657h1v1h-1zM649 658h6v1h-6zM630 649h5v1h-5zM629 650h1v1h-1zM635 650h1v1h-1zM628 651h1v6h-1zM636 651h1v1h-1zM637 652h1v4h-1zM636 656h1v1h-1zM629 657h1v1h-1zM635 657h1v1h-1zM630 658h5v1h-5zM611 649h5v1h-5zM610 650h1v1h-1zM616 650h1v1h-1zM609 651h1v1h-1zM617 651h1v2h-1zM608 652h1v4h-1zM618 653h1v2h-1zM617 655h1v2h-1zM609 656h1v1h-1zM610 657h1v1h-1zM616 657h1v1h-1zM611 658h5v1h-5zM592 649h5v1h-5zM590 650h2v1h-2zM597 650h1v1h-1zM590 651h1v1h-1zM598 651h1v6h-1zM589 652h1v4h-1zM590 656h1v1h-1zM590 657h2v1h-2zM597 657h1v1h-1zM592 658h5v1h-5zM572 649h5v1h-5zM571 650h1v1h-1zM577 650h2v1h-2zM570 651h1v6h-1zM578 651h1v1h-1zM579 652h1v4h-1zM578 656h1v1h-1zM571 657h1v1h-1zM577 657h2v1h-2zM572 658h5v1h-5zM553 649h5v1h-5zM552 650h1v1h-1zM558 650h1v1h-1zM551 651h1v2h-1zM559 651h1v1h-1zM560 652h1v4h-1zM550 653h1v2h-1zM551 655h1v2h-1zM559 656h1v1h-1zM552 657h1v1h-1zM558 657h1v1h-1zM553 658h5v1h-5zM534 649h5v1h-5zM533 650h1v1h-1zM539 650h1v1h-1zM532 651h1v1h-1zM540 651h1v2h-1zM531 652h1v4h-1zM541 653h1v2h-1zM540 655h1v2h-1zM532 656h1v1h-1zM533 657h1v1h-1zM539 657h1v1h-1zM534 658h5v1h-5zM514 649h6v1h-6zM513 650h1v2h-1zM520 650h1v1h-1zM521 651h1v6h-1zM512 652h1v4h-1zM513 656h1v2h-1zM520 657h1v1h-1zM514 658h6v1h-6zM495 649h5v1h-5zM494 650h1v1h-1zM500 650h1v1h-1zM493 651h1v6h-1zM501 651h1v1h-1zM502 652h1v4h-1zM501 656h1v1h-1zM494 657h1v1h-1zM500 657h1v1h-1zM495 658h5v1h-5zM476 649h5v1h-5zM475 650h1v1h-1zM481 650h1v1h-1zM474 651h1v1h-1zM482 651h1v2h-1zM473 652h1v4h-1zM483 653h1v2h-1zM482 655h1v2h-1zM474 656h1v1h-1zM475 657h1v1h-1zM481 657h1v1h-1zM476 658h5v1h-5zM457 649h5v1h-5zM455 650h2v1h-2zM462 650h1v1h-1zM455 651h1v1h-1zM463 651h1v6h-1zM454 652h1v4h-1zM455 656h1v1h-1zM455 657h2v1h-2zM462 657h1v1h-1zM457 658h5v1h-5zM437 649h5v1h-5zM436 650h1v1h-1zM442 650h2v1h-2zM435 651h1v6h-1zM443 651h1v1h-1zM444 652h1v4h-1zM443 656h1v1h-1zM436 657h1v1h-1zM442 657h2v1h-2zM437 658h5v1h-5zM418 649h5v1h-5zM417 650h1v1h-1zM423 650h1v1h-1zM416 651h1v2h-1zM424 651h1v1h-1zM425 652h1v4h-1zM415 653h1v2h-1zM416 655h1v2h-1zM424 656h1v1h-1zM417 657h1v1h-1zM423 657h1v1h-1zM418 658h5v1h-5zM399 649h5v1h-5zM398 650h1v1h-1zM404 650h1v1h-1zM397 651h1v1h-1zM405 651h1v2h-1zM396 652h1v4h-1zM406 653h1v2h-1zM405 655h1v2h-1zM397 656h1v1h-1zM398 657h1v1h-1zM404 657h1v1h-1zM399 658h5v1h-5zM379 649h6v1h-6zM378 650h1v1h-1zM385 650h1v1h-1zM377 651h1v6h-1zM386 651h1v6h-1zM378 657h1v1h-1zM385 657h1v1h-1zM379 658h6v1h-6zM360 649h5v1h-5zM359 650h1v1h-1zM365 650h1v1h-1zM358 651h1v6h-1zM366 651h1v1h-1zM367 652h1v4h-1zM366 656h1v1h-1zM359 657h1v1h-1zM365 657h1v1h-1zM360 658h5v1h-5zM341 649h5v1h-5zM340 650h1v1h-1zM346 650h1v1h-1zM339 651h1v1h-1zM347 651h1v2h-1zM338 652h1v4h-1zM348 653h1v2h-1zM347 655h1v2h-1zM339 656h1v1h-1zM340 657h1v1h-1zM346 657h1v1h-1zM341 658h5v1h-5zM322 649h5v1h-5zM320 650h2v1h-2zM327 650h1v1h-1zM320 651h1v1h-1zM328 651h1v6h-1zM319 652h1v4h-1zM320 656h1v1h-1zM320 657h2v1h-2zM327 657h1v1h-1zM322 658h5v1h-5zM302 649h5v1h-5zM301 650h1v1h-1zM307 650h2v1h-2zM300 651h1v6h-1zM308 651h1v1h-1zM309 652h1v4h-1zM308 656h1v1h-1zM301 657h1v1h-1zM307 657h2v1h-2zM302 658h5v1h-5zM283 649h5v1h-5zM282 650h1v1h-1zM288 650h1v1h-1zM281 651h1v2h-1zM289 651h1v1h-1zM290 652h1v4h-1zM280 653h1v2h-1zM281 655h1v2h-1zM289 656h1v1h-1zM282 657h1v1h-1zM288 657h1v1h-1zM283 658h5v1h-5zM264 649h5v1h-5zM263 650h1v1h-1zM269 650h1v1h-1zM262 651h1v1h-1zM270 651h1v2h-1zM261 652h1v4h-1zM271 653h1v2h-1zM270 655h1v2h-1zM262 656h1v1h-1zM263 657h1v1h-1zM269 657h1v1h-1zM264 658h5v1h-5zM244 649h6v1h-6zM243 650h1v1h-1zM250 650h1v1h-1zM242 651h1v6h-1zM251 651h1v6h-1zM243 657h1v1h-1zM250 657h1v1h-1zM244 658h6v1h-6zM225 649h5v1h-5zM230 650h1v1h-1zM231 651h1v1h-1zM232 652h1v4h-1zM231 656h1v1h-1zM230 657h1v1h-1zM225 658h5v1h-5zM765 678h5v1h-5zM764 679h1v1h-1zM770 679h2v1h-2zM763 680h1v6h-1zM771 680h1v1h-1zM772 681h1v4h-1zM771 685h1v1h-1zM764 686h1v1h-1zM770 686h1v1h-1zM765 687h5v1h-5zM746 678h5v1h-5zM745 679h1v1h-1zM751 679h1v1h-1zM744 680h1v1h-1zM752 680h1v1h-1zM743 681h1v3h-1zM753 681h1v3h-1zM744 684h1v2h-1zM752 684h1v2h-1zM745 686h1v1h-1zM751 686h1v1h-1zM746 687h5v1h-5zM727 678h5v1h-5zM725 679h2v1h-2zM732 679h1v1h-1zM725 680h1v1h-1zM733 680h1v6h-1zM724 681h1v4h-1zM725 685h1v1h-1zM726 686h1v1h-1zM732 686h1v1h-1zM727 687h5v1h-5zM707 678h6v1h-6zM706 679h1v1h-1zM713 679h1v1h-1zM705 680h1v6h-1zM714 680h1v5h-1zM713 685h1v1h-1zM706 686h1v1h-1zM712 686h2v1h-2zM707 687h5v1h-5zM688 678h5v1h-5zM687 679h1v1h-1zM693 679h1v1h-1zM686 680h1v2h-1zM694 680h1v1h-1zM695 681h1v4h-1zM685 682h1v2h-1zM686 684h1v2h-1zM694 685h1v1h-1zM687 686h1v1h-1zM693 686h1v1h-1zM688 687h5v1h-5zM669 678h5v1h-5zM668 679h1v1h-1zM674 679h1v1h-1zM667 680h1v1h-1zM675 680h1v2h-1zM666 681h1v4h-1zM676 682h1v2h-1zM675 684h1v2h-1zM667 685h1v1h-1zM668 686h1v1h-1zM674 686h1v1h-1zM669 687h5v1h-5zM649 678h6v1h-6zM648 679h1v1h-1zM655 679h1v1h-1zM647 680h1v5h-1zM656 680h1v6h-1zM648 685h1v1h-1zM648 686h2v1h-2zM654 686h2v1h-2zM650 687h4v1h-4zM630 678h5v1h-5zM629 679h1v1h-1zM635 679h2v1h-2zM628 680h1v6h-1zM636 680h1v1h-1zM637 681h1v4h-1zM636 685h1v1h-1zM629 686h1v1h-1zM635 686h1v1h-1zM630 687h5v1h-5zM611 678h5v1h-5zM610 679h1v1h-1zM616 679h1v1h-1zM609 680h1v1h-1zM617 680h1v1h-1zM608 681h1v3h-1zM618 681h1v3h-1zM609 684h1v2h-1zM617 684h1v2h-1zM610 686h1v1h-1zM616 686h1v1h-1zM611 687h5v1h-5zM592 678h5v1h-5zM590 679h2v1h-2zM597 679h1v1h-1zM590 680h1v1h-1zM598 680h1v6h-1zM589 681h1v4h-1zM590 685h1v1h-1zM591 686h1v1h-1zM597 686h1v1h-1zM592 687h5v1h-5zM572 678h6v1h-6zM571 679h1v1h-1zM578 679h1v2h-1zM570 680h1v6h-1zM579 681h1v4h-1zM578 685h1v1h-1zM571 686h1v1h-1zM577 686h2v1h-2zM572 687h5v1h-5zM553 678h5v1h-5zM552 679h1v1h-1zM558 679h1v1h-1zM551 680h1v2h-1zM559 680h1v1h-1zM560 681h1v4h-1zM550 682h1v2h-1zM551 684h1v2h-1zM559 685h1v1h-1zM552 686h1v1h-1zM558 686h1v1h-1zM553 687h5v1h-5zM534 678h5v1h-5zM533 679h1v1h-1zM539 679h1v1h-1zM532 680h1v1h-1zM540 680h1v2h-1zM531 681h1v4h-1zM541 682h1v2h-1zM540 684h1v2h-1zM532 685h1v1h-1zM533 686h1v1h-1zM539 686h1v1h-1zM534 687h5v1h-5zM514 678h6v1h-6zM513 679h1v1h-1zM520 679h1v1h-1zM512 680h1v5h-1zM521 680h1v6h-1zM513 685h1v1h-1zM513 686h2v1h-2zM519 686h2v1h-2zM515 687h4v1h-4zM495 678h5v1h-5zM494 679h1v1h-1zM500 679h2v1h-2zM493 680h1v6h-1zM501 680h1v1h-1zM502 681h1v4h-1zM501 685h1v1h-1zM494 686h1v1h-1zM500 686h1v1h-1zM495 687h5v1h-5zM476 678h5v1h-5zM475 679h1v1h-1zM481 679h1v1h-1zM474 680h1v1h-1zM482 680h1v1h-1zM473 681h1v4h-1zM483 681h1v3h-1zM482 684h1v2h-1zM474 685h1v1h-1zM475 686h1v1h-1zM481 686h1v1h-1zM476 687h5v1h-5zM457 678h5v1h-5zM455 679h2v1h-2zM462 679h1v1h-1zM455 680h1v1h-1zM463 680h1v6h-1zM454 681h1v4h-1zM455 685h1v1h-1zM456 686h1v1h-1zM462 686h1v1h-1zM457 687h5v1h-5zM437 678h6v1h-6zM436 679h1v1h-1zM443 679h1v2h-1zM435 680h1v6h-1zM444 681h1v4h-1zM443 685h1v1h-1zM436 686h1v1h-1zM442 686h2v1h-2zM437 687h5v1h-5zM418 678h5v1h-5zM417 679h1v1h-1zM423 679h1v1h-1zM416 680h1v2h-1zM424 680h1v1h-1zM425 681h1v4h-1zM415 682h1v2h-1zM416 684h1v2h-1zM424 685h1v1h-1zM417 686h1v1h-1zM423 686h1v1h-1zM418 687h5v1h-5zM399 678h5v1h-5zM398 679h1v1h-1zM404 679h1v1h-1zM397 680h1v1h-1zM405 680h1v2h-1zM396 681h1v4h-1zM406 682h1v2h-1zM405 684h1v2h-1zM397 685h1v1h-1zM398 686h1v1h-1zM404 686h1v1h-1zM399 687h5v1h-5zM379 678h6v1h-6zM378 679h1v1h-1zM385 679h1v1h-1zM377 680h1v5h-1zM386 680h1v6h-1zM378 685h1v1h-1zM378 686h2v1h-2zM384 686h2v1h-2zM380 687h4v1h-4zM360 678h5v1h-5zM359 679h1v1h-1zM365 679h2v1h-2zM358 680h1v6h-1zM366 680h1v1h-1zM367 681h1v4h-1zM366 685h1v1h-1zM359 686h1v1h-1zM365 686h1v1h-1zM360 687h5v1h-5zM341 678h5v1h-5zM340 679h1v1h-1zM346 679h1v1h-1zM339 680h1v1h-1zM347 680h1v2h-1zM338 681h1v4h-1zM348 682h1v2h-1zM347 684h1v2h-1zM339 685h1v1h-1zM340 686h1v1h-1zM346 686h1v1h-1zM341 687h5v1h-5zM321 678h6v1h-6zM320 679h1v2h-1zM327 679h1v1h-1zM328 680h1v6h-1zM319 681h1v4h-1zM320 685h1v1h-1zM321 686h1v1h-1zM327 686h1v1h-1zM322 687h5v1h-5zM302 678h6v1h-6zM301 679h1v1h-1zM308 679h1v2h-1zM300 680h1v6h-1zM309 681h1v4h-1zM308 685h1v1h-1zM301 686h1v1h-1zM307 686h2v1h-2zM302 687h5v1h-5zM283 678h5v1h-5zM282 679h1v1h-1zM288 679h1v1h-1zM281 680h1v2h-1zM289 680h1v1h-1zM290 681h1v4h-1zM280 682h1v2h-1zM281 684h1v2h-1zM289 685h1v1h-1zM282 686h1v1h-1zM288 686h1v1h-1zM283 687h5v1h-5zM264 678h5v1h-5zM263 679h1v1h-1zM269 679h1v1h-1zM262 680h1v1h-1zM270 680h1v2h-1zM261 681h1v4h-1zM271 682h1v2h-1zM270 684h1v2h-1zM262 685h1v1h-1zM263 686h1v1h-1zM269 686h1v1h-1zM264 687h5v1h-5zM244 678h6v1h-6zM243 679h1v1h-1zM250 679h1v1h-1zM242 680h1v5h-1zM251 680h1v6h-1zM243 685h1v1h-1zM243 686h2v1h-2zM249 686h2v1h-2zM245 687h4v1h-4zM225 678h5v1h-5zM230 679h2v1h-2zM231 680h1v1h-1zM232 681h1v4h-1zM231 685h1v1h-1zM230 686h1v1h-1zM225 687h5v1h-5zM765 707h6v1h-6zM764 708h1v1h-1zM771 708h1v2h-1zM763 709h1v6h-1zM772 710h1v4h-1zM771 714h1v1h-1zM764 715h1v1h-1zM770 715h1v1h-1zM765 716h5v1h-5zM746 707h5v1h-5zM745 708h1v1h-1zM751 708h1v1h-1zM744 709h1v1h-1zM752 709h1v1h-1zM743 710h1v3h-1zM753 710h1v3h-1zM744 713h1v2h-1zM752 713h1v2h-1zM745 715h1v1h-1zM751 715h1v1h-1zM746 716h5v1h-5zM726 707h6v1h-6zM725 708h1v2h-1zM732 708h1v1h-1zM733 709h1v6h-1zM724 710h1v4h-1zM725 714h1v1h-1zM726 715h1v1h-1zM732 715h1v1h-1zM727 716h5v1h-5zM707 707h6v1h-6zM706 708h1v1h-1zM713 708h1v1h-1zM705 709h1v6h-1zM714 709h1v5h-1zM713 714h1v1h-1zM706 715h2v1h-2zM712 715h1v1h-1zM708 716h4v1h-4zM688 707h5v1h-5zM687 708h1v1h-1zM693 708h2v1h-2zM686 709h1v2h-1zM694 709h1v1h-1zM695 710h1v4h-1zM685 711h1v2h-1zM686 713h1v2h-1zM694 714h1v1h-1zM687 715h1v1h-1zM693 715h1v1h-1zM688 716h5v1h-5zM669 707h5v1h-5zM667 708h2v1h-2zM674 708h1v1h-1zM667 709h1v1h-1zM675 709h1v2h-1zM666 710h1v4h-1zM676 711h1v2h-1zM675 713h1v2h-1zM667 714h1v1h-1zM668 715h1v1h-1zM674 715h1v1h-1zM669 716h5v1h-5zM649 707h6v1h-6zM648 708h1v1h-1zM655 708h1v1h-1zM647 709h1v5h-1zM656 709h1v5h-1zM648 714h1v1h-1zM655 714h1v1h-1zM649 715h1v1h-1zM654 715h2v1h-2zM650 716h4v1h-4zM630 707h6v1h-6zM629 708h1v1h-1zM636 708h1v2h-1zM628 709h1v6h-1zM637 710h1v4h-1zM636 714h1v1h-1zM629 715h1v1h-1zM635 715h1v1h-1zM630 716h5v1h-5zM611 707h5v1h-5zM610 708h1v1h-1zM616 708h1v1h-1zM609 709h1v1h-1zM617 709h1v1h-1zM608 710h1v3h-1zM618 710h1v3h-1zM609 713h1v2h-1zM617 713h1v2h-1zM610 715h1v1h-1zM616 715h1v1h-1zM611 716h5v1h-5zM591 707h6v1h-6zM590 708h1v2h-1zM597 708h1v1h-1zM598 709h1v6h-1zM589 710h1v4h-1zM590 714h1v1h-1zM591 715h1v1h-1zM596 715h2v1h-2zM592 716h4v1h-4zM572 707h6v1h-6zM571 708h1v1h-1zM578 708h1v1h-1zM570 709h1v6h-1zM579 709h1v5h-1zM578 714h1v1h-1zM571 715h2v1h-2zM577 715h1v1h-1zM573 716h4v1h-4zM553 707h5v1h-5zM552 708h1v1h-1zM558 708h1v1h-1zM551 709h1v2h-1zM559 709h1v1h-1zM560 710h1v4h-1zM550 711h1v2h-1zM551 713h1v2h-1zM559 714h1v1h-1zM552 715h1v1h-1zM558 715h1v1h-1zM553 716h5v1h-5zM534 707h5v1h-5zM532 708h2v1h-2zM539 708h1v1h-1zM532 709h1v1h-1zM540 709h1v2h-1zM531 710h1v4h-1zM541 711h1v2h-1zM540 713h1v2h-1zM532 714h1v1h-1zM533 715h1v1h-1zM539 715h1v1h-1zM534 716h5v1h-5zM514 707h6v1h-6zM513 708h1v1h-1zM520 708h1v1h-1zM512 709h1v5h-1zM521 709h1v5h-1zM513 714h1v1h-1zM520 714h1v1h-1zM513 715h2v1h-2zM519 715h2v1h-2zM515 716h4v1h-4zM495 707h6v1h-6zM494 708h1v1h-1zM501 708h1v2h-1zM493 709h1v6h-1zM502 710h1v4h-1zM501 714h1v1h-1zM494 715h1v1h-1zM500 715h1v1h-1zM495 716h5v1h-5zM476 707h5v1h-5zM475 708h1v1h-1zM481 708h1v1h-1zM474 709h1v1h-1zM482 709h1v1h-1zM473 710h1v3h-1zM483 710h1v3h-1zM474 713h1v2h-1zM482 713h1v2h-1zM475 715h1v1h-1zM481 715h1v1h-1zM476 716h5v1h-5zM456 707h6v1h-6zM455 708h1v2h-1zM462 708h1v1h-1zM463 709h1v6h-1zM454 710h1v4h-1zM455 714h1v1h-1zM456 715h1v1h-1zM461 715h2v1h-2zM457 716h4v1h-4zM437 707h6v1h-6zM436 708h1v1h-1zM443 708h1v1h-1zM435 709h1v6h-1zM444 709h1v5h-1zM443 714h1v1h-1zM436 715h2v1h-2zM442 715h1v1h-1zM438 716h4v1h-4zM418 707h5v1h-5zM417 708h1v1h-1zM423 708h1v1h-1zM416 709h1v2h-1zM424 709h1v1h-1zM425 710h1v4h-1zM415 711h1v2h-1zM416 713h1v2h-1zM424 714h1v1h-1zM417 715h1v1h-1zM423 715h1v1h-1zM418 716h5v1h-5zM399 707h5v1h-5zM397 708h2v1h-2zM404 708h1v1h-1zM397 709h1v1h-1zM405 709h1v2h-1zM396 710h1v4h-1zM406 711h1v2h-1zM405 713h1v2h-1zM397 714h1v1h-1zM398 715h1v1h-1zM404 715h1v1h-1zM399 716h5v1h-5zM379 707h6v1h-6zM378 708h1v1h-1zM385 708h1v1h-1zM377 709h1v5h-1zM386 709h1v5h-1zM378 714h1v1h-1zM385 714h1v1h-1zM378 715h2v1h-2zM384 715h2v1h-2zM380 716h4v1h-4zM360 707h6v1h-6zM359 708h1v1h-1zM366 708h1v2h-1zM358 709h1v6h-1zM367 710h1v4h-1zM366 714h1v1h-1zM359 715h1v1h-1zM365 715h1v1h-1zM360 716h5v1h-5zM341 707h5v1h-5zM340 708h1v1h-1zM346 708h1v1h-1zM339 709h1v1h-1zM347 709h1v1h-1zM338 710h1v3h-1zM348 710h1v3h-1zM339 713h1v2h-1zM347 713h1v2h-1zM340 715h1v1h-1zM346 715h1v1h-1zM341 716h5v1h-5zM321 707h6v1h-6zM320 708h1v2h-1zM327 708h1v1h-1zM328 709h1v6h-1zM319 710h1v4h-1zM320 714h1v1h-1zM321 715h1v1h-1zM326 715h2v1h-2zM322 716h4v1h-4zM302 707h6v1h-6zM301 708h1v1h-1zM308 708h1v1h-1zM300 709h1v6h-1zM309 709h1v5h-1zM308 714h1v1h-1zM301 715h2v1h-2zM307 715h1v1h-1zM303 716h4v1h-4zM283 707h5v1h-5zM282 708h1v1h-1zM288 708h1v1h-1zM281 709h1v2h-1zM289 709h1v1h-1zM290 710h1v4h-1zM280 711h1v2h-1zM281 713h1v2h-1zM289 714h1v1h-1zM282 715h1v1h-1zM288 715h1v1h-1zM283 716h5v1h-5zM264 707h5v1h-5zM262 708h2v1h-2zM269 708h1v1h-1zM262 709h1v1h-1zM270 709h1v2h-1zM261 710h1v4h-1zM271 711h1v2h-1zM270 713h1v2h-1zM262 714h1v1h-1zM263 715h1v1h-1zM269 715h1v1h-1zM264 716h5v1h-5zM244 707h6v1h-6zM243 708h1v1h-1zM250 708h1v1h-1zM242 709h1v5h-1zM251 709h1v5h-1zM243 714h1v1h-1zM250 714h1v1h-1zM243 715h2v1h-2zM249 715h2v1h-2zM245 716h4v1h-4zM225 707h6v1h-6zM231 708h1v2h-1zM232 710h1v4h-1zM231 714h1v1h-1zM230 715h1v1h-1zM225 716h5v1h-5z"/><rect x="319.5" y="170.5" width="85" height="86" fill="#c9c9c9" stroke="#767676" stroke-width="1"/><text x="362" y="220.3" text-anchor="middle" font-family="Liberation Sans" font-weight="bold" font-size="18.5" fill="#808080">TOP</text></svg><div class="a" style="left:226px;top:95px;width:76px;height:21px;background:#fff;border:1px solid #b0b0b0;border-left-color:#e2e2e2;border-top-color:#e8e8e8;border-bottom:none;box-sizing:border-box"></div><div class="a" style="left:301px;top:95px;width:109px;height:22px;background:#fff;border:1px solid #b0b0b0;border-bottom:none;box-sizing:border-box"></div><div class="a" style="left:409px;top:95px;width:40px;height:21px;background:#fff;border-left:1px solid #b0b0b0;border-top:1px solid #b0b0b0;box-sizing:border-box"></div><svg class="a" style="left:0;top:0" width="779" height="120"><path d="M286.8 102.3 L294.4 108.6 M294.4 102.3 L286.8 108.6" stroke="#707070" stroke-width="2.1"/><path d="M394.6 102.3 L402.2 108.6 M402.2 102.3 L394.6 108.6" stroke="#707070" stroke-width="2.1"/><path d="M412 99 H421 L424 102 V113 H412 Z" fill="#7b3fd1"/><path d="M420.3 99.2 L423.8 102.7" stroke="#fff" stroke-width="0.9"/><path d="M421.6 99 L424 101.4 V99 Z" fill="#7b3fd1" opacity="0.7"/></svg><div class="t" style="left:230.77px;top:101.04px;font-size:12px;color:#444;transform:scaleX(0.9261);">Recipe 1</div><div class="t" style="left:306.30px;top:101.04px;font-size:12px;color:#000;transform:scaleX(0.9795);">holes on wafer</div><div class="t" style="left:434.94px;top:101.04px;font-size:12px;color:#444;transform:scaleX(0.9598);">New</div><div class="a" style="left:69px;top:6px;width:1px;height:80px;background:#aabcd9"></div><div class="a" style="left:239px;top:6px;width:1px;height:80px;background:#aabcd9"></div><div class="a" style="left:441px;top:6px;width:1px;height:80px;background:#aabcd9"></div><div class="a" style="left:534px;top:6px;width:1px;height:80px;background:#aabcd9"></div><div class="a" style="left:635px;top:6px;width:1px;height:80px;background:#aabcd9"></div><div class="a" style="left:692px;top:6px;width:1px;height:80px;background:#aabcd9"></div><div class="a" style="left:446px;top:1px;width:85px;height:73px;background:#d5e1f2"></div><div class="a" style="left:0px;top:94px;width:779px;height:1px;background:#333"></div><svg class="a" style="left:0;top:0" width="779" height="95" viewBox="0 0 779 95"><circle cx="34.9" cy="18.9" r="13.9" fill="#999"/><path d="M28.2 12.2 L41.7 25.7 M41.7 12.2 L28.2 25.7" stroke="#fff" stroke-width="3.4" stroke-linecap="butt"/><rect x="80" y="7" width="28" height="24" rx="2" fill="#7b3fd1"/><path d="M84 10 V28 H105" stroke="#fff" stroke-width="2" fill="none"/><path d="M85 23.5 L88.5 18 L93.4 22 L99 13 L104.7 10.6" stroke="#fff" stroke-width="2" fill="none"/><rect x="136" y="8" width="28" height="24" rx="2" fill="#7b3fd1"/><path d="M140 11 V29 H161" stroke="#fff" stroke-width="2" fill="none"/><path d="M141 24.5 L144.5 19 L149.4 23 L155 14 L160.7 11.6" stroke="#fff" stroke-width="2" fill="none"/><g fill="#7b3fd1" stroke="#7b3fd1"><circle cx="219.8" cy="9.2" r="4.3" stroke="none"/><path d="M209.9 11.3 L218.6 19.4" stroke-width="5.6" stroke-linecap="round"/><path d="M213.5 15.5 L219.5 9.5" stroke-width="6.5"/><path d="M206 19.3 L211 13.5 L216.5 18 L214.5 19.8 Z" stroke="none"/></g><path d="M206.8 18.6 L199.5 25.8 Q197 29.5 196.8 31.3 Q198.8 31.3 202.3 28.5 L213.8 19.6" stroke="#7b3fd1" stroke-width="1.5" fill="none"/><path d="M272.8 6.8 Q286 6 299.2 6.8 Q300 20 299.2 33.2 Q286 34 272.8 33.2 Q272 20 272.8 6.8 Z" stroke="#7b3fd1" stroke-width="1.5" fill="none"/><path d="M286 7 V33 M273 20 H299" stroke="#7b3fd1" stroke-width="1.4"/><path d="M279 7 V10 M279 30 V33 M273 13 H276 M296 13 H299 M279 17 V23 M283 13 H289" stroke="#7b3fd1" stroke-width="1.1"/><path d="M293 7 V10 M293 30 V33 M273 27 H276 M296 27 H299 M293 17 V23 M283 27 H289" stroke="#7b3fd1" stroke-width="1.1"/><path d="M276.5 13 H281.5 M279 10.5 V15.5" stroke="#7b3fd1" stroke-width="1.8"/><path d="M276.5 27 H281.5 M279 24.5 V29.5" stroke="#7b3fd1" stroke-width="1.8"/><path d="M290.5 13 H295.5 M293 10.5 V15.5" stroke="#7b3fd1" stroke-width="1.8"/><path d="M290.5 27 H295.5 M293 24.5 V29.5" stroke="#7b3fd1" stroke-width="1.8"/><path d="M474.8 6.8 Q488 6 501.2 6.8 Q502 20 501.2 33.2 Q488 34 474.8 33.2 Q474 20 474.8 6.8 Z" stroke="#7b3fd1" stroke-width="1.5" fill="none"/><path d="M488 7 V33 M475 20 H501" stroke="#7b3fd1" stroke-width="1.4"/><path d="M481 7 V10 M481 30 V33 M475 13 H478 M498 13 H501 M481 17 V23 M485 13 H491" stroke="#7b3fd1" stroke-width="1.1"/><path d="M495 7 V10 M495 30 V33 M475 27 H478 M498 27 H501 M495 17 V23 M485 27 H491" stroke="#7b3fd1" stroke-width="1.1"/><path d="M478.5 13 H483.5 M481 10.5 V15.5" stroke="#7b3fd1" stroke-width="1.8"/><path d="M478.5 27 H483.5 M481 24.5 V29.5" stroke="#7b3fd1" stroke-width="1.8"/><path d="M492.5 13 H497.5 M495 10.5 V15.5" stroke="#7b3fd1" stroke-width="1.8"/><path d="M492.5 27 H497.5 M495 24.5 V29.5" stroke="#7b3fd1" stroke-width="1.8"/><path d="M369.8 6.5 Q383 4.5 396.2 6.5 Q398.5 19.5 396.2 32.8 Q383 34.8 369.8 32.8 Q367.5 19.5 369.8 6.5 Z" stroke="#7b3fd1" stroke-width="1.8" fill="none"/><rect x="372.5" y="9.5" width="21" height="21" stroke="#7b3fd1" stroke-width="2" fill="none" stroke-dasharray="2 2"/><circle cx="550" cy="13" r="7" fill="#949494"/><circle cx="550" cy="37" r="7" fill="#949494"/><path d="M543.5 60.8 L550 56.5 L556.5 60.8" stroke="#8a8a8a" stroke-width="1.6" fill="none"/><rect x="553" y="55" width="2.5" height="2.5" fill="#8a8a8a"/><path d="M545.5 68 V62 L550 59 L554.5 62 V68 H552.2 V63.5 Q550 61.5 547.8 63.5 V68 Z" fill="#8a8a8a"/><rect x="656.2" y="13.1" width="5.6" height="13.6" rx="1.3" stroke="#7b3fd1" stroke-width="2.5" fill="none"/><path d="M660.6 17.2 L657.6 22.4" stroke="#7b3fd1" stroke-width="1.6"/><path d="M666 14.1 H669.4 V27 M666 26.5 H673" stroke="#7b3fd1" stroke-width="2.6" fill="none"/><path d="M172.5 62 H177.5 L175.0 65 Z" fill="#333"/><path d="M316 62 H321 L318.5 65 Z" fill="#333"/><path d="M413.5 62 H418.5 L416.0 65 Z" fill="#333"/><path d="M518.5 62 H523.5 L521.0 65 Z" fill="#333"/><path d="M662 62 H667 L664.5 65 Z" fill="#333"/></svg><div class="t" style="left:17.40px;top:43.24px;font-size:12px;color:#4b4b4b;transform:scaleX(0.9108);">Cancel</div><div class="t" style="left:14.87px;top:77.34px;font-size:12px;color:#4b4b4b;transform:scaleX(0.9310);">Process</div><div class="t" style="left:80.00px;top:43.24px;font-size:12px;color:#4b4b4b;transform:scaleX(0.9333);">Chart</div><div class="t" style="left:137.56px;top:43.04px;font-size:12px;color:#4b4b4b;transform:scaleX(0.9360);">Data</div><div class="t" style="left:122.30px;top:59.04px;font-size:12px;color:#4b4b4b;transform:scaleX(1.0974);">Monitor</div><div class="t" style="left:190.62px;top:43.04px;font-size:12px;color:#4b4b4b;transform:scaleX(0.9842);">Inspect</div><div class="t" style="left:196.09px;top:59.04px;font-size:12px;color:#4b4b4b;transform:scaleX(0.9120);">Data</div><div class="t" style="left:124.71px;top:77.24px;font-size:12px;color:#4b4b4b;transform:scaleX(0.9885);">Diagnostics</div><div class="t" style="left:271.50px;top:43.04px;font-size:12px;color:#4b4b4b;transform:scaleX(0.9516);">Galvo</div><div class="t" style="left:252.30px;top:59.04px;font-size:12px;color:#4b4b4b;transform:scaleX(0.9877);">Calibration</div><div class="t" style="left:341.00px;top:43.04px;font-size:12px;color:#4b4b4b;transform:scaleX(0.9882);">Galvo Distortion</div><div class="t" style="left:351.00px;top:59.04px;font-size:12px;color:#4b4b4b;transform:scaleX(1.0000);">Correction</div><div class="t" style="left:326.00px;top:77.24px;font-size:12px;color:#4b4b4b;transform:scaleX(0.9516);">Galvo</div><div class="t" style="left:474.70px;top:43.04px;font-size:12px;color:#4b4b4b;transform:scaleX(0.9129);">Stage</div><div class="t" style="left:454.60px;top:59.04px;font-size:12px;color:#4b4b4b;transform:scaleX(0.9789);">Calibration</div><div class="t" style="left:561.86px;top:8.64px;font-size:12px;color:#4b4b4b;transform:scaleX(0.9379);">Enable Axes</div><div class="t" style="left:562.94px;top:32.04px;font-size:12px;color:#4b4b4b;transform:scaleX(0.9574);">Disable Axes</div><div class="t" style="left:562.00px;top:55.94px;font-size:12px;color:#4b4b4b;transform:scaleX(1.0000);">Home</div><div class="t" style="left:649.91px;top:43.24px;font-size:12px;color:#4b4b4b;transform:scaleX(1.0885);">Input</div><div class="t" style="left:84.64px;top:100.96px;font-size:18px;color:#484848;transform:scaleX(0.9564);">Recipe</div><div class="t" style="left:5.58px;top:151.34px;font-size:12px;color:#333;transform:scaleX(0.9226);">Name</div><div class="a" style="left:446px;top:74px;width:317px;height:633px;background:#fff;border:1px solid #bcbcbc;box-sizing:border-box"></div><div class="a" style="left:448px;top:76px;width:313px;height:7px;background:#ececec"></div><div class="a" style="left:569px;top:79px;width:72px;height:2px;background:repeating-linear-gradient(90deg,#fff 0 2px,transparent 2px 4px)"></div><div class="a" style="left:568px;top:78px;width:72px;height:2px;background:repeating-linear-gradient(90deg,#9a9a9a 0 2px,transparent 2px 4px)"></div><div class="a" style="left:603px;top:89px;width:150px;height:23px;border:1px solid #a5a5a5;background:#fff;box-sizing:border-box"></div><div class="a" style="left:736px;top:90px;width:16px;height:21px;background:#efefef"></div><svg class="a" style="left:741.0px;top:99.0px" width="7" height="4"><path d="M0.8 0.2 H6.2 L3.5 3.4 Z" fill="#000"/></svg><div class="a" style="left:603px;top:115px;width:150px;height:23px;border:1px solid #a5a5a5;background:#fff;box-sizing:border-box"></div><div class="a" style="left:736px;top:116px;width:16px;height:21px;background:#efefef"></div><svg class="a" style="left:741.0px;top:125.0px" width="7" height="4"><path d="M0.8 0.2 H6.2 L3.5 3.4 Z" fill="#000"/></svg><div class="a" style="left:606px;top:118px;width:127px;height:17px;background:#0078d7"></div><div class="a" style="left:603px;top:141px;width:150px;height:21px;border:1px solid #a5a5a5;background:#fff;box-sizing:border-box"></div><div class="a" style="left:603px;top:165px;width:150px;height:21px;border:1px solid #a5a5a5;background:#fff;box-sizing:border-box"></div><div class="a" style="left:456px;top:189px;width:297px;height:28px;border:1px solid #cfcfcf;background:#fff;box-sizing:border-box"></div><div class="a" style="left:603px;top:220px;width:150px;height:21px;border:1px solid #a5a5a5;background:#fff;box-sizing:border-box"></div><div class="a" style="left:603px;top:244px;width:150px;height:21px;border:1px solid #a5a5a5;background:#fff;box-sizing:border-box"></div><div class="a" style="left:603px;top:268px;width:150px;height:21px;border:1px solid #a5a5a5;background:#fff;box-sizing:border-box"></div><div class="a" style="left:603px;top:324px;width:150px;height:24px;border:1px solid #a5a5a5;background:#fff;box-sizing:border-box"></div><div class="a" style="left:736px;top:325px;width:16px;height:22px;background:#efefef"></div><svg class="a" style="left:741.0px;top:334.5px" width="7" height="4"><path d="M0.8 0.2 H6.2 L3.5 3.4 Z" fill="#000"/></svg><div class="a" style="left:608px;top:329px;width:19px;height:14px;background:#000080;border:1px solid #000;box-sizing:border-box"></div><svg class="a" style="left:459px;top:299px" width="13" height="13"><rect x="0" y="0" width="13" height="13" rx="2.5" fill="#0060c4"/><path d="M3.2 6.6 L5.4 8.8 L9.8 4.4" stroke="#fff" stroke-width="1.2" fill="none"/></svg><svg class="a" style="left:605px;top:359px" width="13" height="13"><rect x="0.5" y="0.5" width="12" height="12" rx="2.5" fill="#f3f3f3" stroke="#555" stroke-width="1"/></svg><div class="a" style="left:456px;top:393px;width:5px;height:1px;background:#888"></div><div class="a" style="left:592px;top:393px;width:164px;height:1px;background:#888"></div><div class="a" style="left:456px;top:428px;width:210px;height:23px;border:1px solid #e9e9e9;border-bottom:1px solid #9a9a9a;background:#fff;box-sizing:border-box"></div><div class="a" style="left:672px;top:428px;width:81px;height:23px;border:1px solid #a5a5a5;background:#fff;box-sizing:border-box"></div><svg class="a" style="left:458px;top:460px" width="13" height="13"><rect x="0.5" y="0.5" width="12" height="12" rx="2.5" fill="#f3f3f3" stroke="#555" stroke-width="1"/></svg><div class="a" style="left:603px;top:487px;width:150px;height:23px;border:1px solid #a5a5a5;background:#fff;box-sizing:border-box"></div><div class="a" style="left:736px;top:488px;width:16px;height:21px;background:#efefef"></div><svg class="a" style="left:741.0px;top:497.0px" width="7" height="4"><path d="M0.8 0.2 H6.2 L3.5 3.4 Z" fill="#000"/></svg><div class="a" style="left:456px;top:516px;width:297px;height:55px;border:1px solid #a5a5a5;background:#fff;box-sizing:border-box"></div><div class="a" style="left:456px;top:593px;width:5px;height:1px;background:#888"></div><div class="a" style="left:629px;top:593px;width:127px;height:1px;background:#888"></div><svg class="a" style="left:459px;top:612px" width="13" height="13"><rect x="0" y="0" width="13" height="13" rx="2.5" fill="#0060c4"/><path d="M3.2 6.6 L5.4 8.8 L9.8 4.4" stroke="#fff" stroke-width="1.2" fill="none"/></svg><div class="a" style="left:459px;top:640px;width:147px;height:55px;border:1px solid #a5a5a5;background:#fff;box-sizing:border-box"></div><div class="a" style="left:612px;top:640px;width:138px;height:55px;border:1px solid #cfcfcf;background:#fff;box-sizing:border-box"></div><div class="t" style="left:459.60px;top:94.04px;font-size:12px;color:#484848;transform:scaleX(1.0077);">Controller</div><div class="t" style="left:607.20px;top:95.14px;font-size:12px;color:#000;transform:scaleX(0.8720);">ACS</div><div class="t" style="left:459.30px;top:119.74px;font-size:12px;color:#484848;transform:scaleX(0.9395);">Camera</div><div class="t" style="left:607.70px;top:120.74px;font-size:12px;color:#fff;transform:scaleX(0.9113);">Camera 1</div><div class="t" style="left:459.30px;top:145.94px;font-size:12px;color:#484848;transform:scaleX(0.9927);">X Center Point (mm)</div><div class="t" style="left:606.20px;top:145.74px;font-size:12px;color:#000;transform:scaleX(0.8833);">0.000</div><div class="t" style="left:459.30px;top:170.14px;font-size:12px;color:#484848;transform:scaleX(0.9927);">Y Center Point (mm)</div><div class="t" style="left:606.20px;top:169.74px;font-size:12px;color:#000;transform:scaleX(0.8833);">0.000</div><div class="t" style="left:548.22px;top:196.64px;font-size:12px;color:#484848;transform:scaleX(0.9598);">Get Current Cameras</div><div class="t" style="left:459.60px;top:225.14px;font-size:12px;color:#484848;transform:scaleX(0.9672);">X Step (mm)</div><div class="t" style="left:606.20px;top:224.74px;font-size:12px;color:#000;transform:scaleX(0.8833);">1.000</div><div class="t" style="left:459.60px;top:249.14px;font-size:12px;color:#484848;transform:scaleX(0.9672);">Y Step (mm)</div><div class="t" style="left:606.20px;top:248.74px;font-size:12px;color:#000;transform:scaleX(0.8833);">1.000</div><div class="t" style="left:458.31px;top:273.14px;font-size:12px;color:#484848;transform:scaleX(0.9868);">Radius (mm)</div><div class="t" style="left:606.20px;top:273.14px;font-size:12px;color:#000;transform:scaleX(0.8750);">100.000</div><div class="t" style="left:478.60px;top:300.94px;font-size:12px;color:#484848;transform:scaleX(1.0000);">Circular Calibration Artifact</div><div class="t" style="left:459.43px;top:332.94px;font-size:12px;color:#484848;transform:scaleX(0.9741);">Example Color:</div><div class="t" style="left:632.73px;top:330.94px;font-size:12px;color:#000;transform:scaleX(0.9667);">Navy</div><div class="t" style="left:624.40px;top:360.14px;font-size:12px;color:#484848;transform:scaleX(0.9595);">Show Sample Points</div><div class="t" style="left:464.30px;top:386.34px;font-size:12px;color:#555;transform:scaleX(0.9395);">Step 2. Measure Errors</div><div class="t" style="left:459.20px;top:412.04px;font-size:12px;color:#484848;transform:scaleX(0.9656);">Select Data File Name and Location:</div><div class="t" style="left:459.60px;top:432.84px;font-size:12px;color:#000;transform:scaleX(0.9547);">C:\Users\SarunasVaskelis\TableCalibrat</div><div class="t" style="left:692.53px;top:435.34px;font-size:12px;color:#484848;transform:scaleX(0.9667);">Browse</div><div class="t" style="left:477.40px;top:462.04px;font-size:12px;color:#484848;transform:scaleX(0.9766);">Autofocus on Each Sample</div><div class="t" style="left:458.19px;top:492.04px;font-size:12px;color:#484848;transform:scaleX(1.0065);">Find Points Mode</div><div class="t" style="left:606.47px;top:492.84px;font-size:12px;color:#000;transform:scaleX(1.0289);">Manual</div><div class="t" style="left:573.62px;top:538.14px;font-size:12px;color:#484848;transform:scaleX(0.9847);">Find Points</div><div class="t" style="left:464.30px;top:585.94px;font-size:12px;color:#555;transform:scaleX(0.9726);">Step 3.Upload Correction File</div><div class="t" style="left:477.61px;top:613.64px;font-size:12px;color:#484848;transform:scaleX(0.9883);">Extrapolate correction across field</div><div class="t" style="left:478.60px;top:654.14px;font-size:12px;color:#484848;transform:scaleX(1.0028);">Upload to Controller</div><div class="t" style="left:517.70px;top:668.24px;font-size:12px;color:#484848;transform:scaleX(0.8697);">(ACS)</div><div class="t" style="left:627.61px;top:662.14px;font-size:12px;color:#484848;transform:scaleX(0.9904);">Remove Calibration</div></body></html>
